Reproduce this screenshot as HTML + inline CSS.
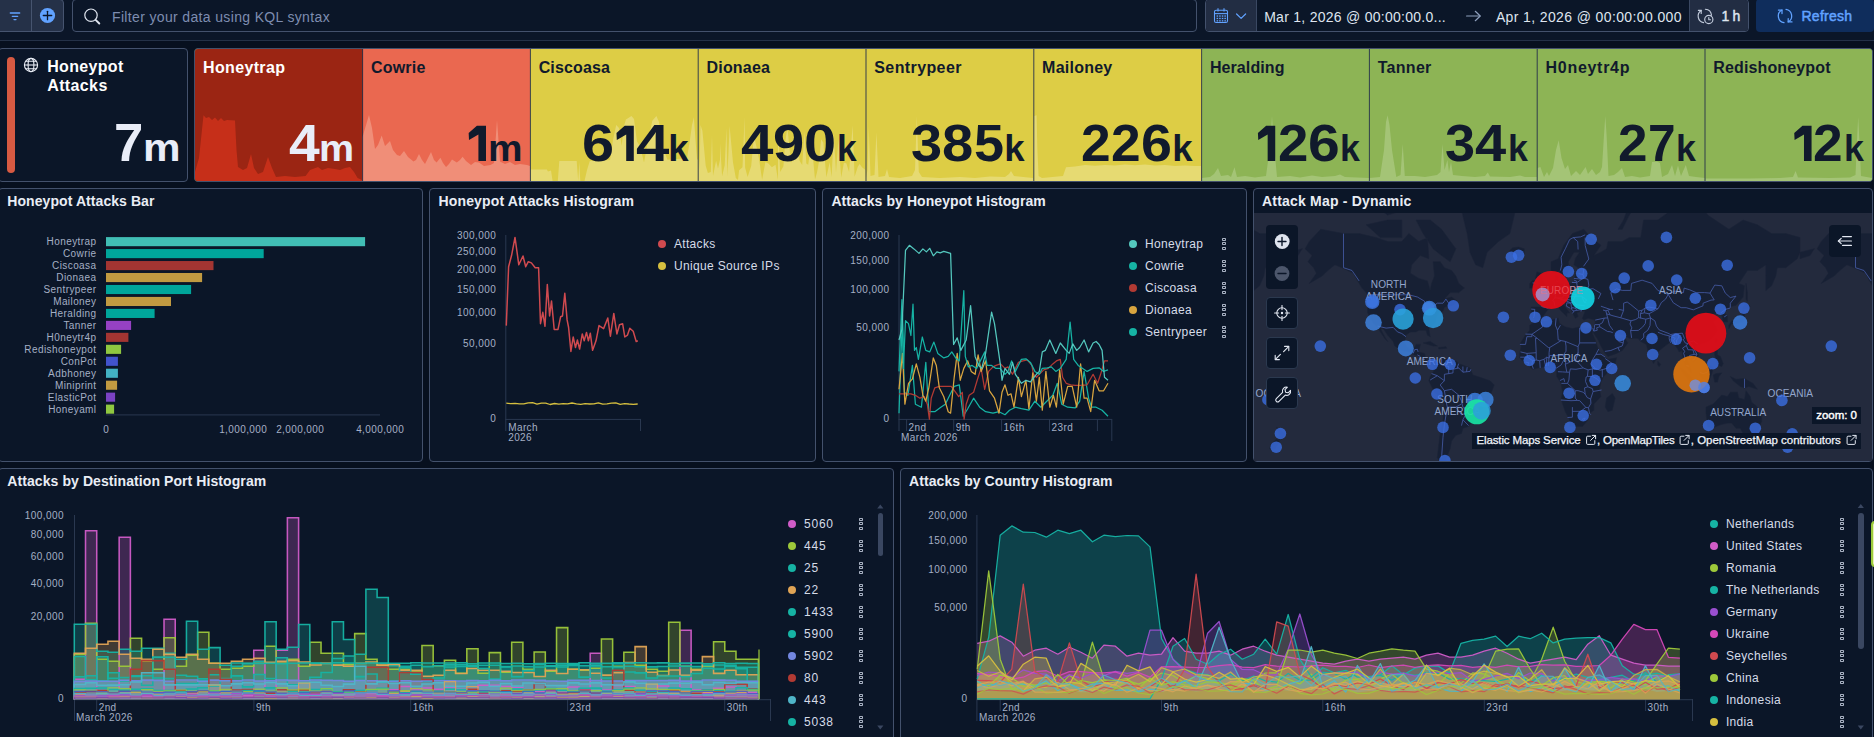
<!DOCTYPE html>
<html lang="en"><head><meta charset="utf-8"><title>Honeypot Attacks Dashboard</title>
<style>
*{box-sizing:border-box;margin:0;padding:0}
html,body{width:1874px;height:737px;overflow:hidden;background:#07101f;font-family:"Liberation Sans",sans-serif;}
body{position:relative}
.t{position:absolute;white-space:nowrap;display:block}
.abs{position:absolute}
.panel{position:absolute;background:#0b1628;border:1px solid #43516c;border-radius:4px;overflow:hidden}
svg{position:absolute;left:0;top:0;overflow:visible}
svg text{font-family:"Liberation Sans",sans-serif}
.topbar{position:absolute;left:0;top:0;width:1874px;height:41px;background:#0b1628;border-bottom:1px solid #243147}
.ctl{position:absolute;background:#0b1628;border:1px solid #43516c;border-radius:4px}
.mapbtn{position:absolute;width:32px;height:32px;background:#0b1628;border:1px solid #2b394f;border-radius:4px}
.dot{position:absolute;width:8px;height:8px;border-radius:50%}
.act{position:absolute;width:4px;height:12px}
.act i{position:absolute;left:0;width:4px;height:3px;border:1px solid #a9b2c3;border-radius:0.8px;display:block}
</style></head><body>

<div class="topbar">
<div class="abs" style="left:-1px;top:-1px;width:65px;height:33px;background:#253148;border:1px solid #46546f;border-radius:0 4px 4px 0"></div>
<div class="abs" style="left:31px;top:0;width:1px;height:31px;background:#46546f"></div>
<svg width="64" height="32" viewBox="0 0 64 32"><g stroke="#61a2ff" stroke-width="1.3" stroke-linecap="round"><line x1="10.3" y1="13" x2="19.7" y2="13"/><line x1="12.3" y1="16.3" x2="17.7" y2="16.3"/><line x1="14" y1="19.6" x2="16" y2="19.6"/></g><circle cx="47.5" cy="15.5" r="7.6" fill="#61a2ff"/><g stroke="#0b1628" stroke-width="1.3" stroke-linecap="round"><line x1="43.3" y1="15.5" x2="51.7" y2="15.5"/><line x1="47.5" y1="11.3" x2="47.5" y2="19.7"/></g></svg>
<div class="ctl" style="left:72px;top:-1px;width:1125px;height:33px"></div>
<svg width="120" height="32" viewBox="0 0 120 32"><circle cx="91" cy="15.2" r="6.2" fill="none" stroke="#dfe5ef" stroke-width="1.2"/><line x1="95.6" y1="19.8" x2="99.3" y2="23.5" stroke="#dfe5ef" stroke-width="1.9" stroke-linecap="round"/></svg>
<span class="t" style="left:112.00px;top:9.00px;font-size:14px;line-height:17px;color:#7e8db0;letter-spacing:0.349px;">Filter your data using KQL syntax</span>
<div class="ctl" style="left:1205px;top:-1px;width:543.5px;height:33px;overflow:hidden"><div class="abs" style="left:0;top:0;width:51px;height:31px;background:#222d43;border-right:1px solid #3a4862"></div><div class="abs" style="left:483px;top:0;width:60px;height:31px;background:#222d43;border-left:1px solid #3a4862"></div></div>
<svg width="1874" height="32" viewBox="0 0 1874 32"><g fill="none" stroke="#61a2ff" stroke-width="1.1"><rect x="1214.5" y="10.2" width="13" height="12.3" rx="1.6"/><line x1="1214.5" y1="13.6" x2="1227.5" y2="13.6"/><line x1="1218" y1="8.3" x2="1218" y2="11.5"/><line x1="1224" y1="8.3" x2="1224" y2="11.5"/></g><g fill="#61a2ff"><rect x="1216.6" y="15.4" width="1.5" height="1.3"/><rect x="1216.6" y="17.8" width="1.5" height="1.3"/><rect x="1216.6" y="20.2" width="1.5" height="1.3"/><rect x="1219.2" y="15.4" width="1.5" height="1.3"/><rect x="1219.2" y="17.8" width="1.5" height="1.3"/><rect x="1219.2" y="20.2" width="1.5" height="1.3"/><rect x="1221.8" y="15.4" width="1.5" height="1.3"/><rect x="1221.8" y="17.8" width="1.5" height="1.3"/><rect x="1221.8" y="20.2" width="1.5" height="1.3"/><rect x="1224.4" y="15.4" width="1.5" height="1.3"/><rect x="1224.4" y="17.8" width="1.5" height="1.3"/><rect x="1224.4" y="20.2" width="1.5" height="1.3"/></g><polyline points="1236.6,14 1241.1,18.4 1245.6,14" fill="none" stroke="#61a2ff" stroke-width="1.2" stroke-linecap="round" stroke-linejoin="round"/><g fill="none" stroke="#8e9fbc" stroke-width="1.2" stroke-linecap="round" stroke-linejoin="round"><line x1="1466.6" y1="16" x2="1480" y2="16"/><polyline points="1475.3,11.3 1480.2,16 1475.3,20.7"/></g><g fill="none" stroke="#c3ccdc" stroke-width="1.15" stroke-linecap="round" stroke-linejoin="round"><path d="M1703.6,22.6 A6.7,6.7 0 0 1 1701.2,10.4"/><polyline points="1698.4,10.4 1701.2,10.4 1701.2,13.5"/><path d="M1705.4,9.3 A6.7,6.7 0 0 1 1711.5,15.2"/><circle cx="1708.8" cy="19.5" r="4.1" fill="#222d43"/><polyline points="1708.8,17.6 1708.8,19.7 1710.5,19.7"/></g></svg>
<span class="t" style="left:1264.20px;top:8.80px;font-size:14px;line-height:17px;color:#dfe5ef;letter-spacing:0.269px;">Mar 1, 2026 @ 00:00:00.0...</span>
<span class="t" style="left:1495.90px;top:8.80px;font-size:14px;line-height:17px;color:#dfe5ef;letter-spacing:0.38px;">Apr 1, 2026 @ 00:00:00.000</span>
<span class="t" style="left:1721.50px;top:7.80px;font-size:14px;line-height:17px;color:#dfe5ef;letter-spacing:-0.321px;-webkit-text-stroke:0.45px #dfe5ef;">1 h</span>
<div class="abs" style="left:1755.5px;top:-1px;width:118.5px;height:33px;background:#0f2d5c;border-radius:4px"></div>
<svg width="1874" height="32" viewBox="0 0 1874 32"><g fill="none" stroke="#61a2ff" stroke-width="1.25" stroke-linecap="round" stroke-linejoin="round"><path d="M1784,22.6 A6.7,6.7 0 0 1 1782,10.0"/><polyline points="1778.4,10.1 1782,10.1 1782,13.6"/><path d="M1786,9.4 A6.7,6.7 0 0 1 1788.2,21.9"/><polyline points="1788.2,18.5 1788.2,21.9 1792,21.9"/></g></svg>
<span class="t" style="left:1801.50px;top:7.80px;font-size:14px;line-height:17px;color:#61a2ff;letter-spacing:0.24px;-webkit-text-stroke:0.5px #61a2ff;">Refresh</span>
</div>
<div class="panel" style="left:-2px;top:48px;width:190px;height:134px">
<div class="abs" style="left:8px;top:8px;width:8px;height:116px;border-radius:4px;background:#d75a42"></div>
</div>
<svg width="60" height="90" viewBox="0 0 60 90"><g fill="none" stroke="#e9edf5" stroke-width="1.1"><circle cx="31" cy="65" r="6.6"/><ellipse cx="31" cy="65" rx="2.9" ry="6.6"/><line x1="24.4" y1="65" x2="37.6" y2="65"/><path d="M25.6,61.3 H36.4 M25.6,68.7 H36.4"/></g></svg>
<span class="t" style="left:47.20px;top:57.00px;font-size:16px;line-height:19px;color:#ffffff;font-weight:700;letter-spacing:0.328px;">Honeypot</span>
<span class="t" style="left:47.20px;top:76.00px;font-size:16px;line-height:19px;color:#ffffff;font-weight:700;letter-spacing:0.385px;">Attacks</span>
<span class="t" style="left:114.30px;top:109.50px;font-size:53.77906976744187px;line-height:65px;color:#e9edf8;font-weight:700;transform:scaleX(0.9799);transform-origin:0 0">7</span>
<span class="t" style="left:142.97px;top:123.00px;font-size:39.7px;line-height:48px;color:#e9edf8;font-weight:700;transform:scaleX(1.0632);transform-origin:0 0">m</span>
<div class="panel" style="left:194px;top:48px;width:1679px;height:134px;background:#8db455">
<div class="abs" style="left:-0.2px;top:0;width:168.30px;height:132px;background:#9b2513"></div>
<div class="abs" style="left:167.6px;top:0;width:168.30px;height:132px;background:#ea6850"></div>
<div class="abs" style="left:335.4px;top:0;width:168.30px;height:132px;background:#ddcd45"></div>
<div class="abs" style="left:503.2px;top:0;width:168.30px;height:132px;background:#ddcd45"></div>
<div class="abs" style="left:671.0px;top:0;width:168.30px;height:132px;background:#ddcd45"></div>
<div class="abs" style="left:838.8px;top:0;width:168.30px;height:132px;background:#ddcd45"></div>
<div class="abs" style="left:1006.6px;top:0;width:168.30px;height:132px;background:#8db455"></div>
<div class="abs" style="left:1174.4px;top:0;width:168.30px;height:132px;background:#8db455"></div>
<div class="abs" style="left:1342.2px;top:0;width:168.30px;height:132px;background:#8db455"></div>
<div class="abs" style="left:1510.0px;top:0;width:168.30px;height:132px;background:#8db455"></div>
</div>
<svg width="1874" height="190" viewBox="0 0 1874 190">
<defs><clipPath id="cpm"><rect x="195" y="49" width="1677" height="132" rx="3"/></clipPath></defs><g clip-path="url(#cpm)">
<polygon points="194.8,182.0 195.0,172.0 199.0,158.0 203.5,115.3 206.0,118.0 209.0,117.0 212.0,120.0 215.0,117.5 218.0,121.0 221.0,118.0 224.0,121.0 227.0,120.0 235.0,120.5 236.5,150.0 238.0,167.0 243.0,170.0 247.0,168.0 251.0,154.0 254.0,168.0 258.0,174.0 263.0,172.0 268.0,157.0 272.0,168.0 276.0,177.0 285.0,176.0 295.0,177.0 305.6,176.0 310.0,170.0 318.0,167.0 322.0,170.0 328.0,168.0 335.0,169.0 340.0,170.0 345.0,168.0 350.0,167.0 354.0,172.0 357.6,178.0 362.0,180.0 362.6,182.0" fill="#c62f19"/>
<polygon points="362.6,182.0 362.5,137.0 369.0,115.0 372.0,128.0 375.0,149.0 378.0,145.0 381.7,135.5 385.0,146.0 390.0,141.0 393.0,150.0 397.0,155.0 400.0,156.0 404.0,151.0 408.0,157.0 413.5,161.5 416.0,160.0 419.0,154.0 422.0,160.0 425.0,164.0 428.0,158.0 431.0,152.0 434.0,160.0 436.6,162.5 440.4,157.7 443.0,163.0 446.0,167.0 449.0,164.0 452.0,159.6 456.8,162.5 460.0,160.0 462.6,156.7 466.0,161.0 471.0,165.0 475.0,162.0 479.0,162.5 484.0,166.0 490.5,165.0 494.0,163.0 497.0,120.0 500.0,161.5 505.0,164.0 510.0,162.0 515.0,165.0 520.0,164.0 527.0,165.0 530.0,166.0 530.4,182.0" fill="#f08e78"/>
<polygon points="530.4,182.0 530.5,169.4 546.8,169.4 548.0,171.5 551.0,170.5 552.6,181.0 557.8,181.0 559.3,161.0 576.7,161.0 578.2,181.0 579.3,162.0 580.3,181.0 584.5,181.0 587.0,170.0 589.8,161.0 600.0,160.5 610.0,160.0 613.0,140.0 616.2,125.0 619.0,128.0 621.7,145.8 624.0,126.0 625.9,119.4 631.5,116.0 634.0,119.0 637.0,141.6 640.0,146.0 644.0,162.4 647.0,146.0 652.3,120.8 656.4,116.0 659.0,122.0 662.0,145.8 667.5,159.7 687.0,158.3 689.7,141.6 692.0,125.0 693.9,117.3 695.5,140.0 697.0,159.0 698.0,160.0 698.2,182.0" fill="#e6da72"/>
<polygon points="698.2,182.0 698.5,150.0 699.5,170.7 700.5,125.0 702.4,130.8 705.7,165.8 707.9,173.0 710.8,172.0 712.0,135.0 713.0,176.0 716.1,160.7 718.0,168.4 720.0,159.7 720.0,143.0 722.1,176.3 724.7,165.3 726.5,128.0 727.4,176.5 729.6,125.9 733.0,162.4 735.8,178.1 738.0,180.0 739.1,170.2 742.5,167.3 744.6,117.0 745.1,167.6 747.6,177.1 751.2,166.1 754.0,136.0 756.8,148.2 759.2,160.0 762.1,179.7 765.4,162.1 768.4,163.5 771.9,167.3 775.5,164.7 778.0,180.0 778.1,128.5 780.2,172.0 783.4,166.2 785.3,141.3 787.4,127.8 791.0,162.6 793.3,159.6 796.4,129.5 799.6,160.7 802.2,164.9 804.5,131.5 806.3,163.4 808.2,164.7 811.5,141.6 815.0,179.6 817.0,172.6 819.1,160.9 821.1,139.2 823.3,142.4 826.4,177.2 829.7,162.2 831.6,176.9 833.7,133.5 836.0,172.4 838.4,138.9 841.2,177.6 843.9,162.7 846.3,163.2 849.1,172.1 852.6,125.2 854.6,176.7 857.8,166.7 859.6,164.0 862.3,167.5 865.5,170.0 866.0,182.0" fill="#e6da72"/>
<polygon points="866.0,182.0 866.0,178.0 867.5,170.0 868.7,126.8 870.5,176.0 874.5,175.0 876.4,132.6 878.5,177.0 885.0,176.0 887.0,169.0 889.0,177.0 900.0,178.0 912.0,176.0 915.0,170.0 916.8,116.0 918.8,172.0 922.0,177.0 940.0,178.0 960.0,177.0 975.0,178.0 990.0,176.5 1005.0,177.0 1009.0,174.0 1011.0,171.0 1014.0,176.0 1033.0,178.0 1033.8,182.0" fill="#e6da72"/>
<polygon points="1033.8,182.0 1033.5,150.0 1034.2,116.0 1036.6,115.3 1037.4,150.0 1038.6,176.0 1042.0,178.0 1063.0,176.0 1066.0,167.3 1075.0,166.5 1085.0,165.0 1095.0,165.8 1105.0,165.0 1115.0,165.6 1125.0,164.6 1135.0,165.3 1145.0,164.5 1155.0,165.5 1165.0,165.0 1175.0,166.0 1185.0,165.4 1195.0,166.0 1201.0,166.0 1201.6,182.0" fill="#e6da72"/>
<polygon points="1201.6,182.0 1201.5,178.0 1210.0,177.0 1214.0,174.0 1218.0,168.0 1221.0,176.0 1228.0,175.0 1231.0,177.0 1234.5,167.3 1237.0,177.0 1245.0,176.0 1255.0,177.5 1266.0,176.0 1269.5,150.0 1272.0,116.0 1274.5,150.0 1277.0,177.0 1290.0,176.0 1300.0,177.5 1312.0,175.5 1322.0,177.0 1335.0,176.0 1340.0,174.5 1345.0,177.0 1369.0,178.0 1369.4,182.0" fill="#a4c476"/>
<polygon points="1369.4,182.0 1369.5,178.0 1380.0,177.0 1384.0,150.0 1386.0,122.0 1387.6,115.3 1389.5,125.0 1392.0,150.0 1396.3,177.0 1400.5,175.0 1402.7,144.0 1404.8,176.0 1415.0,176.0 1425.0,177.0 1437.0,175.0 1440.5,172.0 1442.5,144.0 1444.5,170.0 1447.4,160.0 1449.0,172.0 1451.0,162.0 1453.0,175.0 1462.0,176.0 1475.0,177.0 1485.0,176.0 1487.8,172.5 1490.0,176.5 1510.0,177.0 1520.0,175.5 1525.0,177.0 1537.0,177.0 1537.2,182.0" fill="#a4c476"/>
<polygon points="1537.2,182.0 1537.5,168.0 1540.4,167.0 1544.0,177.0 1547.0,172.0 1549.0,176.0 1553.0,168.0 1556.0,150.0 1558.7,140.3 1561.5,158.0 1565.0,169.0 1568.0,165.0 1571.0,176.0 1576.0,171.0 1580.0,175.0 1585.6,167.0 1588.0,174.0 1592.0,169.0 1596.0,175.0 1600.0,172.0 1602.0,167.0 1604.0,135.0 1605.3,116.0 1606.6,135.0 1608.5,176.0 1614.0,175.0 1618.0,172.0 1622.0,168.0 1625.0,177.0 1632.0,176.0 1640.0,177.5 1650.0,176.0 1652.0,162.0 1657.0,161.5 1660.0,163.0 1662.0,177.0 1668.0,174.0 1672.0,165.0 1675.0,176.0 1678.0,165.5 1681.0,176.0 1685.8,165.0 1689.0,176.0 1696.0,177.0 1705.0,178.0 1705.0,182.0" fill="#a4c476"/>
<polygon points="1705.0,182.0 1705.5,178.5 1750.0,178.5 1780.0,178.0 1793.0,177.0 1795.6,171.0 1798.0,177.5 1830.0,178.0 1850.0,177.5 1855.5,175.0 1857.0,140.0 1858.2,117.0 1859.4,140.0 1861.0,176.0 1872.0,178.0 1872.8,182.0" fill="#a4c476"/>
<rect x="362.10" y="49" width="1" height="132" fill="#27324a" fill-opacity="0.9"/>
<rect x="529.90" y="49" width="1" height="132" fill="#27324a" fill-opacity="0.9"/>
<rect x="697.70" y="49" width="1" height="132" fill="#27324a" fill-opacity="0.9"/>
<rect x="865.50" y="49" width="1" height="132" fill="#27324a" fill-opacity="0.9"/>
<rect x="1033.30" y="49" width="1" height="132" fill="#27324a" fill-opacity="0.9"/>
<rect x="1201.10" y="49" width="1" height="132" fill="#27324a" fill-opacity="0.9"/>
<rect x="1368.90" y="49" width="1" height="132" fill="#27324a" fill-opacity="0.9"/>
<rect x="1536.70" y="49" width="1" height="132" fill="#27324a" fill-opacity="0.9"/>
<rect x="1704.50" y="49" width="1" height="132" fill="#27324a" fill-opacity="0.9"/>
</g></svg>
<span class="t" style="left:203.10px;top:58.00px;font-size:16px;line-height:19px;color:#ffffff;font-weight:700;letter-spacing:0.342px;">Honeytrap</span>
<span class="t" style="left:288.90px;top:113.00px;font-size:51.162790697674424px;line-height:61px;color:#e9edf8;font-weight:700;transform:scaleX(1.0792);transform-origin:0 0">4</span>
<span class="t" style="left:319.23px;top:125.50px;font-size:37.5px;line-height:45px;color:#e9edf8;font-weight:700;transform:scaleX(1.0528);transform-origin:0 0">m</span>
<span class="t" style="left:370.90px;top:58.00px;font-size:16px;line-height:19px;color:#111a2c;font-weight:700;letter-spacing:0.226px;">Cowrie</span>
<svg width="1874" height="200" viewBox="0 0 1874 200"><polygon points="476.90,125.80 485.99,125.80 485.99,161.00 478.42,161.00 478.42,134.42 469.01,139.88 468.67,133.02" fill="#111a2c"/></svg>
<span class="t" style="left:488.17px;top:125.50px;font-size:37.5px;line-height:45px;color:#111a2c;font-weight:700;transform:scaleX(1.0355);transform-origin:0 0">m</span>
<span class="t" style="left:538.70px;top:58.00px;font-size:16px;line-height:19px;color:#111a2c;font-weight:700;letter-spacing:0.129px;">Ciscoasa</span>
<span class="t" style="left:581.70px;top:113.00px;font-size:51.162790697674424px;line-height:61px;color:#111a2c;font-weight:700;transform:scaleX(1.1262);transform-origin:0 0">6</span><svg width="1874" height="200" viewBox="0 0 1874 200"><polygon points="624.71,125.80 633.79,125.80 633.79,161.00 626.22,161.00 626.22,134.42 616.82,139.88 616.47,133.02" fill="#111a2c"/></svg><span class="t" style="left:636.27px;top:113.00px;font-size:51.162790697674424px;line-height:61px;color:#111a2c;font-weight:700;transform:scaleX(1.1717);transform-origin:0 0">4</span>
<span class="t" style="left:668.30px;top:126.50px;font-size:36.6px;line-height:44px;color:#111a2c;font-weight:700;transform:scaleX(1.0000);transform-origin:0 0">k</span>
<span class="t" style="left:706.50px;top:58.00px;font-size:16px;line-height:19px;color:#111a2c;font-weight:700;letter-spacing:0.194px;">Dionaea</span>
<span class="t" style="left:740.60px;top:113.00px;font-size:51.162790697674424px;line-height:61px;color:#111a2c;font-weight:700;transform:scaleX(1.1395);transform-origin:0 0">4</span><span class="t" style="left:773.02px;top:113.00px;font-size:51.162790697674424px;line-height:61px;color:#111a2c;font-weight:700;transform:scaleX(1.0953);transform-origin:0 0">9</span><span class="t" style="left:804.17px;top:113.00px;font-size:51.162790697674424px;line-height:61px;color:#111a2c;font-weight:700;transform:scaleX(1.1293);transform-origin:0 0">0</span>
<span class="t" style="left:836.88px;top:126.50px;font-size:36.6px;line-height:44px;color:#111a2c;font-weight:700;transform:scaleX(0.9672);transform-origin:0 0">k</span>
<span class="t" style="left:874.30px;top:58.00px;font-size:16px;line-height:19px;color:#111a2c;font-weight:700;letter-spacing:0.391px;">Sentrypeer</span>
<span class="t" style="left:911.30px;top:113.00px;font-size:51.162790697674424px;line-height:61px;color:#111a2c;font-weight:700;transform:scaleX(1.0952);transform-origin:0 0">3</span><span class="t" style="left:942.45px;top:113.00px;font-size:51.162790697674424px;line-height:61px;color:#111a2c;font-weight:700;transform:scaleX(1.0986);transform-origin:0 0">8</span><span class="t" style="left:973.70px;top:113.00px;font-size:51.162790697674424px;line-height:61px;color:#111a2c;font-weight:700;transform:scaleX(1.0545);transform-origin:0 0">5</span>
<span class="t" style="left:1004.20px;top:126.50px;font-size:36.6px;line-height:44px;color:#111a2c;font-weight:700;transform:scaleX(1.0000);transform-origin:0 0">k</span>
<span class="t" style="left:1042.10px;top:58.00px;font-size:16px;line-height:19px;color:#111a2c;font-weight:700;letter-spacing:0.242px;">Mailoney</span>
<span class="t" style="left:1081.40px;top:113.00px;font-size:51.162790697674424px;line-height:61px;color:#111a2c;font-weight:700;transform:scaleX(1.0418);transform-origin:0 0">2</span><span class="t" style="left:1111.03px;top:113.00px;font-size:51.162790697674424px;line-height:61px;color:#111a2c;font-weight:700;transform:scaleX(1.0418);transform-origin:0 0">2</span><span class="t" style="left:1140.67px;top:113.00px;font-size:51.162790697674424px;line-height:61px;color:#111a2c;font-weight:700;transform:scaleX(1.0873);transform-origin:0 0">6</span>
<span class="t" style="left:1172.20px;top:126.50px;font-size:36.6px;line-height:44px;color:#111a2c;font-weight:700;transform:scaleX(1.0000);transform-origin:0 0">k</span>
<span class="t" style="left:1209.90px;top:58.00px;font-size:16px;line-height:19px;color:#111a2c;font-weight:700;letter-spacing:0.101px;">Heralding</span>
<svg width="1874" height="200" viewBox="0 0 1874 200"><polygon points="1266.15,125.80 1275.23,125.80 1275.23,161.00 1267.66,161.00 1267.66,134.42 1258.25,139.88 1257.91,133.02" fill="#111a2c"/></svg><span class="t" style="left:1277.51px;top:113.00px;font-size:51.162790697674424px;line-height:61px;color:#111a2c;font-weight:700;transform:scaleX(1.0680);transform-origin:0 0">2</span><span class="t" style="left:1307.89px;top:113.00px;font-size:51.162790697674424px;line-height:61px;color:#111a2c;font-weight:700;transform:scaleX(1.1148);transform-origin:0 0">6</span>
<span class="t" style="left:1340.25px;top:126.50px;font-size:36.6px;line-height:44px;color:#111a2c;font-weight:700;transform:scaleX(0.9781);transform-origin:0 0">k</span>
<span class="t" style="left:1377.70px;top:58.00px;font-size:16px;line-height:19px;color:#111a2c;font-weight:700;letter-spacing:0.291px;">Tanner</span>
<span class="t" style="left:1445.30px;top:113.00px;font-size:51.162790697674424px;line-height:61px;color:#111a2c;font-weight:700;transform:scaleX(1.0578);transform-origin:0 0">3</span><span class="t" style="left:1475.39px;top:113.00px;font-size:51.162790697674424px;line-height:61px;color:#111a2c;font-weight:700;transform:scaleX(1.0971);transform-origin:0 0">4</span>
<span class="t" style="left:1507.85px;top:126.50px;font-size:36.6px;line-height:44px;color:#111a2c;font-weight:700;transform:scaleX(0.9781);transform-origin:0 0">k</span>
<span class="t" style="left:1545.50px;top:58.00px;font-size:16px;line-height:19px;color:#111a2c;font-weight:700;letter-spacing:0.717px;">H0neytr4p</span>
<span class="t" style="left:1618.30px;top:113.00px;font-size:51.162790697674424px;line-height:61px;color:#111a2c;font-weight:700;transform:scaleX(1.0373);transform-origin:0 0">2</span><span class="t" style="left:1647.81px;top:113.00px;font-size:51.162790697674424px;line-height:61px;color:#111a2c;font-weight:700;transform:scaleX(0.9700);transform-origin:0 0">7</span>
<span class="t" style="left:1675.95px;top:126.50px;font-size:36.6px;line-height:44px;color:#111a2c;font-weight:700;transform:scaleX(0.9781);transform-origin:0 0">k</span>
<span class="t" style="left:1713.30px;top:58.00px;font-size:16px;line-height:19px;color:#111a2c;font-weight:700;letter-spacing:0.134px;">Redishoneypot</span>
<svg width="1874" height="200" viewBox="0 0 1874 200"><polygon points="1802.48,125.80 1811.56,125.80 1811.56,161.00 1803.99,161.00 1803.99,134.42 1794.59,139.88 1794.24,133.02" fill="#111a2c"/></svg><span class="t" style="left:1813.36px;top:113.00px;font-size:51.162790697674424px;line-height:61px;color:#111a2c;font-weight:700;transform:scaleX(1.0419);transform-origin:0 0">2</span>
<span class="t" style="left:1843.95px;top:126.50px;font-size:36.6px;line-height:44px;color:#111a2c;font-weight:700;transform:scaleX(0.9781);transform-origin:0 0">k</span>
<div class="panel" style="left:-2px;top:188px;width:425px;height:274px"></div>
<span class="t" style="left:7.30px;top:192.70px;font-size:14px;line-height:17px;color:#e9edf5;font-weight:700;letter-spacing:0.073px;">Honeypot Attacks Bar</span>
<svg width="430" height="470" viewBox="0 0 430 470">
<rect x="106" y="237.10" width="259.1" height="9.1" fill="#41beb5"/>
<text x="96.52" y="245.30" font-size="10" fill="#a5b0c5" text-anchor="end" letter-spacing="0.42">Honeytrap</text>
<rect x="106" y="249.06" width="157.7" height="9.1" fill="#00a69b"/>
<text x="96.52" y="257.26" font-size="10" fill="#a5b0c5" text-anchor="end" letter-spacing="0.42">Cowrie</text>
<rect x="106" y="261.03" width="107.5" height="9.1" fill="#a33532"/>
<text x="96.52" y="269.23" font-size="10" fill="#a5b0c5" text-anchor="end" letter-spacing="0.42">Ciscoasa</text>
<rect x="106" y="272.99" width="96.1" height="9.1" fill="#c19a41"/>
<text x="96.52" y="281.19" font-size="10" fill="#a5b0c5" text-anchor="end" letter-spacing="0.42">Dionaea</text>
<rect x="106" y="284.96" width="85.1" height="9.1" fill="#00a69b"/>
<text x="96.52" y="293.16" font-size="10" fill="#a5b0c5" text-anchor="end" letter-spacing="0.42">Sentrypeer</text>
<rect x="106" y="296.92" width="65.0" height="9.1" fill="#c19a41"/>
<text x="96.52" y="305.12" font-size="10" fill="#a5b0c5" text-anchor="end" letter-spacing="0.42">Mailoney</text>
<rect x="106" y="308.88" width="48.6" height="9.1" fill="#00a69b"/>
<text x="96.52" y="317.08" font-size="10" fill="#a5b0c5" text-anchor="end" letter-spacing="0.42">Heralding</text>
<rect x="106" y="320.85" width="25.1" height="9.1" fill="#9641c4"/>
<text x="96.52" y="329.05" font-size="10" fill="#a5b0c5" text-anchor="end" letter-spacing="0.42">Tanner</text>
<rect x="106" y="332.81" width="22.4" height="9.1" fill="#a33532"/>
<text x="96.52" y="341.01" font-size="10" fill="#a5b0c5" text-anchor="end" letter-spacing="0.42">H0neytr4p</text>
<rect x="106" y="344.78" width="15.1" height="9.1" fill="#8fc740"/>
<text x="96.52" y="352.98" font-size="10" fill="#a5b0c5" text-anchor="end" letter-spacing="0.42">Redishoneypot</text>
<rect x="106" y="356.74" width="11.9" height="9.1" fill="#4253cd"/>
<text x="96.52" y="364.94" font-size="10" fill="#a5b0c5" text-anchor="end" letter-spacing="0.42">ConPot</text>
<rect x="106" y="368.70" width="11.9" height="9.1" fill="#43b1c3"/>
<text x="96.52" y="376.90" font-size="10" fill="#a5b0c5" text-anchor="end" letter-spacing="0.42">Adbhoney</text>
<rect x="106" y="380.67" width="11.1" height="9.1" fill="#c19a41"/>
<text x="96.52" y="388.87" font-size="10" fill="#a5b0c5" text-anchor="end" letter-spacing="0.42">Miniprint</text>
<rect x="106" y="392.63" width="9.1" height="9.1" fill="#7a42c4"/>
<text x="96.52" y="400.83" font-size="10" fill="#a5b0c5" text-anchor="end" letter-spacing="0.42">ElasticPot</text>
<rect x="106" y="404.60" width="8.1" height="9.1" fill="#8fc740"/>
<text x="96.52" y="412.80" font-size="10" fill="#a5b0c5" text-anchor="end" letter-spacing="0.42">Honeyaml</text>
<rect x="106" y="414.4" width="274" height="1" fill="#2a3850"/>
<text x="106.20" y="433.00" font-size="10" fill="#a5b0c5" text-anchor="middle" letter-spacing="0.4">0</text>
<text x="243.20" y="433.00" font-size="10" fill="#a5b0c5" text-anchor="middle" letter-spacing="0.4">1,000,000</text>
<text x="300.20" y="433.00" font-size="10" fill="#a5b0c5" text-anchor="middle" letter-spacing="0.4">2,000,000</text>
<text x="380.20" y="433.00" font-size="10" fill="#a5b0c5" text-anchor="middle" letter-spacing="0.4">4,000,000</text>
</svg>
<div class="panel" style="left:429px;top:188px;width:387px;height:274px"></div>
<span class="t" style="left:438.50px;top:192.70px;font-size:14px;line-height:17px;color:#e9edf5;font-weight:700;letter-spacing:0.149px;">Honeypot Attacks Histogram</span>
<svg width="830" height="470" viewBox="0 0 830 470">
<rect x="505.3" y="235" width="1" height="196" fill="#2a3850"/><rect x="505.3" y="418.9" width="135.6" height="1" fill="#2a3850"/><rect x="640" y="419" width="1" height="12" fill="#2a3850"/>
<text x="496.35" y="239.10" font-size="10" fill="#a5b0c5" text-anchor="end" letter-spacing="0.45">300,000</text>
<text x="496.35" y="255.20" font-size="10" fill="#a5b0c5" text-anchor="end" letter-spacing="0.45">250,000</text>
<text x="496.35" y="272.80" font-size="10" fill="#a5b0c5" text-anchor="end" letter-spacing="0.45">200,000</text>
<text x="496.35" y="292.80" font-size="10" fill="#a5b0c5" text-anchor="end" letter-spacing="0.45">150,000</text>
<text x="496.35" y="316.20" font-size="10" fill="#a5b0c5" text-anchor="end" letter-spacing="0.45">100,000</text>
<text x="496.35" y="347.00" font-size="10" fill="#a5b0c5" text-anchor="end" letter-spacing="0.45">50,000</text>
<text x="496.35" y="422.10" font-size="10" fill="#a5b0c5" text-anchor="end" letter-spacing="0.45">0</text>
<text x="508.20" y="431.00" font-size="10" fill="#a5b0c5" letter-spacing="0.4">March</text>
<text x="508.20" y="441.20" font-size="10" fill="#a5b0c5" letter-spacing="0.4">2026</text>
<polyline points="506.3,325.6 508.6,266.7 511.6,255.3 515.0,237.4 518.8,264.8 523.0,256.0 525.7,266.7 528.3,261.7 531.4,262.9 535.2,267.8 538.6,267.8 540.5,323.7 542.8,312.3 545.0,326.3 547.3,284.5 549.6,316.0 551.5,300.9 554.2,329.4 558.0,329.4 560.6,316.8 562.5,316.0 564.8,293.3 567.1,319.9 568.6,327.5 570.9,351.4 573.2,337.0 575.5,347.6 577.4,340.0 579.6,349.1 582.3,333.9 584.2,340.8 586.5,332.4 588.4,340.8 590.3,333.2 592.6,350.3 596.0,340.8 599.0,325.6 603.6,328.6 607.8,318.0 610.4,336.2 613.8,313.4 616.9,334.0 619.5,324.8 622.6,323.7 624.8,337.0 627.5,335.1 629.8,328.2 633.2,331.3 636.2,341.5 637.8,340.8" fill="none" stroke="#d04a4f" stroke-width="1.5" stroke-linejoin="round"/>
<polyline points="506.3,403.1 510.7,403.7 515.1,403.4 519.4,403.8 523.8,403.8 528.2,402.8 532.6,402.7 537.0,404.2 541.3,403.2 545.7,403.1 550.1,404.5 554.5,403.5 558.9,404.2 563.2,403.6 567.6,403.9 572.0,403.0 576.4,403.8 580.8,404.3 585.1,403.6 589.5,404.0 593.9,403.9 598.3,402.8 602.7,404.1 607.0,403.8 611.4,403.2 615.8,402.8 620.2,404.3 624.6,403.6 628.9,404.0 633.3,404.3 637.7,404.0" fill="none" stroke="#d6bf3f" stroke-width="1.3" stroke-linejoin="round"/>
</svg>
<div class="dot" style="left:658.0px;top:239.9px;background:#d04a4f"></div>
<span class="t" style="left:673.90px;top:237.20px;font-size:12px;line-height:14px;color:#d6dce8;letter-spacing:0.34px;">Attacks</span>
<div class="dot" style="left:658.0px;top:261.9px;background:#d6bf3f"></div>
<span class="t" style="left:673.90px;top:259.20px;font-size:12px;line-height:14px;color:#d6dce8;letter-spacing:0.34px;">Unique Source IPs</span>
<div class="panel" style="left:822px;top:188px;width:425px;height:274px"></div>
<span class="t" style="left:831.40px;top:192.70px;font-size:14px;line-height:17px;color:#e9edf5;font-weight:700;letter-spacing:0.073px;">Attacks by Honeypot Histogram</span>
<svg width="1260" height="470" viewBox="0 0 1260 470">
<rect x="898.5" y="235" width="1" height="196" fill="#2a3850"/><rect x="898.5" y="418.9" width="213.5" height="1" fill="#2a3850"/><rect x="1111.3" y="419" width="1" height="22" fill="#2a3850"/>
<rect x="906.1" y="419" width="1" height="12" fill="#2a3850"/>
<rect x="953.2" y="419" width="1" height="12" fill="#2a3850"/>
<rect x="1001.1" y="419" width="1" height="12" fill="#2a3850"/>
<rect x="1049.0" y="419" width="1" height="12" fill="#2a3850"/>
<rect x="1096.9" y="419" width="1" height="12" fill="#2a3850"/>
<text x="908.60" y="431.00" font-size="10" fill="#a5b0c5" letter-spacing="0.4">2nd</text>
<text x="955.70" y="431.00" font-size="10" fill="#a5b0c5" letter-spacing="0.4">9th</text>
<text x="1003.60" y="431.00" font-size="10" fill="#a5b0c5" letter-spacing="0.4">16th</text>
<text x="1051.50" y="431.00" font-size="10" fill="#a5b0c5" letter-spacing="0.4">23rd</text>
<text x="901.00" y="441.20" font-size="10" fill="#a5b0c5" letter-spacing="0.4">March 2026</text>
<text x="889.55" y="239.10" font-size="10" fill="#a5b0c5" text-anchor="end" letter-spacing="0.45">200,000</text>
<text x="889.55" y="263.70" font-size="10" fill="#a5b0c5" text-anchor="end" letter-spacing="0.45">150,000</text>
<text x="889.55" y="292.50" font-size="10" fill="#a5b0c5" text-anchor="end" letter-spacing="0.45">100,000</text>
<text x="889.55" y="330.80" font-size="10" fill="#a5b0c5" text-anchor="end" letter-spacing="0.45">50,000</text>
<text x="889.55" y="422.10" font-size="10" fill="#a5b0c5" text-anchor="end" letter-spacing="0.45">0</text>
<polyline points="899.0,413.2 900.5,368.4 902.5,314.6 904.3,392.3 907.9,395.3 912.4,365.4 915.4,404.2 921.4,407.2 925.8,362.4 928.8,411.7 934.8,411.7 940.8,407.2 945.3,404.2 949.7,395.3 954.2,386.3 959.3,384.8 963.2,416.2 967.7,408.7 973.6,398.2 979.6,407.2 985.6,411.7 993.0,413.2 999.0,411.7 1005.0,414.7 1009.5,410.2 1015.4,407.2 1021.4,408.7 1028.9,410.2 1034.9,401.2 1040.8,407.2 1046.8,401.2 1052.8,395.3 1057.3,383.3 1061.7,404.2 1067.7,407.2 1075.2,407.8 1079.7,401.2 1084.1,371.4 1088.6,398.2 1091.6,407.2 1096.1,407.2 1102.1,410.2 1108.0,416.2" fill="none" stroke="#16b3a4" stroke-width="1.25" stroke-linejoin="round"/>
<polyline points="899.0,393.8 904.9,393.8 910.9,393.8 915.4,395.3 919.9,398.2 924.3,396.7 927.3,404.2 929.4,419.1 931.2,398.2 934.8,387.8 939.3,386.3 945.3,386.3 951.2,386.3 955.7,392.3 958.7,396.7 962.3,392.3 964.1,419.1 966.2,404.2 969.2,395.3 973.6,392.3 978.1,377.3 981.1,368.4 984.7,389.3 988.6,371.4 993.0,366.9 996.0,365.4 1000.5,363.9 1005.0,368.4 1008.0,366.9 1012.5,374.3 1015.4,368.4 1018.4,362.4 1022.9,360.9 1027.4,360.0 1031.9,365.4 1033.4,374.3 1036.4,377.3 1039.3,374.3 1043.8,369.9 1048.3,368.4 1052.8,363.9 1056.4,360.9 1060.3,359.4 1062.6,377.3 1066.2,383.3 1070.7,384.8 1075.2,385.4 1081.2,385.4 1087.1,384.8 1093.1,374.3 1097.6,383.3 1100.6,374.3 1104.5,360.9 1108.0,360.9" fill="none" stroke="#b23a33" stroke-width="1.25" stroke-linejoin="round"/>
<polyline points="899.0,389.3 902.5,353.4 904.9,404.2 908.5,383.3 912.4,378.8 916.3,363.9 919.9,377.3 922.9,395.3 925.8,401.2 928.8,387.8 933.3,357.9 936.3,365.4 939.3,387.8 943.8,396.7 948.2,411.7 950.6,413.2 954.2,377.3 957.2,353.4 960.2,380.3 963.8,368.4 967.7,360.9 971.2,371.4 975.1,374.3 978.1,354.9 981.1,371.4 985.6,360.9 989.5,390.8 994.5,398.2 999.0,413.2 1002.0,392.3 1005.0,384.8 1008.0,395.3 1011.0,393.8 1014.0,407.2 1018.4,377.3 1021.4,396.7 1025.9,380.3 1028.9,408.7 1032.8,372.8 1036.4,401.2 1039.3,377.3 1042.3,410.2 1045.9,371.4 1049.8,407.2 1053.4,395.3 1056.4,407.2 1059.7,369.9 1063.2,404.2 1067.7,386.3 1072.2,386.3 1076.7,407.2 1080.6,363.9 1084.1,398.2 1087.1,398.2 1090.7,411.7 1094.6,380.3 1099.1,390.8 1103.6,390.8 1108.0,383.3" fill="none" stroke="#d9a53f" stroke-width="1.25" stroke-linejoin="round"/>
<polyline points="899.0,371.4 901.9,299.7 903.4,368.4 905.5,320.6 908.5,323.6 910.9,335.5 913.0,304.2 914.5,350.4 916.3,347.5 918.4,359.4 922.3,337.0 925.8,350.4 929.7,351.9 933.9,342.1 937.8,353.4 943.8,357.9 948.2,356.4 951.8,351.9 955.7,357.9 959.3,360.9 963.8,290.7 965.3,356.4 968.3,366.9 972.1,365.4 976.6,368.4 981.1,359.4 984.7,351.9 987.1,365.4 991.6,365.4 996.0,368.4 999.9,368.4 1005.0,374.3 1008.0,371.4 1011.6,360.9 1015.4,371.4 1021.4,359.4 1025.9,358.8 1030.4,362.4 1034.9,371.4 1039.3,374.3 1042.3,368.4 1047.4,367.8 1051.3,366.9 1055.8,371.4 1060.3,368.4 1066.2,359.4 1070.1,322.1 1073.7,359.4 1078.2,365.4 1082.7,368.4 1087.1,371.4 1093.1,368.4 1099.1,367.8 1103.6,371.4 1108.0,369.9" fill="none" stroke="#16b3a4" stroke-width="1.25" stroke-linejoin="round"/>
<polyline points="899.0,340.0 901.9,329.5 905.5,250.4 909.4,245.3 913.9,248.9 919.0,253.4 922.9,248.9 926.4,251.9 929.7,248.3 933.3,255.8 936.9,251.9 940.2,252.8 943.8,251.3 950.6,253.4 953.6,344.5 957.2,337.9 960.8,350.4 966.2,340.0 970.6,305.6 975.1,356.4 978.7,365.4 981.7,368.4 985.6,353.4 991.6,312.2 994.5,323.6 1000.5,365.4 1002.0,380.3 1005.0,368.4 1009.5,374.3 1012.5,362.4 1015.4,374.3 1021.4,383.3 1025.9,380.3 1030.4,381.8 1036.4,374.3 1039.3,371.4 1042.3,351.9 1045.3,350.4 1049.8,340.0 1055.8,353.4 1060.3,343.0 1066.2,350.4 1069.2,353.4 1072.8,343.9 1076.7,350.4 1079.7,347.5 1084.1,340.0 1088.6,351.9 1093.1,343.0 1096.1,341.5 1099.1,344.5 1102.1,350.4 1104.5,377.3 1108.0,380.3" fill="none" stroke="#54c8be" stroke-width="1.25" stroke-linejoin="round"/>
</svg>
<div class="dot" style="left:1129.0px;top:239.9px;background:#54c8be"></div>
<span class="t" style="left:1144.90px;top:237.20px;font-size:12px;line-height:14px;color:#d6dce8;letter-spacing:0.34px;">Honeytrap</span>
<div class="act" style="left:1221.9px;top:237.9px"><i style="top:0"></i><i style="top:4.5px"></i><i style="top:9px"></i></div>
<div class="dot" style="left:1129.0px;top:261.9px;background:#16b3a4"></div>
<span class="t" style="left:1144.90px;top:259.20px;font-size:12px;line-height:14px;color:#d6dce8;letter-spacing:0.34px;">Cowrie</span>
<div class="act" style="left:1221.9px;top:259.9px"><i style="top:0"></i><i style="top:4.5px"></i><i style="top:9px"></i></div>
<div class="dot" style="left:1129.0px;top:283.9px;background:#b23a33"></div>
<span class="t" style="left:1144.90px;top:281.20px;font-size:12px;line-height:14px;color:#d6dce8;letter-spacing:0.34px;">Ciscoasa</span>
<div class="act" style="left:1221.9px;top:281.9px"><i style="top:0"></i><i style="top:4.5px"></i><i style="top:9px"></i></div>
<div class="dot" style="left:1129.0px;top:305.9px;background:#d9a53f"></div>
<span class="t" style="left:1144.90px;top:303.20px;font-size:12px;line-height:14px;color:#d6dce8;letter-spacing:0.34px;">Dionaea</span>
<div class="act" style="left:1221.9px;top:303.9px"><i style="top:0"></i><i style="top:4.5px"></i><i style="top:9px"></i></div>
<div class="dot" style="left:1129.0px;top:327.9px;background:#16b3a4"></div>
<span class="t" style="left:1144.90px;top:325.20px;font-size:12px;line-height:14px;color:#d6dce8;letter-spacing:0.34px;">Sentrypeer</span>
<div class="act" style="left:1221.9px;top:325.9px"><i style="top:0"></i><i style="top:4.5px"></i><i style="top:9px"></i></div>
<div class="panel" style="left:1253px;top:188px;width:620px;height:274px"></div>
<span class="t" style="left:1262.00px;top:192.70px;font-size:14px;line-height:17px;color:#e9edf5;font-weight:700;letter-spacing:0.201px;">Attack Map - Dynamic</span>
<svg width="1874" height="470" viewBox="0 0 1874 470">
<defs><clipPath id="cpmap"><rect x="1254" y="213" width="618" height="248"/></clipPath></defs>
<g clip-path="url(#cpmap)"><rect x="1254" y="213" width="620" height="249" fill="#232a3d"/>
<path d="M1019.2,307.1 L1019.2,316.5 L1023.5,320.1 L1029.2,318.3 L1032.0,314.7 L1036.3,309.1 L1037.7,307.1 L1043.4,305.2 L1046.2,307.1 L1049.1,311.0 L1054.8,316.5 L1054.8,312.8 L1057.6,312.8 L1050.5,303.2 L1051.9,303.2 L1059.0,309.1 L1060.4,312.8 L1063.3,318.3 L1066.1,316.5 L1064.7,312.8 L1069.0,311.0 L1073.2,311.0 L1070.4,318.3 L1071.8,320.1 L1076.1,318.3 L1083.2,320.1 L1083.2,323.5 L1081.8,328.6 L1080.4,328.6 L1081.8,333.5 L1086.0,339.8 L1088.9,346.0 L1093.2,353.4 L1096.0,356.4 L1104.5,353.4 L1110.2,350.5 L1115.9,342.9 L1111.6,336.7 L1106.0,339.8 L1103.1,335.1 L1100.3,330.2 L1104.5,333.5 L1111.6,335.1 L1117.3,338.3 L1125.9,338.3 L1128.7,341.4 L1134.4,344.4 L1135.8,350.5 L1138.7,357.8 L1141.5,363.6 L1145.8,356.4 L1145.8,351.9 L1152.9,346.0 L1157.2,342.9 L1161.4,342.9 L1165.7,349.0 L1167.1,351.9 L1170.0,350.5 L1171.4,360.7 L1174.2,366.5 L1178.5,372.2 L1179.9,372.9 L1178.5,367.9 L1174.2,356.4 L1177.1,357.8 L1181.3,362.1 L1184.2,359.3 L1187.0,354.9 L1184.2,350.5 L1182.8,346.0 L1187.0,344.4 L1192.7,342.9 L1198.4,339.8 L1202.7,335.1 L1205.5,330.2 L1204.1,326.9 L1201.2,321.8 L1205.5,318.3 L1199.8,316.5 L1199.8,314.7 L1205.5,312.8 L1209.8,314.7 L1211.2,321.8 L1215.5,321.8 L1215.5,316.5 L1212.6,312.8 L1216.9,307.1 L1224.0,305.2 L1231.1,297.0 L1232.5,285.8 L1226.8,283.4 L1235.4,270.5 L1245.3,270.5 L1253.9,264.8 L1253.9,275.9 L1253.9,290.4 L1259.6,285.8 L1263.8,275.9 L1265.2,267.7 L1273.8,267.7 L1285.2,258.7 L1288.0,252.2 L1288.0,237.6 L1273.8,233.6 L1259.6,233.6 L1245.3,224.8 L1231.1,220.1 L1216.9,229.3 L1195.6,215.1 L1181.3,191.4 L1174.2,204.1 L1160.0,209.8 L1145.8,220.1 L1131.6,220.1 L1128.7,237.6 L1117.3,237.6 L1110.2,241.5 L1096.0,241.5 L1094.6,248.8 L1088.9,252.2 L1081.8,255.5 L1088.9,245.2 L1078.9,237.6 L1071.8,229.3 L1060.4,233.6 L1051.9,245.2 L1046.2,258.7 L1039.1,261.8 L1039.1,270.5 L1043.4,273.2 L1047.6,270.5 L1049.1,278.4 L1050.5,280.9 L1053.3,278.4 L1057.6,267.7 L1056.2,261.8 L1061.9,252.2 L1067.6,252.2 L1063.3,258.7 L1061.9,264.8 L1066.1,267.7 L1074.7,267.7 L1071.8,270.5 L1064.7,270.5 L1063.3,275.9 L1061.9,280.9 L1059.0,283.4 L1051.9,283.4 L1046.2,283.4 L1043.4,280.9 L1043.4,275.9 L1046.2,275.9 L1044.8,283.4 L1042.0,285.8 L1037.7,288.1 L1034.8,290.4 L1029.2,294.8 L1024.9,297.0 L1030.6,301.2 L1029.2,307.1 L1019.2,307.1Z M1276.6,427.3 L1282.3,431.7 L1285.2,433.5 L1280.9,440.0 L1278.0,439.0 L1279.5,435.3 L1276.6,427.3Z M1276.6,439.0 L1279.5,440.9 L1275.2,448.8 L1269.5,448.8 L1270.9,444.8 L1276.6,439.0Z " fill="#172034" stroke="#1b2438" stroke-width="0.6" stroke-linejoin="round"/>
<path d="M1305.1,248.8 L1309.3,241.5 L1320.7,229.3 L1343.5,233.6 L1359.1,233.6 L1376.2,237.6 L1387.6,241.5 L1401.8,241.5 L1408.9,233.6 L1418.8,241.5 L1427.4,237.6 L1428.8,258.7 L1420.3,255.5 L1411.7,264.8 L1410.3,273.2 L1418.8,278.4 L1427.4,280.9 L1430.2,290.4 L1431.6,283.4 L1434.5,275.9 L1433.1,261.8 L1440.2,261.8 L1444.4,267.7 L1451.6,270.5 L1455.8,275.9 L1458.7,283.4 L1464.4,288.1 L1458.7,292.6 L1450.1,292.6 L1444.4,299.1 L1451.6,297.0 L1457.2,301.2 L1453.0,305.2 L1444.4,307.1 L1443.0,311.0 L1438.8,312.8 L1435.9,318.3 L1435.9,321.8 L1428.8,328.6 L1430.2,336.7 L1427.4,335.1 L1426.0,330.2 L1418.8,330.2 L1416.0,331.9 L1410.3,331.9 L1406.0,335.1 L1404.6,342.9 L1407.5,347.5 L1410.3,349.0 L1414.6,347.5 L1416.0,344.4 L1420.3,344.4 L1418.8,351.9 L1424.5,353.4 L1426.0,359.3 L1427.4,362.1 L1431.6,362.1 L1434.5,363.6 L1430.2,365.0 L1426.0,363.6 L1423.1,360.7 L1420.3,356.4 L1414.6,354.9 L1408.9,351.9 L1401.8,350.5 L1394.7,346.0 L1393.2,341.4 L1387.6,335.1 L1383.3,328.6 L1380.4,328.6 L1384.7,336.7 L1387.6,341.4 L1384.7,338.3 L1380.4,331.9 L1377.6,326.9 L1373.3,323.5 L1370.5,318.3 L1367.6,312.8 L1367.6,301.2 L1369.1,297.0 L1366.2,292.6 L1362.0,288.1 L1357.7,280.9 L1353.4,273.2 L1347.7,270.5 L1342.0,267.7 L1334.9,264.8 L1327.8,270.5 L1322.1,275.9 L1313.6,280.9 L1309.3,283.4 L1316.4,273.2 L1313.6,267.7 L1307.9,261.8 L1312.2,255.5 L1305.1,248.8Z M1440.2,191.4 L1458.7,158.2 L1494.2,147.3 L1515.6,167.9 L1515.6,209.8 L1509.9,233.6 L1498.5,241.5 L1487.1,252.2 L1482.8,267.7 L1475.7,264.8 L1470.0,252.2 L1467.2,233.6 L1461.5,209.8 L1447.3,204.1 L1440.2,191.4Z M1430.2,220.1 L1441.6,229.3 L1455.8,248.8 L1450.1,261.8 L1441.6,255.5 L1433.1,248.8 L1423.1,233.6 L1416.0,220.1 L1430.2,220.1Z M1366.2,224.8 L1387.6,220.1 L1401.8,220.1 L1401.8,237.6 L1380.4,237.6 L1366.2,224.8Z M1416.0,204.1 L1444.4,191.4 L1455.8,158.2 L1430.2,147.3 L1413.2,176.5 L1416.0,204.1Z M1373.3,204.1 L1394.7,204.1 L1404.6,209.8 L1387.6,215.1 L1373.3,204.1Z M1434.5,363.6 L1441.6,357.8 L1447.3,359.3 L1455.8,360.7 L1458.7,363.6 L1470.0,367.9 L1472.9,375.0 L1481.4,377.8 L1490.0,380.7 L1494.2,385.0 L1491.4,392.2 L1488.5,399.5 L1485.7,407.1 L1480.0,410.2 L1475.7,413.3 L1474.3,418.1 L1468.6,426.5 L1462.9,428.2 L1461.5,433.5 L1455.8,435.3 L1451.6,440.9 L1450.1,448.8 L1445.9,459.6 L1447.3,466.6 L1441.6,464.2 L1437.3,457.4 L1438.8,444.8 L1440.2,433.5 L1443.0,419.8 L1444.4,404.0 L1440.2,398.1 L1434.5,392.2 L1430.2,383.5 L1428.8,380.7 L1430.2,376.4 L1433.1,372.2 L1434.5,369.3 L1433.1,365.0 L1434.5,363.6Z M1531.2,307.1 L1531.2,316.5 L1535.5,320.1 L1541.2,318.3 L1544.0,314.7 L1548.3,309.1 L1549.7,307.1 L1555.4,305.2 L1558.2,307.1 L1561.1,311.0 L1566.8,316.5 L1566.8,312.8 L1569.6,312.8 L1562.5,303.2 L1563.9,303.2 L1571.0,309.1 L1572.4,312.8 L1575.3,318.3 L1578.1,316.5 L1576.7,312.8 L1581.0,311.0 L1585.2,311.0 L1582.4,318.3 L1583.8,320.1 L1588.1,318.3 L1595.2,320.1 L1595.2,323.5 L1593.8,328.6 L1592.4,328.6 L1593.8,333.5 L1598.0,339.8 L1600.9,346.0 L1605.2,353.4 L1608.0,356.4 L1616.5,353.4 L1622.2,350.5 L1627.9,342.9 L1623.6,336.7 L1618.0,339.8 L1615.1,335.1 L1612.3,330.2 L1616.5,333.5 L1623.6,335.1 L1629.3,338.3 L1637.9,338.3 L1640.7,341.4 L1646.4,344.4 L1647.8,350.5 L1650.7,357.8 L1653.5,363.6 L1657.8,356.4 L1657.8,351.9 L1664.9,346.0 L1669.2,342.9 L1673.4,342.9 L1677.7,349.0 L1679.1,351.9 L1682.0,350.5 L1683.4,360.7 L1686.2,366.5 L1690.5,372.2 L1691.9,372.9 L1690.5,367.9 L1686.2,356.4 L1689.1,357.8 L1693.3,362.1 L1696.2,359.3 L1699.0,354.9 L1696.2,350.5 L1694.8,346.0 L1699.0,344.4 L1704.7,342.9 L1710.4,339.8 L1714.7,335.1 L1717.5,330.2 L1716.1,326.9 L1713.2,321.8 L1717.5,318.3 L1711.8,316.5 L1711.8,314.7 L1717.5,312.8 L1721.8,314.7 L1723.2,321.8 L1727.5,321.8 L1727.5,316.5 L1724.6,312.8 L1728.9,307.1 L1736.0,305.2 L1743.1,297.0 L1744.5,285.8 L1738.8,283.4 L1747.4,270.5 L1757.3,270.5 L1765.9,264.8 L1765.9,275.9 L1765.9,290.4 L1771.6,285.8 L1775.8,275.9 L1777.2,267.7 L1785.8,267.7 L1797.2,258.7 L1800.0,252.2 L1800.0,237.6 L1785.8,233.6 L1771.6,233.6 L1757.3,224.8 L1743.1,220.1 L1728.9,229.3 L1707.6,215.1 L1693.3,191.4 L1686.2,204.1 L1672.0,209.8 L1657.8,220.1 L1643.6,220.1 L1640.7,237.6 L1629.3,237.6 L1622.2,241.5 L1608.0,241.5 L1606.6,248.8 L1600.9,252.2 L1593.8,255.5 L1600.9,245.2 L1590.9,237.6 L1583.8,229.3 L1572.4,233.6 L1563.9,245.2 L1558.2,258.7 L1551.1,261.8 L1551.1,270.5 L1555.4,273.2 L1559.6,270.5 L1561.1,278.4 L1562.5,280.9 L1565.3,278.4 L1569.6,267.7 L1568.2,261.8 L1573.9,252.2 L1579.6,252.2 L1575.3,258.7 L1573.9,264.8 L1578.1,267.7 L1586.7,267.7 L1583.8,270.5 L1576.7,270.5 L1575.3,275.9 L1573.9,280.9 L1571.0,283.4 L1563.9,283.4 L1558.2,283.4 L1555.4,280.9 L1555.4,275.9 L1558.2,275.9 L1556.8,283.4 L1554.0,285.8 L1549.7,288.1 L1546.8,290.4 L1541.2,294.8 L1536.9,297.0 L1542.6,301.2 L1541.2,307.1 L1531.2,307.1Z M1288.0,252.2 L1302.2,248.8 L1298.0,255.5 L1288.0,258.7Z M1535.5,320.9 L1542.6,321.8 L1558.2,318.3 L1559.6,323.5 L1565.3,326.9 L1572.4,328.6 L1579.6,326.9 L1589.5,328.6 L1592.4,328.6 L1592.4,333.5 L1595.2,339.8 L1596.6,344.4 L1599.5,351.9 L1605.2,357.8 L1608.0,359.3 L1616.5,357.8 L1615.1,363.6 L1610.8,369.3 L1603.7,376.4 L1600.9,382.1 L1599.5,389.3 L1600.9,396.6 L1593.8,404.0 L1593.8,410.2 L1589.5,413.3 L1588.1,419.8 L1582.4,426.5 L1575.3,426.5 L1569.6,426.5 L1569.6,419.8 L1565.3,411.7 L1561.1,399.5 L1562.5,392.2 L1561.1,383.5 L1556.8,376.4 L1556.8,369.3 L1551.1,369.3 L1546.8,366.5 L1538.3,367.9 L1532.6,369.3 L1525.5,363.6 L1519.8,357.8 L1519.8,353.4 L1521.2,346.0 L1519.8,344.4 L1525.5,335.1 L1529.8,330.2 L1529.8,325.2 L1535.5,320.9Z M1606.6,398.1 L1612.3,393.6 L1615.1,398.1 L1612.3,410.2 L1608.0,411.7 L1605.2,407.1 L1606.6,398.1Z M1536.9,292.6 L1545.4,290.4 L1546.1,285.8 L1542.6,280.9 L1541.2,273.2 L1536.9,271.9 L1535.5,278.4 L1539.7,283.4 L1536.9,288.1 L1539.7,289.3 L1536.9,292.6Z M1529.8,288.1 L1535.5,288.1 L1535.5,280.9 L1532.6,280.2 L1529.8,283.4 L1529.8,288.1Z M1509.9,250.5 L1512.7,255.5 L1518.4,257.5 L1524.1,253.9 L1524.1,248.8 L1518.4,247.0 L1512.7,247.8 L1509.9,250.5Z M1728.9,328.6 L1731.7,323.5 L1737.4,323.5 L1743.1,321.8 L1744.5,316.5 L1744.5,311.0 L1743.1,309.1 L1747.4,309.1 L1750.2,306.2 L1746.0,303.2 L1743.1,307.1 L1741.7,316.5 L1737.4,320.1 L1731.7,320.9 L1728.9,325.2 L1728.9,328.6Z M1679.1,367.2 L1683.4,369.3 L1691.9,377.8 L1694.8,383.5 L1689.1,380.7 L1683.4,373.6 L1679.1,367.2Z M1693.3,383.5 L1700.4,384.3 L1706.1,385.0 L1706.1,387.1 L1697.6,386.4 L1693.3,383.5Z M1699.0,373.6 L1704.7,369.3 L1710.4,365.0 L1713.2,367.9 L1711.8,373.6 L1709.0,380.7 L1701.9,379.3 L1699.0,373.6Z M1713.2,375.0 L1716.1,373.6 L1721.8,372.9 L1718.9,376.4 L1717.5,382.1 L1714.7,382.1 L1713.2,375.0Z M1730.3,376.4 L1736.0,379.3 L1744.5,378.6 L1753.1,383.5 L1757.3,389.3 L1748.8,386.4 L1744.5,387.9 L1740.3,386.4 L1733.2,380.7 L1730.3,376.4Z M1714.7,349.0 L1717.5,349.0 L1717.5,354.9 L1720.4,356.4 L1723.2,363.6 L1721.8,366.5 L1717.5,365.0 L1714.7,354.9 L1714.7,349.0Z M1706.1,407.1 L1706.1,413.3 L1707.6,426.5 L1711.8,428.2 L1720.4,424.8 L1727.5,423.1 L1731.7,423.1 L1736.0,428.2 L1740.3,428.2 L1743.1,433.5 L1748.8,433.5 L1753.1,435.3 L1757.3,431.7 L1761.6,421.4 L1761.6,413.3 L1755.9,405.6 L1751.6,402.5 L1750.2,396.6 L1746.0,390.7 L1744.5,399.5 L1738.8,398.1 L1737.4,392.2 L1730.3,392.2 L1727.5,396.6 L1721.8,395.1 L1717.5,399.5 L1713.2,404.0 L1706.1,407.1Z M1750.2,439.0 L1754.5,439.0 L1754.5,443.8 L1751.6,443.8 L1750.2,439.0Z M1788.6,427.3 L1794.3,431.7 L1797.2,433.5 L1792.9,440.0 L1790.0,439.0 L1791.5,435.3 L1788.6,427.3Z M1788.6,439.0 L1791.5,440.9 L1787.2,448.8 L1781.5,448.8 L1782.9,444.8 L1788.6,439.0Z M1657.8,361.4 L1660.6,364.3 L1659.2,366.5 L1657.8,365.0 L1657.8,361.4Z M1716.1,338.3 L1717.5,339.8 L1716.1,342.9 L1714.7,341.4 L1716.1,338.3Z M1746.0,283.4 L1747.4,292.6 L1747.4,301.2 L1746.0,299.1 L1746.0,283.4Z M1618.0,229.3 L1623.6,220.1 L1629.3,204.1 L1640.7,198.0 L1629.3,215.1 L1622.2,229.3 L1618.0,229.3Z M1423.1,342.9 L1430.2,341.4 L1437.3,346.0 L1433.1,346.0 L1423.1,342.9Z M1438.8,347.5 L1445.9,346.7 L1446.6,348.2 L1438.8,349.0 L1438.8,347.5Z " fill="#172034" stroke="#1b2438" stroke-width="0.6" stroke-linejoin="round"/>
<path d="M1369.1,294.8 L1408.9,294.8 L1417.4,297.0 L1424.5,301.2 L1426.0,309.1 L1431.6,307.1 L1437.3,303.2 L1443.0,303.2 L1445.9,299.1 L1448.7,303.2 M1343.5,233.6 L1343.5,267.7 L1352.0,270.5 L1359.1,280.9 M1377.6,326.1 L1386.1,328.1 L1393.2,327.4 L1397.5,331.9 L1401.8,333.5 L1406.0,336.7 M1413.2,353.4 L1414.6,349.7 L1417.4,349.3 L1418.1,351.9 M1417.4,354.9 L1420.3,356.4 M1422.1,359.3 L1425.0,359.3 M1426.0,361.4 L1426.2,363.3 M1441.6,358.5 L1441.6,365.0 L1448.7,366.5 L1448.7,373.6 M1458.7,367.9 L1453.0,369.3 L1453.0,372.9 L1444.4,374.3 L1444.4,380.7 L1440.2,385.0 L1444.4,390.7 L1451.6,389.3 L1458.7,395.1 L1461.5,401.0 L1462.9,407.1 L1467.2,411.7 L1462.9,419.8 L1468.6,425.6 M1458.7,363.6 L1457.2,367.9 L1458.7,367.9 L1462.9,372.2 L1470.0,371.4 L1470.8,369.3 M1462.9,366.5 L1462.9,372.2 M1467.2,367.2 L1466.5,371.7 M1430.2,380.0 L1437.3,375.7 L1444.4,380.7 M1431.6,373.6 L1437.3,375.7 M1444.4,390.7 L1445.9,399.5 L1444.4,401.0 M1445.9,400.3 L1447.3,407.1 L1455.8,407.1 L1461.5,404.0 M1447.3,407.1 L1444.4,424.8 L1443.0,437.2 L1441.6,457.4 M1455.8,407.1 L1461.5,414.9 L1467.2,412.5 M1461.5,425.6 L1462.9,419.8 M1541.2,321.8 L1542.6,326.9 L1531.9,334.3 L1525.5,334.1 M1531.9,334.3 L1531.9,336.7 L1526.9,336.7 L1525.5,344.4 L1519.8,344.4 M1556.1,318.3 L1555.4,325.2 L1557.5,330.2 L1558.2,339.8 L1561.1,340.6 M1560.4,325.2 L1557.5,330.2 M1579.6,327.8 L1579.6,342.9 M1579.6,342.9 L1595.9,342.9 M1531.9,334.3 L1537.2,338.3 L1548.3,347.5 L1549.7,347.5 L1561.1,340.6 L1565.3,341.4 L1578.1,346.7 L1578.1,352.4 M1578.1,346.7 L1579.6,342.9 M1537.2,338.3 L1535.5,338.3 L1536.2,352.7 L1526.9,353.4 M1526.9,353.4 L1527.6,357.2 L1520.2,357.2 M1520.5,351.9 L1526.9,353.4 M1536.2,352.7 L1536.2,360.0 L1539.7,360.7 L1544.0,359.3 L1546.8,357.1 L1549.0,358.2 L1549.1,352.7 L1549.7,347.5 M1527.6,357.2 L1532.6,360.7 L1536.2,360.0 M1532.6,360.7 L1531.9,364.3 L1533.3,368.7 M1525.5,362.1 L1529.1,362.9 L1527.6,365.2 M1539.7,360.7 L1540.2,367.9 M1544.0,359.3 L1545.7,366.3 M1546.8,357.1 L1546.3,366.2 M1548.3,365.9 L1549.0,358.2 L1549.7,355.6 L1563.2,355.3 L1564.6,358.5 L1561.1,365.0 L1556.1,368.3 M1563.2,355.3 L1566.0,360.7 L1565.3,364.3 L1576.0,359.3 L1578.1,352.4 M1565.3,341.4 L1566.0,346.0 L1566.0,351.2 L1563.2,355.3 M1578.1,352.4 L1576.0,359.3 L1578.1,362.6 L1583.1,367.9 L1588.1,369.9 L1592.4,368.9 L1595.1,368.5 L1590.9,363.6 L1592.4,360.0 L1595.9,354.4 L1598.8,349.0 M1595.9,354.4 L1600.9,354.2 L1605.2,357.1 M1595.1,368.5 L1600.2,370.2 L1603.7,369.3 L1608.0,367.9 L1612.3,363.6 L1605.2,358.5 M1602.3,369.4 L1602.3,377.3 M1592.4,368.9 L1592.4,376.4 L1597.6,379.3 L1599.8,381.7 M1592.4,376.4 L1587.4,376.4 L1586.1,377.0 L1585.5,381.4 L1587.8,386.8 L1592.4,388.6 L1593.1,391.5 L1601.5,390.0 M1588.1,369.9 L1587.4,376.4 M1561.4,383.4 L1567.5,383.4 L1575.3,390.7 L1578.1,390.7 L1583.1,392.2 L1585.2,394.2 L1584.5,387.9 L1587.8,386.8 M1567.5,383.4 L1568.9,380.0 L1569.6,372.2 L1570.3,368.9 L1576.0,369.3 L1583.1,367.9 M1557.9,371.7 L1562.5,371.9 L1566.8,372.2 L1569.6,372.2 M1565.3,364.3 L1566.8,372.2 M1559.9,380.6 L1563.9,378.6 L1564.6,381.8 M1560.8,400.0 L1571.0,400.7 L1577.3,400.4 L1579.8,400.7 M1575.3,390.7 L1575.3,398.1 L1577.3,400.4 M1572.4,407.1 L1572.4,417.2 L1567.5,417.5 M1572.4,411.4 L1580.8,411.3 L1585.8,407.4 L1579.8,400.7 M1585.8,407.4 L1588.5,407.7 L1589.5,413.3 L1590.8,414.7 M1588.5,407.7 L1590.9,403.3 L1590.6,399.1 L1587.2,397.5 L1585.2,394.2 M1590.6,399.1 L1593.1,391.5 M1582.4,419.1 L1585.2,418.0 L1583.8,420.7 L1582.4,419.1 M1531.2,309.1 L1534.8,309.4 L1534.0,316.5 L1533.5,317.9 M1541.4,306.5 L1548.4,308.3 M1547.6,290.4 L1552.5,293.7 L1555.7,294.8 L1554.8,297.8 L1552.5,300.7 L1554.0,301.4 L1554.8,305.6 M1554.0,284.6 L1552.5,288.6 L1552.5,293.7 M1548.8,289.5 L1552.5,288.6 M1556.2,280.9 L1557.5,281.4 M1564.2,283.6 L1564.9,290.4 L1561.4,292.0 L1563.6,295.5 L1562.5,298.0 L1557.7,298.0 L1554.8,297.8 M1571.9,282.4 L1576.7,282.7 L1577.6,289.0 L1578.1,291.5 L1576.1,294.6 L1570.9,293.7 L1564.9,290.4 M1563.6,295.5 L1568.2,295.7 L1568.5,297.0 L1566.9,299.3 L1563.5,300.1 L1557.7,298.0 M1568.2,295.7 L1570.9,293.7 M1576.1,294.6 L1575.4,296.1 L1572.9,300.7 L1566.9,299.3 M1568.5,297.0 L1575.4,296.1 M1575.4,296.1 L1581.8,296.3 L1584.1,302.2 L1586.2,302.8 M1572.9,300.7 L1576.0,304.2 L1576.3,304.8 L1584.7,305.8 M1581.8,296.3 L1586.7,300.1 L1584.1,302.2 M1563.5,300.1 L1566.2,300.7 L1571.0,303.2 L1571.6,309.1 L1573.2,311.0 L1573.9,311.3 L1572.4,313.4 M1566.2,300.7 L1567.5,300.1 M1571.0,303.2 L1566.8,302.8 L1566.5,306.2 L1570.3,308.3 M1571.0,303.2 L1572.9,300.7 M1571.6,309.1 L1572.4,307.5 L1575.9,308.5 M1576.0,304.2 L1575.9,308.5 L1576.6,310.4 L1581.4,309.6 L1581.0,311.5 M1573.2,311.0 L1576.6,310.4 M1581.4,309.6 L1583.8,309.1 M1577.6,289.0 L1587.4,289.7 L1592.9,288.6 L1600.9,293.5 L1598.3,298.9 M1576.7,282.7 L1581.8,279.2 L1584.1,278.2 L1587.9,279.4 L1588.8,285.3 L1587.4,289.7 M1573.9,278.4 L1581.8,279.2 M1578.6,273.7 L1583.0,274.5 L1584.1,278.2 M1583.8,269.1 L1583.0,274.5 M1571.9,282.4 L1576.4,282.4 L1576.4,280.9 L1573.9,280.2 M1583.5,266.3 L1588.8,259.0 L1585.2,245.6 L1585.2,237.6 M1578.1,249.5 L1577.7,241.5 L1573.2,237.6 M1560.4,270.5 L1561.8,264.8 L1561.1,257.2 L1565.3,248.8 L1569.6,239.6 L1573.2,237.6 L1580.6,236.9 L1585.2,234.8 M1532.6,282.9 L1535.5,283.4 M1595.2,320.1 L1604.3,318.1 L1607.7,317.9 L1606.6,313.9 L1605.9,310.8 L1603.0,310.0 M1600.9,306.2 L1610.1,309.4 L1613.0,309.4 M1605.9,310.8 L1610.1,309.4 M1606.6,313.9 L1610.1,314.9 L1613.0,315.8 M1608.0,310.6 L1610.1,314.9 M1607.7,317.9 L1609.4,325.2 L1613.0,330.2 M1604.3,318.1 L1602.3,322.8 L1599.2,324.6 L1599.8,326.8 L1596.6,327.8 L1597.3,330.2 L1593.8,331.1 M1594.6,324.7 L1599.2,324.6 M1594.5,325.2 L1594.5,327.8 L1593.8,331.1 M1592.8,328.1 L1593.8,331.1 M1599.8,326.8 L1607.6,331.5 L1610.1,331.7 L1612.8,332.7 M1604.9,351.4 L1610.8,350.5 L1618.0,347.5 L1622.2,346.0 L1623.2,342.9 L1618.8,341.5 L1617.4,339.4 M1618.0,347.5 L1619.5,351.1 M1623.2,342.9 L1623.9,338.6 M1613.0,315.8 L1620.7,317.8 L1631.0,320.8 L1630.0,324.0 L1631.9,327.9 L1630.6,330.6 L1631.6,337.9 M1630.6,330.6 L1638.3,330.4 L1642.6,327.1 L1645.3,323.5 L1645.8,319.2 L1650.5,317.9 M1631.0,320.8 L1635.7,319.5 L1638.6,317.6 L1645.8,319.2 M1613.0,300.1 L1610.8,292.6 L1616.5,288.8 L1622.2,290.4 L1630.8,290.4 L1631.5,283.4 L1642.1,280.2 L1652.1,283.4 L1657.8,290.4 L1668.2,294.4 M1668.2,294.4 L1665.6,299.1 L1661.3,302.6 L1658.1,308.7 L1649.2,307.1 L1645.0,308.1 L1642.1,310.2 L1638.6,311.0 L1638.6,317.6 M1623.6,310.4 L1623.6,303.2 L1627.2,302.0 L1630.8,304.6 L1638.6,311.0 M1620.7,317.8 L1623.6,310.4 L1618.7,309.4 M1658.1,308.7 L1649.0,313.8 L1650.5,317.9 M1645.0,308.1 L1644.3,312.8 L1649.0,313.8 M1642.1,310.2 L1640.4,313.8 L1640.7,318.3 M1640.4,313.8 L1644.3,312.8 M1668.2,294.4 L1674.8,291.1 L1683.4,292.6 L1684.1,288.1 L1689.4,289.7 L1696.2,292.6 L1704.7,292.6 L1710.0,293.1 L1714.2,299.9 L1711.0,300.1 L1703.1,303.2 L1703.0,305.8 L1693.3,309.8 L1686.2,307.7 L1681.1,307.7 L1673.3,302.8 L1668.2,294.4 M1710.0,293.1 L1714.7,285.1 L1721.8,285.8 L1725.3,293.1 L1730.3,297.6 L1736.0,296.1 L1730.3,303.2 L1730.3,307.3 L1729.7,308.3 M1729.7,308.3 L1726.0,309.1 L1720.9,312.8 M1724.2,316.9 L1726.6,315.4 M1650.5,317.9 L1654.9,320.9 L1656.4,326.1 L1659.2,329.9 L1669.2,333.7 L1670.3,334.6 L1674.8,333.8 L1682.4,333.2 L1684.4,338.3 L1683.4,339.8 L1685.1,342.8 L1687.8,343.7 L1689.2,342.3 L1693.8,340.9 L1695.8,342.9 L1697.6,343.7 M1650.5,317.9 L1650.0,325.6 L1647.8,330.2 L1643.6,333.5 L1643.8,337.2 L1641.0,340.3 M1669.3,335.9 L1669.2,338.9 L1670.6,342.9 M1674.8,333.8 L1679.1,335.1 L1678.7,337.9 L1676.7,339.8 L1676.6,342.6 L1675.3,344.9 M1669.3,335.9 L1671.7,336.7 L1675.1,338.3 L1673.7,340.6 L1675.3,344.9 M1657.9,332.2 L1663.5,334.5 L1669.3,335.9 M1670.3,334.6 L1671.7,335.4 L1674.8,335.3 L1674.8,333.8 M1687.8,343.7 L1686.4,345.5 L1682.5,348.2 L1684.7,351.4 L1683.7,353.3 L1685.1,358.2 L1684.2,360.7 M1686.4,345.5 L1687.9,349.7 L1693.0,349.9 L1694.2,354.4 L1689.5,355.5 L1690.3,358.2 M1689.2,342.3 L1692.1,345.4 L1693.6,348.7 L1696.9,354.2 L1694.6,359.3 L1692.5,360.1 M1694.2,354.4 L1696.9,354.2 M1686.4,365.7 L1689.2,366.2 M1699.9,372.4 L1703.1,373.6 L1707.3,372.3 L1708.8,368.9 L1711.3,369.0 M1744.5,378.7 L1744.5,388.0 " fill="none" stroke="#465ca8" stroke-opacity="0.95" stroke-width="0.85" stroke-linejoin="round"/>
<path d="M1817.1,248.8 L1821.3,241.5 L1832.7,229.3 L1855.5,233.6 L1871.1,233.6 L1888.2,237.6 L1899.6,241.5 L1913.8,241.5 L1920.9,233.6 L1930.8,241.5 L1939.4,237.6 L1940.8,258.7 L1932.3,255.5 L1923.7,264.8 L1922.3,273.2 L1930.8,278.4 L1939.4,280.9 L1942.2,290.4 L1943.6,283.4 L1946.5,275.9 L1945.1,261.8 L1952.2,261.8 L1956.4,267.7 L1963.6,270.5 L1967.8,275.9 L1970.7,283.4 L1976.4,288.1 L1970.7,292.6 L1962.1,292.6 L1956.4,299.1 L1963.6,297.0 L1969.2,301.2 L1965.0,305.2 L1956.4,307.1 L1955.0,311.0 L1950.8,312.8 L1947.9,318.3 L1947.9,321.8 L1940.8,328.6 L1942.2,336.7 L1939.4,335.1 L1938.0,330.2 L1930.8,330.2 L1928.0,331.9 L1922.3,331.9 L1918.0,335.1 L1916.6,342.9 L1919.5,347.5 L1922.3,349.0 L1926.6,347.5 L1928.0,344.4 L1932.3,344.4 L1930.8,351.9 L1936.5,353.4 L1938.0,359.3 L1939.4,362.1 L1943.6,362.1 L1946.5,363.6 L1942.2,365.0 L1938.0,363.6 L1935.1,360.7 L1932.3,356.4 L1926.6,354.9 L1920.9,351.9 L1913.8,350.5 L1906.7,346.0 L1905.2,341.4 L1899.6,335.1 L1895.3,328.6 L1892.4,328.6 L1896.7,336.7 L1899.6,341.4 L1896.7,338.3 L1892.4,331.9 L1889.6,326.9 L1885.3,323.5 L1882.5,318.3 L1879.6,312.8 L1879.6,301.2 L1881.1,297.0 L1878.2,292.6 L1874.0,288.1 L1869.7,280.9 L1865.4,273.2 L1859.7,270.5 L1854.0,267.7 L1846.9,264.8 L1839.8,270.5 L1834.1,275.9 L1825.6,280.9 L1821.3,283.4 L1828.4,273.2 L1825.6,267.7 L1819.9,261.8 L1824.2,255.5 L1817.1,248.8Z M1800.0,252.2 L1814.2,248.8 L1810.0,255.5 L1800.0,258.7Z " fill="#172034" stroke="#1b2438" stroke-width="0.6" stroke-linejoin="round"/>
<path d="M1855.5,233.6 L1855.5,267.7 L1864.0,270.5 L1871.1,280.9 " fill="none" stroke="#465ca8" stroke-opacity="0.95" stroke-width="0.85" stroke-linejoin="round"/>
<text x="1388.70" y="288.00" font-size="10.1" fill="#93a6cc" text-anchor="middle">NORTH</text>
<text x="1388.70" y="300.00" font-size="10.1" fill="#93a6cc" text-anchor="middle">AMERICA</text>
<text x="1561.50" y="293.80" font-size="10.1" fill="#93a6cc" text-anchor="middle">EUROPE</text>
<text x="1670.60" y="293.50" font-size="10.1" fill="#93a6cc" text-anchor="middle">ASIA</text>
<text x="1429.70" y="365.30" font-size="10.1" fill="#93a6cc" text-anchor="middle">AMERICA</text>
<text x="1569.10" y="362.20" font-size="10.1" fill="#93a6cc" text-anchor="middle">AFRICA</text>
<text x="1455.00" y="403.30" font-size="10.1" fill="#93a6cc" text-anchor="middle">SOUTH</text>
<text x="1457.50" y="415.00" font-size="10.1" fill="#93a6cc" text-anchor="middle">AMERICA</text>
<text x="1790.30" y="396.80" font-size="10.1" fill="#93a6cc" text-anchor="middle">OCEANIA</text>
<text x="1278.30" y="396.80" font-size="10.1" fill="#93a6cc" text-anchor="middle">OCEANIA</text>
<text x="1738.20" y="415.80" font-size="10.1" fill="#93a6cc" text-anchor="middle">AUSTRALIA</text>
<circle cx="1591.2" cy="239.3" r="5.8" fill="#3b6fe6" fill-opacity="0.78"/>
<circle cx="1666.4" cy="237.4" r="5.8" fill="#3b6fe6" fill-opacity="0.78"/>
<circle cx="1511.4" cy="257.2" r="5.8" fill="#3b6fe6" fill-opacity="0.78"/>
<circle cx="1518.6" cy="255.3" r="5.8" fill="#3b6fe6" fill-opacity="0.78"/>
<circle cx="1568.4" cy="271.6" r="5.8" fill="#3b6fe6" fill-opacity="0.78"/>
<circle cx="1581.7" cy="273.5" r="5.8" fill="#3b6fe6" fill-opacity="0.78"/>
<circle cx="1648.2" cy="265.9" r="5.8" fill="#3b6fe6" fill-opacity="0.78"/>
<circle cx="1727.2" cy="265.2" r="5.8" fill="#3b6fe6" fill-opacity="0.78"/>
<circle cx="1624.2" cy="278.1" r="5.8" fill="#3b6fe6" fill-opacity="0.78"/>
<circle cx="1676.7" cy="280.0" r="5.8" fill="#3b6fe6" fill-opacity="0.78"/>
<circle cx="1615.1" cy="287.6" r="5.8" fill="#3b6fe6" fill-opacity="0.78"/>
<circle cx="1695.3" cy="298.2" r="5.8" fill="#3b6fe6" fill-opacity="0.78"/>
<circle cx="1650.8" cy="305.4" r="5.8" fill="#3b6fe6" fill-opacity="0.78"/>
<circle cx="1720.4" cy="309.2" r="5.8" fill="#3b6fe6" fill-opacity="0.78"/>
<circle cx="1743.9" cy="308.1" r="5.8" fill="#3b6fe6" fill-opacity="0.78"/>
<circle cx="1372.3" cy="302.0" r="5.8" fill="#3b6fe6" fill-opacity="0.78"/>
<circle cx="1400.0" cy="309.6" r="5.8" fill="#3b6fe6" fill-opacity="0.78"/>
<circle cx="1428.6" cy="307.7" r="5.8" fill="#3b6fe6" fill-opacity="0.78"/>
<circle cx="1453.3" cy="305.8" r="5.8" fill="#3b6fe6" fill-opacity="0.78"/>
<circle cx="1503.4" cy="317.2" r="5.8" fill="#3b6fe6" fill-opacity="0.78"/>
<circle cx="1535.0" cy="317.2" r="5.8" fill="#3b6fe6" fill-opacity="0.78"/>
<circle cx="1546.4" cy="321.8" r="5.8" fill="#3b6fe6" fill-opacity="0.78"/>
<circle cx="1585.9" cy="327.9" r="5.8" fill="#3b6fe6" fill-opacity="0.78"/>
<circle cx="1620.4" cy="335.5" r="5.8" fill="#3b6fe6" fill-opacity="0.78"/>
<circle cx="1652.0" cy="338.5" r="5.8" fill="#3b6fe6" fill-opacity="0.78"/>
<circle cx="1676.3" cy="339.3" r="5.8" fill="#3b6fe6" fill-opacity="0.78"/>
<circle cx="1320.3" cy="346.1" r="5.8" fill="#3b6fe6" fill-opacity="0.78"/>
<circle cx="1831.3" cy="346.1" r="5.8" fill="#3b6fe6" fill-opacity="0.78"/>
<circle cx="1510.3" cy="355.2" r="5.8" fill="#3b6fe6" fill-opacity="0.78"/>
<circle cx="1529.3" cy="360.5" r="5.8" fill="#3b6fe6" fill-opacity="0.78"/>
<circle cx="1652.7" cy="354.5" r="5.8" fill="#3b6fe6" fill-opacity="0.78"/>
<circle cx="1749.6" cy="357.9" r="5.8" fill="#3b6fe6" fill-opacity="0.78"/>
<circle cx="1432.4" cy="364.3" r="5.8" fill="#3b6fe6" fill-opacity="0.78"/>
<circle cx="1450.2" cy="364.3" r="5.8" fill="#3b6fe6" fill-opacity="0.78"/>
<circle cx="1550.2" cy="367.4" r="5.8" fill="#3b6fe6" fill-opacity="0.78"/>
<circle cx="1596.5" cy="364.3" r="5.8" fill="#3b6fe6" fill-opacity="0.78"/>
<circle cx="1611.7" cy="368.5" r="5.8" fill="#3b6fe6" fill-opacity="0.78"/>
<circle cx="1712.8" cy="363.6" r="5.8" fill="#3b6fe6" fill-opacity="0.78"/>
<circle cx="1415.3" cy="378.0" r="5.8" fill="#3b6fe6" fill-opacity="0.78"/>
<circle cx="1595.0" cy="380.3" r="5.8" fill="#3b6fe6" fill-opacity="0.78"/>
<circle cx="1695.3" cy="385.2" r="5.8" fill="#3b6fe6" fill-opacity="0.78"/>
<circle cx="1704.0" cy="387.5" r="5.8" fill="#3b6fe6" fill-opacity="0.78"/>
<circle cx="1436.9" cy="394.0" r="5.8" fill="#3b6fe6" fill-opacity="0.78"/>
<circle cx="1569.1" cy="393.2" r="5.8" fill="#3b6fe6" fill-opacity="0.78"/>
<circle cx="1781.9" cy="400.4" r="5.8" fill="#3b6fe6" fill-opacity="0.78"/>
<circle cx="1583.2" cy="415.6" r="5.8" fill="#3b6fe6" fill-opacity="0.78"/>
<circle cx="1443.0" cy="427.4" r="5.8" fill="#3b6fe6" fill-opacity="0.78"/>
<circle cx="1569.9" cy="427.4" r="5.8" fill="#3b6fe6" fill-opacity="0.78"/>
<circle cx="1708.6" cy="425.5" r="5.8" fill="#3b6fe6" fill-opacity="0.78"/>
<circle cx="1755.3" cy="428.2" r="5.8" fill="#3b6fe6" fill-opacity="0.78"/>
<circle cx="1792.2" cy="433.9" r="5.8" fill="#3b6fe6" fill-opacity="0.78"/>
<circle cx="1280.4" cy="433.5" r="5.8" fill="#3b6fe6" fill-opacity="0.78"/>
<circle cx="1276.2" cy="447.2" r="5.8" fill="#3b6fe6" fill-opacity="0.78"/>
<circle cx="1787.6" cy="447.2" r="5.8" fill="#3b6fe6" fill-opacity="0.78"/>
<circle cx="1444.9" cy="460.5" r="5.8" fill="#3b6fe6" fill-opacity="0.78"/>
<circle cx="1267.9" cy="399.7" r="5.8" fill="#3b6fe6" fill-opacity="0.78"/>
<circle cx="1373.5" cy="322.5" r="8.3" fill="#3f83dd" fill-opacity="0.85"/>
<circle cx="1740.1" cy="322.5" r="7.2" fill="#3d7fe0" fill-opacity="0.85"/>
<circle cx="1405.8" cy="348.4" r="8" fill="#3d80dc" fill-opacity="0.85"/>
<circle cx="1622.7" cy="383.3" r="8.3" fill="#3787d6" fill-opacity="0.9"/>
<circle cx="1485.6" cy="399.7" r="8" fill="#3c84dd" fill-opacity="0.85"/>
<circle cx="1474.9" cy="400.7" r="8" fill="#3c7fe0" fill-opacity="0.85"/>
<circle cx="1372.3" cy="301.8" r="7.2" fill="#3d76e2" fill-opacity="0.85"/>
<circle cx="1429.3" cy="308.2" r="7.4" fill="#3f83e0" fill-opacity="0.85"/>
<circle cx="1403.1" cy="319.1" r="10.6" fill="#2aa5dd" fill-opacity="0.88"/>
<circle cx="1433.1" cy="318" r="10.2" fill="#2e9add" fill-opacity="0.88"/>
<circle cx="1551.3" cy="289.9" r="19" fill="#e30d18" fill-opacity="0.93"/>
<circle cx="1582.8" cy="298.2" r="11.8" fill="#14d2e2" fill-opacity="0.92"/>
<circle cx="1542.6" cy="294.4" r="7" fill="#9aa6e8" fill-opacity="0.75"/>
<circle cx="1705.9" cy="333.2" r="20.4" fill="#e30d18" fill-opacity="0.93"/>
<circle cx="1691.5" cy="374.2" r="18.2" fill="#dc740e" fill-opacity="0.93"/>
<circle cx="1695.3" cy="385.2" r="5.8" fill="#6f8fe0" fill-opacity="0.8"/><circle cx="1704" cy="387.5" r="5.8" fill="#4f7fe6" fill-opacity="0.8"/>
<circle cx="1476.8" cy="411.8" r="12.5" fill="#19e3a2" fill-opacity="0.92"/>
<circle cx="1481.8" cy="410.7" r="9" fill="#2e9ae0" fill-opacity="0.8"/>
<text x="1561.5" y="293.8" font-size="10" fill="#f07078" fill-opacity="0.55" text-anchor="middle" letter-spacing="0.15">EUROPE</text>
</g>
</svg>
<div class="abs" style="left:1266px;top:225px;width:32px;height:64px;background:#0b1628;border-radius:4px"></div>
<div class="mapbtn" style="left:1266px;top:297px"></div><div class="mapbtn" style="left:1266px;top:337px"></div><div class="mapbtn" style="left:1266px;top:377px"></div>
<div class="abs" style="left:1829px;top:225px;width:32px;height:32px;background:#0b1628;border-radius:4px"></div>
<div class="abs" style="left:1812px;top:407px;width:49px;height:17px;background:#0b1628"></div>
<div class="abs" style="left:1472px;top:432.5px;width:389px;height:16px;background:#0b1628"></div>
<svg width="1874" height="470" viewBox="0 0 1874 470">
<circle cx="1282.2" cy="241.5" r="7.4" fill="#dfe4ee"/><g stroke="#0b1628" stroke-width="1.4" stroke-linecap="round"><line x1="1278" y1="241.5" x2="1286" y2="241.5"/><line x1="1282" y1="237.5" x2="1282" y2="245.5"/></g>
<circle cx="1282" cy="273.5" r="7.4" fill="#4c566b"/><line x1="1278" y1="273.5" x2="1286" y2="273.5" stroke="#0b1628" stroke-width="1.4" stroke-linecap="round"/>
<g fill="none" stroke="#e3e8f2" stroke-width="1.1" stroke-linecap="round"><circle cx="1282" cy="313" r="5.2"/><line x1="1282" y1="305.6" x2="1282" y2="309.6"/><line x1="1282" y1="316.4" x2="1282" y2="320.4"/><line x1="1274.6" y1="313" x2="1278.6" y2="313"/><line x1="1285.4" y1="313" x2="1289.4" y2="313"/></g><circle cx="1282" cy="313" r="1.2" fill="#e3e8f2"/>
<g fill="none" stroke="#e3e8f2" stroke-width="1.1" stroke-linecap="round" stroke-linejoin="round"><line x1="1283.6" y1="351.6" x2="1288.6" y2="346.6"/><polyline points="1284.6,346.4 1288.8,346.4 1288.8,350.6"/><line x1="1280.4" y1="354.4" x2="1275.4" y2="359.4"/><polyline points="1275.2,355.4 1275.2,359.6 1279.4,359.6"/></g>
<path d="M1276.3,398.6 L1282.6,392.3 A4,4 0 0 1 1287.4,387.2 L1285,389.7 L1285.6,392.2 L1288.1,392.8 L1290.5,390.4 A4,4 0 0 1 1285.3,395.1 L1279,401.3 A1.9,1.9 0 0 1 1276.3,398.6 Z" fill="none" stroke="#e3e8f2" stroke-width="1.1" stroke-linejoin="round"/>
<g fill="none" stroke="#e3e8f2" stroke-width="1.2" stroke-linecap="round" stroke-linejoin="round"><line x1="1842.6" y1="236.6" x2="1851.4" y2="236.6"/><line x1="1838.4" y1="241" x2="1851.4" y2="241"/><line x1="1842.6" y1="245.4" x2="1851.4" y2="245.4"/><polyline points="1841.2,238.4 1838.4,241 1841.2,243.6"/></g>
<g fill="none" stroke="#e3e8f2" stroke-width="1" stroke-linecap="round" stroke-linejoin="round"><path d="M1590.5,436.2 H1587.6 Q1586.6,436.2 1586.6,437.2 V443.4 Q1586.6,444.4 1587.6,444.4 H1593.8 Q1594.8,444.4 1594.8,443.4 V440.6"/><line x1="1590.6" y1="440.4" x2="1595.4" y2="435.6"/><polyline points="1592.2,435.4 1595.6,435.4 1595.6,438.8"/></g><g fill="none" stroke="#e3e8f2" stroke-width="1" stroke-linecap="round" stroke-linejoin="round"><path d="M1684.0,436.2 H1681.1 Q1680.1,436.2 1680.1,437.2 V443.4 Q1680.1,444.4 1681.1,444.4 H1687.3 Q1688.3,444.4 1688.3,443.4 V440.6"/><line x1="1684.1" y1="440.4" x2="1688.9" y2="435.6"/><polyline points="1685.7,435.4 1689.1,435.4 1689.1,438.8"/></g><g fill="none" stroke="#e3e8f2" stroke-width="1" stroke-linecap="round" stroke-linejoin="round"><path d="M1851.0,436.2 H1848.1 Q1847.1,436.2 1847.1,437.2 V443.4 Q1847.1,444.4 1848.1,444.4 H1854.3 Q1855.3,444.4 1855.3,443.4 V440.6"/><line x1="1851.1" y1="440.4" x2="1855.9" y2="435.6"/><polyline points="1852.7,435.4 1856.1,435.4 1856.1,438.8"/></g>
</svg>
<span class="t" style="left:1816.30px;top:407.80px;font-size:11.5px;line-height:14px;color:#ffffff;letter-spacing:-0.058px;-webkit-text-stroke:0.4px #fff;">zoom: 0</span>
<span class="t" style="left:1476.50px;top:433.40px;font-size:11.5px;line-height:14px;color:#f1f4fa;letter-spacing:-0.136px;-webkit-text-stroke:0.25px #f1f4fa;">Elastic Maps Service</span>
<span class="t" style="left:1597.00px;top:433.40px;font-size:11.5px;line-height:14px;color:#f1f4fa;letter-spacing:-0.232px;-webkit-text-stroke:0.25px #f1f4fa;">, OpenMapTiles</span>
<span class="t" style="left:1690.80px;top:433.40px;font-size:11.5px;line-height:14px;color:#f1f4fa;letter-spacing:-0.03px;-webkit-text-stroke:0.25px #f1f4fa;">, OpenStreetMap contributors</span>
<div class="panel" style="left:-2px;top:468px;width:896px;height:290px"></div>
<span class="t" style="left:7.30px;top:472.50px;font-size:14px;line-height:17px;color:#e9edf5;font-weight:700;letter-spacing:0.083px;">Attacks by Destination Port Histogram</span>
<svg width="900" height="737" viewBox="0 0 900 737">
<rect x="74" y="515" width="1" height="206" fill="#2a3850"/><rect x="74" y="699.2" width="697" height="1" fill="#2a3850"/><rect x="770" y="699" width="1" height="22" fill="#2a3850"/>
<rect x="96.2" y="699" width="1" height="12" fill="#2a3850"/>
<rect x="253.4" y="699" width="1" height="12" fill="#2a3850"/>
<rect x="410.2" y="699" width="1" height="12" fill="#2a3850"/>
<rect x="567.1" y="699" width="1" height="12" fill="#2a3850"/>
<rect x="724.2" y="699" width="1" height="12" fill="#2a3850"/>
<text x="98.70" y="711.20" font-size="10" fill="#a5b0c5" letter-spacing="0.4">2nd</text>
<text x="255.90" y="711.20" font-size="10" fill="#a5b0c5" letter-spacing="0.4">9th</text>
<text x="412.70" y="711.20" font-size="10" fill="#a5b0c5" letter-spacing="0.4">16th</text>
<text x="569.60" y="711.20" font-size="10" fill="#a5b0c5" letter-spacing="0.4">23rd</text>
<text x="726.70" y="711.20" font-size="10" fill="#a5b0c5" letter-spacing="0.4">30th</text>
<text x="76.00" y="721.40" font-size="10" fill="#a5b0c5" letter-spacing="0.4">March 2026</text>
<text x="63.92" y="519.20" font-size="10" fill="#a5b0c5" text-anchor="end" letter-spacing="0.42">100,000</text>
<text x="63.92" y="538.40" font-size="10" fill="#a5b0c5" text-anchor="end" letter-spacing="0.42">80,000</text>
<text x="63.92" y="560.40" font-size="10" fill="#a5b0c5" text-anchor="end" letter-spacing="0.42">60,000</text>
<text x="63.92" y="586.50" font-size="10" fill="#a5b0c5" text-anchor="end" letter-spacing="0.42">40,000</text>
<text x="63.92" y="620.40" font-size="10" fill="#a5b0c5" text-anchor="end" letter-spacing="0.42">20,000</text>
<text x="63.92" y="702.20" font-size="10" fill="#a5b0c5" text-anchor="end" letter-spacing="0.42">0</text>
<path d="M74.30,699.20 V679.20 H85.52 V530.70 H96.73 V692.41 H107.95 V695.61 H119.16 V537.20 H130.38 V695.69 H141.59 V695.90 H152.81 V692.21 H164.02 V619.20 H175.24 V693.40 H186.45 V693.96 H197.67 V695.25 H208.88 V692.54 H220.10 V695.55 H231.31 V692.98 H242.53 V695.62 H253.74 V650.20 H264.96 V695.14 H276.17 V650.20 H287.38 V517.80 H298.60 V692.18 H309.81 V694.68 H321.03 V691.78 H332.24 V695.15 H343.46 V694.23 H354.67 V691.93 H365.89 V692.99 H377.10 V695.70 H388.32 V689.68 H399.53 V686.46 H410.75 V689.05 H421.96 V688.08 H433.18 V689.20 H444.39 V687.90 H455.61 V689.54 H466.82 V690.97 H478.04 V685.22 H489.25 V685.23 H500.47 V686.48 H511.68 V687.54 H522.90 V690.68 H534.11 V691.36 H545.33 V690.89 H556.54 V692.64 H567.76 V687.07 H578.97 V690.00 H590.19 V653.20 H601.40 V690.11 H612.62 V685.54 H623.83 V686.42 H635.05 V693.20 H646.26 V691.52 H657.48 V685.92 H668.69 V689.44 H679.91 V630.20 H691.12 V690.02 H702.34 V692.62 H713.56 V688.16 H724.77 V686.97 H735.99 V691.04 H747.20 V692.50 H758.42 V699.20Z" fill="#d05cc8" fill-opacity="0.26"/>
<path d="M74.30,699.20 V654.20 H85.52 V623.20 H96.73 V659.20 H107.95 V661.20 H119.16 V666.20 H130.38 V638.20 H141.59 V661.20 H152.81 V669.20 H164.02 V637.70 H175.24 V666.20 H186.45 V655.20 H197.67 V632.20 H208.88 V663.20 H220.10 V669.20 H231.31 V668.20 H242.53 V666.20 H253.74 V663.20 H264.96 V646.20 H276.17 V663.20 H287.38 V659.20 H298.60 V666.20 H309.81 V642.20 H321.03 V653.20 H332.24 V653.20 H343.46 V664.20 H354.67 V633.60 H365.89 V659.20 H377.10 V665.20 H388.32 V669.20 H399.53 V669.20 H410.75 V671.20 H421.96 V645.40 H433.18 V665.80 H444.39 V660.20 H455.61 V673.20 H466.82 V648.70 H478.04 V673.20 H489.25 V652.60 H500.47 V672.20 H511.68 V642.20 H522.90 V669.20 H534.11 V652.00 H545.33 V671.20 H556.54 V627.60 H567.76 V669.20 H578.97 V670.20 H590.19 V668.20 H601.40 V638.90 H612.62 V666.20 H623.83 V652.20 H635.05 V665.20 H646.26 V669.20 H657.48 V671.20 H668.69 V622.20 H679.91 V666.20 H691.12 V669.20 H702.34 V666.20 H713.56 V641.80 H724.77 V651.20 H735.99 V659.20 H747.20 V659.20 H758.42 V699.20Z" fill="#9dc83a" fill-opacity="0.26"/>
<path d="M74.30,699.20 V624.20 H85.52 V624.20 H96.73 V651.20 H107.95 V652.20 H119.16 V649.20 H130.38 V651.20 H141.59 V648.20 H152.81 V648.20 H164.02 V653.20 H175.24 V659.20 H186.45 V621.20 H197.67 V649.20 H208.88 V647.60 H220.10 V665.20 H231.31 V666.20 H242.53 V663.20 H253.74 V661.20 H264.96 V621.80 H276.17 V649.20 H287.38 V647.20 H298.60 V624.40 H309.81 V663.20 H321.03 V663.20 H332.24 V621.80 H343.46 V639.50 H354.67 V654.20 H365.89 V589.20 H377.10 V597.50 H388.32 V665.82 H399.53 V666.34 H410.75 V665.26 H421.96 V666.62 H433.18 V665.80 H444.39 V666.92 H455.61 V666.37 H466.82 V665.47 H478.04 V665.21 H489.25 V665.29 H500.47 V666.48 H511.68 V666.00 H522.90 V666.64 H534.11 V667.07 H545.33 V666.21 H556.54 V665.39 H567.76 V665.36 H578.97 V665.69 H590.19 V665.12 H601.40 V666.74 H612.62 V666.99 H623.83 V666.32 H635.05 V666.74 H646.26 V666.89 H657.48 V666.41 H668.69 V665.90 H679.91 V666.21 H691.12 V666.64 H702.34 V665.39 H713.56 V665.04 H724.77 V666.31 H735.99 V667.22 H747.20 V667.32 H758.42 V699.20Z" fill="#16b3a4" fill-opacity="0.26"/>
<path d="M74.30,699.20 V653.20 H85.52 V648.20 H96.73 V644.20 H107.95 V641.20 H119.16 V654.20 H130.38 V658.20 H141.59 V659.20 H152.81 V649.20 H164.02 V654.20 H175.24 V657.20 H186.45 V654.20 H197.67 V659.20 H208.88 V663.20 H220.10 V663.20 H231.31 V661.20 H242.53 V659.20 H253.74 V658.20 H264.96 V662.27 H276.17 V661.36 H287.38 V660.45 H298.60 V662.09 H309.81 V665.00 H321.03 V663.35 H332.24 V665.13 H343.46 V666.14 H354.67 V663.37 H365.89 V661.91 H377.10 V665.13 H388.32 V664.57 H399.53 V670.20 H410.75 V670.20 H421.96 V676.20 H433.18 V675.20 H444.39 V670.20 H455.61 V673.40 H466.82 V668.50 H478.04 V670.20 H489.25 V670.20 H500.47 V671.20 H511.68 V672.50 H522.90 V672.50 H534.11 V676.40 H545.33 V670.16 H556.54 V673.46 H567.76 V669.33 H578.97 V669.71 H590.19 V673.26 H601.40 V675.12 H612.62 V672.61 H623.83 V662.40 H635.05 V646.60 H646.26 V672.29 H657.48 V675.50 H668.69 V670.04 H679.91 V675.25 H691.12 V670.10 H702.34 V656.60 H713.56 V673.35 H724.77 V670.18 H735.99 V674.72 H747.20 V674.66 H758.42 V699.20Z" fill="#e0a455" fill-opacity="0.26"/>
<path d="M74.30,699.20 V656.47 H85.52 V679.74 H96.73 V656.66 H107.95 V678.19 H119.16 V680.99 H130.38 V675.78 H141.59 V685.15 H152.81 V657.14 H164.02 V657.27 H175.24 V683.46 H186.45 V683.51 H197.67 V680.24 H208.88 V685.88 H220.10 V680.39 H231.31 V675.89 H242.53 V686.89 H253.74 V674.49 H264.96 V678.48 H276.17 V657.71 H287.38 V684.82 H298.60 V682.57 H309.81 V677.24 H321.03 V672.51 H332.24 V658.54 H343.46 V656.03 H354.67 V676.63 H365.89 V673.92 H377.10 V682.18 H388.32 V681.13 H399.53 V667.61 H410.75 V674.31 H421.96 V681.59 H433.18 V678.02 H444.39 V664.85 H455.61 V664.63 H466.82 V666.20 H478.04 V668.51 H489.25 V679.14 H500.47 V666.95 H511.68 V676.60 H522.90 V670.63 H534.11 V664.46 H545.33 V665.85 H556.54 V667.09 H567.76 V664.10 H578.97 V677.11 H590.19 V665.86 H601.40 V678.00 H612.62 V663.82 H623.83 V671.99 H635.05 V672.89 H646.26 V678.05 H657.48 V676.04 H668.69 V676.03 H679.91 V676.52 H691.12 V673.54 H702.34 V668.20 H713.56 V669.07 H724.77 V665.32 H735.99 V668.82 H747.20 V681.41 H758.42 V699.20Z" fill="#16b3a4" fill-opacity="0.26"/>
<path d="M74.30,699.20 V676.74 H85.52 V675.70 H96.73 V680.67 H107.95 V672.69 H119.16 V677.41 H130.38 V676.46 H141.59 V675.82 H152.81 V677.91 H164.02 V678.63 H175.24 V675.30 H186.45 V676.15 H197.67 V678.65 H208.88 V674.75 H220.10 V678.54 H231.31 V662.98 H242.53 V663.63 H253.74 V663.36 H264.96 V663.23 H276.17 V663.69 H287.38 V663.34 H298.60 V663.06 H309.81 V663.08 H321.03 V663.47 H332.24 V662.76 H343.46 V663.03 H354.67 V663.36 H365.89 V663.04 H377.10 V663.13 H388.32 V663.17 H399.53 V663.31 H410.75 V662.70 H421.96 V663.06 H433.18 V663.00 H444.39 V662.94 H455.61 V662.72 H466.82 V663.68 H478.04 V663.08 H489.25 V662.96 H500.47 V663.44 H511.68 V663.30 H522.90 V663.65 H534.11 V663.50 H545.33 V663.32 H556.54 V663.60 H567.76 V663.45 H578.97 V662.79 H590.19 V663.15 H601.40 V663.19 H612.62 V662.73 H623.83 V663.13 H635.05 V662.70 H646.26 V663.06 H657.48 V662.89 H668.69 V663.62 H679.91 V663.10 H691.12 V662.94 H702.34 V663.65 H713.56 V662.77 H724.77 V663.54 H735.99 V663.23 H747.20 V663.53 H758.42 V699.20Z" fill="#16b3a4" fill-opacity="0.26"/>
<path d="M74.30,699.20 V681.38 H85.52 V681.06 H96.73 V681.34 H107.95 V681.18 H119.16 V680.34 H130.38 V680.85 H141.59 V680.14 H152.81 V680.35 H164.02 V681.33 H175.24 V680.02 H186.45 V680.08 H197.67 V681.30 H208.88 V680.13 H220.10 V680.80 H231.31 V680.73 H242.53 V680.04 H253.74 V681.06 H264.96 V680.67 H276.17 V680.09 H287.38 V680.39 H298.60 V680.74 H309.81 V680.03 H321.03 V680.26 H332.24 V680.55 H343.46 V681.24 H354.67 V680.53 H365.89 V680.76 H377.10 V681.11 H388.32 V681.33 H399.53 V680.66 H410.75 V681.23 H421.96 V680.78 H433.18 V680.46 H444.39 V680.76 H455.61 V681.03 H466.82 V680.58 H478.04 V680.81 H489.25 V680.31 H500.47 V680.66 H511.68 V680.00 H522.90 V680.07 H534.11 V680.37 H545.33 V681.07 H556.54 V681.24 H567.76 V680.15 H578.97 V680.30 H590.19 V680.53 H601.40 V680.90 H612.62 V681.02 H623.83 V680.44 H635.05 V680.61 H646.26 V680.57 H657.48 V680.51 H668.69 V680.35 H679.91 V681.13 H691.12 V681.05 H702.34 V680.03 H713.56 V680.12 H724.77 V680.17 H735.99 V681.34 H747.20 V681.31 H758.42 V699.20Z" fill="#7387e0" fill-opacity="0.26"/>
<path d="M74.30,699.20 V692.35 H85.52 V691.57 H96.73 V690.58 H107.95 V693.19 H119.16 V690.99 H130.38 V669.20 H141.59 V660.60 H152.81 V660.60 H164.02 V669.20 H175.24 V690.54 H186.45 V691.83 H197.67 V691.31 H208.88 V669.20 H220.10 V679.20 H231.31 V689.98 H242.53 V689.51 H253.74 V693.33 H264.96 V693.10 H276.17 V689.65 H287.38 V690.58 H298.60 V689.86 H309.81 V692.63 H321.03 V691.58 H332.24 V692.41 H343.46 V689.65 H354.67 V691.86 H365.89 V667.20 H377.10 V667.20 H388.32 V692.07 H399.53 V672.50 H410.75 V672.50 H421.96 V679.50 H433.18 V691.56 H444.39 V691.85 H455.61 V693.21 H466.82 V689.32 H478.04 V693.31 H489.25 V693.28 H500.47 V690.88 H511.68 V691.28 H522.90 V690.27 H534.11 V683.50 H545.33 V689.82 H556.54 V693.32 H567.76 V692.63 H578.97 V690.39 H590.19 V693.29 H601.40 V692.18 H612.62 V670.20 H623.83 V690.23 H635.05 V692.29 H646.26 V692.99 H657.48 V691.91 H668.69 V690.07 H679.91 V691.87 H691.12 V693.11 H702.34 V690.15 H713.56 V690.85 H724.77 V684.20 H735.99 V684.20 H747.20 V689.13 H758.42 V699.20Z" fill="#b23a33" fill-opacity="0.26"/>
<path d="M74.30,699.20 V684.51 H85.52 V682.68 H96.73 V685.18 H107.95 V685.11 H119.16 V684.70 H130.38 V682.03 H141.59 V672.70 H152.81 V672.70 H164.02 V684.89 H175.24 V684.87 H186.45 V684.88 H197.67 V684.72 H208.88 V684.76 H220.10 V685.73 H231.31 V683.88 H242.53 V682.71 H253.74 V684.00 H264.96 V682.52 H276.17 V683.89 H287.38 V685.82 H298.60 V682.91 H309.81 V682.30 H321.03 V685.29 H332.24 V686.59 H343.46 V684.12 H354.67 V666.20 H365.89 V683.86 H377.10 V681.87 H388.32 V683.44 H399.53 V682.68 H410.75 V686.38 H421.96 V683.97 H433.18 V682.76 H444.39 V686.28 H455.61 V686.29 H466.82 V683.01 H478.04 V682.20 H489.25 V686.28 H500.47 V683.53 H511.68 V685.98 H522.90 V682.97 H534.11 V683.45 H545.33 V685.47 H556.54 V685.60 H567.76 V682.87 H578.97 V684.09 H590.19 V682.88 H601.40 V684.73 H612.62 V685.01 H623.83 V681.86 H635.05 V683.34 H646.26 V684.23 H657.48 V684.01 H668.69 V683.10 H679.91 V683.16 H691.12 V682.13 H702.34 V684.65 H713.56 V682.57 H724.77 V683.37 H735.99 V682.43 H747.20 V682.67 H758.42 V699.20Z" fill="#4fb5c8" fill-opacity="0.26"/>
<path d="M74.30,699.20 V688.53 H85.52 V688.26 H96.73 V687.91 H107.95 V689.50 H119.16 V690.08 H130.38 V689.15 H141.59 V688.69 H152.81 V690.59 H164.02 V690.60 H175.24 V691.97 H186.45 V688.99 H197.67 V687.74 H208.88 V690.82 H220.10 V691.86 H231.31 V691.68 H242.53 V690.58 H253.74 V691.24 H264.96 V687.85 H276.17 V692.40 H287.38 V691.16 H298.60 V692.13 H309.81 V689.46 H321.03 V688.82 H332.24 V691.80 H343.46 V692.39 H354.67 V690.41 H365.89 V689.78 H377.10 V688.15 H388.32 V692.52 H399.53 V692.16 H410.75 V691.78 H421.96 V691.61 H433.18 V691.52 H444.39 V689.11 H455.61 V689.73 H466.82 V691.58 H478.04 V691.78 H489.25 V691.29 H500.47 V691.84 H511.68 V688.91 H522.90 V691.14 H534.11 V689.96 H545.33 V688.61 H556.54 V690.30 H567.76 V691.40 H578.97 V688.26 H590.19 V688.13 H601.40 V690.99 H612.62 V689.96 H623.83 V687.91 H635.05 V690.29 H646.26 V691.59 H657.48 V692.45 H668.69 V687.96 H679.91 V688.69 H691.12 V690.78 H702.34 V690.06 H713.56 V690.12 H724.77 V691.33 H735.99 V687.75 H747.20 V689.41 H758.42 V699.20Z" fill="#16b3a4" fill-opacity="0.26"/>
<path d="M74.30,699.20 V694.25 H85.52 V695.16 H96.73 V693.31 H107.95 V693.71 H119.16 V692.01 H130.38 V692.35 H141.59 V692.78 H152.81 V694.57 H164.02 V694.57 H175.24 V693.91 H186.45 V694.16 H197.67 V691.72 H208.88 V685.20 H220.10 V692.65 H231.31 V691.23 H242.53 V694.13 H253.74 V693.06 H264.96 V694.60 H276.17 V692.12 H287.38 V695.19 H298.60 V683.20 H309.81 V691.82 H321.03 V691.91 H332.24 V694.87 H343.46 V694.12 H354.67 V692.33 H365.89 V694.81 H377.10 V693.28 H388.32 V693.33 H399.53 V691.38 H410.75 V692.85 H421.96 V691.77 H433.18 V693.99 H444.39 V681.70 H455.61 V693.53 H466.82 V686.50 H478.04 V694.84 H489.25 V691.89 H500.47 V694.37 H511.68 V693.03 H522.90 V693.10 H534.11 V694.57 H545.33 V691.87 H556.54 V693.95 H567.76 V693.96 H578.97 V694.90 H590.19 V693.98 H601.40 V693.33 H612.62 V692.34 H623.83 V693.76 H635.05 V692.45 H646.26 V684.20 H657.48 V693.62 H668.69 V693.35 H679.91 V691.33 H691.12 V691.88 H702.34 V692.58 H713.56 V695.15 H724.77 V693.69 H735.99 V692.36 H747.20 V694.25 H758.42 V699.20Z" fill="#e0a455" fill-opacity="0.26"/>
<path d="M74.30,699.20 V689.88 H85.52 V690.41 H96.73 V692.65 H107.95 V687.74 H119.16 V688.70 H130.38 V691.67 H141.59 V689.62 H152.81 V691.25 H164.02 V690.82 H175.24 V690.00 H186.45 V691.21 H197.67 V691.01 H208.88 V690.74 H220.10 V689.37 H231.31 V691.42 H242.53 V691.70 H253.74 V689.04 H264.96 V691.05 H276.17 V687.97 H287.38 V689.89 H298.60 V689.08 H309.81 V691.04 H321.03 V688.57 H332.24 V692.24 H343.46 V692.00 H354.67 V692.23 H365.89 V689.31 H377.10 V689.16 H388.32 V691.80 H399.53 V690.69 H410.75 V688.52 H421.96 V689.74 H433.18 V692.25 H444.39 V691.57 H455.61 V691.91 H466.82 V692.08 H478.04 V690.67 H489.25 V692.34 H500.47 V688.10 H511.68 V690.56 H522.90 V690.14 H534.11 V689.46 H545.33 V688.87 H556.54 V688.59 H567.76 V690.77 H578.97 V691.04 H590.19 V690.64 H601.40 V692.62 H612.62 V690.70 H623.83 V689.20 H635.05 V687.79 H646.26 V688.75 H657.48 V689.40 H668.69 V689.66 H679.91 V692.61 H691.12 V691.04 H702.34 V690.99 H713.56 V689.45 H724.77 V692.17 H735.99 V690.81 H747.20 V690.15 H758.42 V699.20Z" fill="#9dc83a" fill-opacity="0.26"/>
<path d="M74.30,699.20 V691.33 H85.52 V691.22 H96.73 V691.87 H107.95 V693.22 H119.16 V691.40 H130.38 V690.99 H141.59 V692.06 H152.81 V692.64 H164.02 V692.20 H175.24 V693.27 H186.45 V691.56 H197.67 V690.74 H208.88 V692.15 H220.10 V691.55 H231.31 V691.19 H242.53 V693.11 H253.74 V690.87 H264.96 V691.82 H276.17 V693.11 H287.38 V693.45 H298.60 V692.97 H309.81 V691.97 H321.03 V691.61 H332.24 V692.71 H343.46 V690.91 H354.67 V692.62 H365.89 V692.31 H377.10 V693.33 H388.32 V690.78 H399.53 V693.29 H410.75 V690.99 H421.96 V692.07 H433.18 V692.02 H444.39 V692.02 H455.61 V692.91 H466.82 V690.97 H478.04 V690.72 H489.25 V691.25 H500.47 V691.90 H511.68 V693.33 H522.90 V691.23 H534.11 V692.83 H545.33 V691.01 H556.54 V692.98 H567.76 V691.98 H578.97 V691.21 H590.19 V693.14 H601.40 V692.06 H612.62 V693.47 H623.83 V693.60 H635.05 V693.16 H646.26 V690.74 H657.48 V690.88 H668.69 V691.72 H679.91 V692.78 H691.12 V691.69 H702.34 V691.49 H713.56 V692.56 H724.77 V691.92 H735.99 V691.29 H747.20 V693.65 H758.42 V699.20Z" fill="#4253cd" fill-opacity="0.26"/>
<path d="M74.30,699.20 V695.42 H85.52 V694.78 H96.73 V695.56 H107.95 V694.97 H119.16 V694.53 H130.38 V695.48 H141.59 V694.65 H152.81 V695.27 H164.02 V694.54 H175.24 V695.10 H186.45 V694.36 H197.67 V695.81 H208.88 V694.29 H220.10 V695.55 H231.31 V693.60 H242.53 V694.46 H253.74 V694.77 H264.96 V694.91 H276.17 V694.40 H287.38 V694.25 H298.60 V694.08 H309.81 V694.10 H321.03 V694.73 H332.24 V693.51 H343.46 V693.89 H354.67 V693.85 H365.89 V694.92 H377.10 V694.86 H388.32 V694.54 H399.53 V693.73 H410.75 V694.64 H421.96 V694.64 H433.18 V694.86 H444.39 V693.73 H455.61 V695.13 H466.82 V695.77 H478.04 V694.16 H489.25 V693.74 H500.47 V694.14 H511.68 V694.47 H522.90 V694.10 H534.11 V695.17 H545.33 V694.48 H556.54 V695.73 H567.76 V695.60 H578.97 V694.83 H590.19 V694.69 H601.40 V694.95 H612.62 V695.78 H623.83 V694.23 H635.05 V694.64 H646.26 V695.33 H657.48 V695.16 H668.69 V694.95 H679.91 V695.33 H691.12 V695.74 H702.34 V693.71 H713.56 V693.58 H724.77 V694.30 H735.99 V693.82 H747.20 V694.89 H758.42 V699.20Z" fill="#9a4fd0" fill-opacity="0.26"/>
<path d="M74.30,699.20 V693.28 H85.52 V695.03 H96.73 V693.46 H107.95 V694.00 H119.16 V692.99 H130.38 V695.40 H141.59 V693.32 H152.81 V695.33 H164.02 V694.09 H175.24 V692.85 H186.45 V695.70 H197.67 V694.97 H208.88 V694.80 H220.10 V694.73 H231.31 V695.51 H242.53 V693.01 H253.74 V693.25 H264.96 V694.51 H276.17 V694.63 H287.38 V693.94 H298.60 V695.56 H309.81 V695.61 H321.03 V693.00 H332.24 V694.78 H343.46 V694.20 H354.67 V692.90 H365.89 V692.77 H377.10 V694.28 H388.32 V695.08 H399.53 V694.81 H410.75 V692.93 H421.96 V693.01 H433.18 V695.11 H444.39 V693.19 H455.61 V694.64 H466.82 V694.28 H478.04 V695.18 H489.25 V693.06 H500.47 V692.71 H511.68 V695.09 H522.90 V693.80 H534.11 V695.13 H545.33 V693.06 H556.54 V695.55 H567.76 V695.38 H578.97 V693.52 H590.19 V694.76 H601.40 V693.00 H612.62 V693.09 H623.83 V693.56 H635.05 V695.30 H646.26 V693.61 H657.48 V692.89 H668.69 V694.36 H679.91 V695.46 H691.12 V695.03 H702.34 V694.78 H713.56 V693.57 H724.77 V695.11 H735.99 V695.16 H747.20 V694.99 H758.42 V699.20Z" fill="#4fb5c8" fill-opacity="0.26"/>
<path d="M74.30,699.20 V697.17 H85.52 V696.99 H96.73 V697.58 H107.95 V697.17 H119.16 V696.86 H130.38 V697.27 H141.59 V697.78 H152.81 V697.68 H164.02 V696.80 H175.24 V697.17 H186.45 V697.71 H197.67 V697.20 H208.88 V697.97 H220.10 V696.72 H231.31 V697.48 H242.53 V697.36 H253.74 V697.36 H264.96 V698.04 H276.17 V697.26 H287.38 V697.70 H298.60 V697.75 H309.81 V696.98 H321.03 V697.98 H332.24 V697.70 H343.46 V697.04 H354.67 V697.76 H365.89 V697.71 H377.10 V697.33 H388.32 V697.84 H399.53 V696.84 H410.75 V696.72 H421.96 V698.05 H433.18 V697.45 H444.39 V697.05 H455.61 V697.56 H466.82 V696.80 H478.04 V697.40 H489.25 V697.85 H500.47 V697.32 H511.68 V697.20 H522.90 V697.60 H534.11 V697.18 H545.33 V697.00 H556.54 V697.38 H567.76 V697.39 H578.97 V696.92 H590.19 V697.14 H601.40 V697.37 H612.62 V696.77 H623.83 V697.86 H635.05 V697.01 H646.26 V697.87 H657.48 V697.25 H668.69 V697.77 H679.91 V697.48 H691.12 V697.02 H702.34 V697.00 H713.56 V696.99 H724.77 V697.77 H735.99 V697.42 H747.20 V697.79 H758.42 V699.20Z" fill="#d6bf3f" fill-opacity="0.26"/>
<path d="M74.30,699.20 V696.06 H85.52 V696.20 H96.73 V697.04 H107.95 V696.03 H119.16 V695.81 H130.38 V696.07 H141.59 V695.53 H152.81 V696.78 H164.02 V696.83 H175.24 V697.07 H186.45 V696.21 H197.67 V696.32 H208.88 V696.30 H220.10 V696.63 H231.31 V695.66 H242.53 V696.97 H253.74 V695.47 H264.96 V696.08 H276.17 V696.12 H287.38 V695.68 H298.60 V696.67 H309.81 V696.84 H321.03 V696.54 H332.24 V697.02 H343.46 V696.53 H354.67 V695.98 H365.89 V696.15 H377.10 V696.62 H388.32 V696.04 H399.53 V696.94 H410.75 V695.62 H421.96 V696.79 H433.18 V696.64 H444.39 V696.81 H455.61 V695.86 H466.82 V695.60 H478.04 V695.68 H489.25 V696.99 H500.47 V696.36 H511.68 V696.44 H522.90 V696.71 H534.11 V695.35 H545.33 V697.02 H556.54 V696.22 H567.76 V695.73 H578.97 V695.32 H590.19 V696.84 H601.40 V696.28 H612.62 V695.76 H623.83 V697.03 H635.05 V696.67 H646.26 V695.50 H657.48 V696.85 H668.69 V696.39 H679.91 V696.56 H691.12 V696.34 H702.34 V696.96 H713.56 V697.04 H724.77 V695.31 H735.99 V695.73 H747.20 V695.78 H758.42 V699.20Z" fill="#b24fb0" fill-opacity="0.26"/>
<path d="M74.30,699.20 V697.97 H85.52 V697.95 H96.73 V697.65 H107.95 V697.96 H119.16 V697.74 H130.38 V697.27 H141.59 V697.84 H152.81 V697.86 H164.02 V697.22 H175.24 V697.59 H186.45 V698.16 H197.67 V697.80 H208.88 V697.55 H220.10 V698.14 H231.31 V697.86 H242.53 V697.51 H253.74 V697.34 H264.96 V697.61 H276.17 V697.31 H287.38 V697.74 H298.60 V697.81 H309.81 V697.36 H321.03 V697.82 H332.24 V697.42 H343.46 V697.98 H354.67 V697.85 H365.89 V698.02 H377.10 V697.65 H388.32 V698.04 H399.53 V698.00 H410.75 V697.99 H421.96 V697.73 H433.18 V697.89 H444.39 V697.75 H455.61 V697.21 H466.82 V697.52 H478.04 V697.34 H489.25 V698.00 H500.47 V697.82 H511.68 V698.13 H522.90 V697.51 H534.11 V697.84 H545.33 V697.93 H556.54 V698.18 H567.76 V698.02 H578.97 V697.94 H590.19 V697.81 H601.40 V697.28 H612.62 V697.48 H623.83 V697.93 H635.05 V697.84 H646.26 V698.05 H657.48 V697.26 H668.69 V697.84 H679.91 V697.43 H691.12 V697.48 H702.34 V697.29 H713.56 V698.18 H724.77 V697.88 H735.99 V697.82 H747.20 V698.12 H758.42 V699.20Z" fill="#7a3fb0" fill-opacity="0.26"/>
<rect x="74.3" y="680.7" width="684.1" height="18.5" fill="#9aa5dc" fill-opacity="0.3"/>
<path d="M74.30,699.20 V679.20 H85.52 V530.70 H96.73 V692.41 H107.95 V695.61 H119.16 V537.20 H130.38 V695.69 H141.59 V695.90 H152.81 V692.21 H164.02 V619.20 H175.24 V693.40 H186.45 V693.96 H197.67 V695.25 H208.88 V692.54 H220.10 V695.55 H231.31 V692.98 H242.53 V695.62 H253.74 V650.20 H264.96 V695.14 H276.17 V650.20 H287.38 V517.80 H298.60 V692.18 H309.81 V694.68 H321.03 V691.78 H332.24 V695.15 H343.46 V694.23 H354.67 V691.93 H365.89 V692.99 H377.10 V695.70 H388.32 V689.68 H399.53 V686.46 H410.75 V689.05 H421.96 V688.08 H433.18 V689.20 H444.39 V687.90 H455.61 V689.54 H466.82 V690.97 H478.04 V685.22 H489.25 V685.23 H500.47 V686.48 H511.68 V687.54 H522.90 V690.68 H534.11 V691.36 H545.33 V690.89 H556.54 V692.64 H567.76 V687.07 H578.97 V690.00 H590.19 V653.20 H601.40 V690.11 H612.62 V685.54 H623.83 V686.42 H635.05 V693.20 H646.26 V691.52 H657.48 V685.92 H668.69 V689.44 H679.91 V630.20 H691.12 V690.02 H702.34 V692.62 H713.56 V688.16 H724.77 V686.97 H735.99 V691.04 H747.20 V692.50 H758.42 V699.20" fill="none" stroke="#d05cc8" stroke-width="1.55" stroke-opacity="0.95" stroke-linejoin="miter"/>
<path d="M74.30,699.20 V654.20 H85.52 V623.20 H96.73 V659.20 H107.95 V661.20 H119.16 V666.20 H130.38 V638.20 H141.59 V661.20 H152.81 V669.20 H164.02 V637.70 H175.24 V666.20 H186.45 V655.20 H197.67 V632.20 H208.88 V663.20 H220.10 V669.20 H231.31 V668.20 H242.53 V666.20 H253.74 V663.20 H264.96 V646.20 H276.17 V663.20 H287.38 V659.20 H298.60 V666.20 H309.81 V642.20 H321.03 V653.20 H332.24 V653.20 H343.46 V664.20 H354.67 V633.60 H365.89 V659.20 H377.10 V665.20 H388.32 V669.20 H399.53 V669.20 H410.75 V671.20 H421.96 V645.40 H433.18 V665.80 H444.39 V660.20 H455.61 V673.20 H466.82 V648.70 H478.04 V673.20 H489.25 V652.60 H500.47 V672.20 H511.68 V642.20 H522.90 V669.20 H534.11 V652.00 H545.33 V671.20 H556.54 V627.60 H567.76 V669.20 H578.97 V670.20 H590.19 V668.20 H601.40 V638.90 H612.62 V666.20 H623.83 V652.20 H635.05 V665.20 H646.26 V669.20 H657.48 V671.20 H668.69 V622.20 H679.91 V666.20 H691.12 V669.20 H702.34 V666.20 H713.56 V641.80 H724.77 V651.20 H735.99 V659.20 H747.20 V659.20 H758.42 V699.20" fill="none" stroke="#9dc83a" stroke-width="1.55" stroke-opacity="0.95" stroke-linejoin="miter"/>
<path d="M74.30,699.20 V624.20 H85.52 V624.20 H96.73 V651.20 H107.95 V652.20 H119.16 V649.20 H130.38 V651.20 H141.59 V648.20 H152.81 V648.20 H164.02 V653.20 H175.24 V659.20 H186.45 V621.20 H197.67 V649.20 H208.88 V647.60 H220.10 V665.20 H231.31 V666.20 H242.53 V663.20 H253.74 V661.20 H264.96 V621.80 H276.17 V649.20 H287.38 V647.20 H298.60 V624.40 H309.81 V663.20 H321.03 V663.20 H332.24 V621.80 H343.46 V639.50 H354.67 V654.20 H365.89 V589.20 H377.10 V597.50 H388.32 V665.82 H399.53 V666.34 H410.75 V665.26 H421.96 V666.62 H433.18 V665.80 H444.39 V666.92 H455.61 V666.37 H466.82 V665.47 H478.04 V665.21 H489.25 V665.29 H500.47 V666.48 H511.68 V666.00 H522.90 V666.64 H534.11 V667.07 H545.33 V666.21 H556.54 V665.39 H567.76 V665.36 H578.97 V665.69 H590.19 V665.12 H601.40 V666.74 H612.62 V666.99 H623.83 V666.32 H635.05 V666.74 H646.26 V666.89 H657.48 V666.41 H668.69 V665.90 H679.91 V666.21 H691.12 V666.64 H702.34 V665.39 H713.56 V665.04 H724.77 V666.31 H735.99 V667.22 H747.20 V667.32 H758.42 V699.20" fill="none" stroke="#16b3a4" stroke-width="1.55" stroke-opacity="0.95" stroke-linejoin="miter"/>
<path d="M74.30,699.20 V653.20 H85.52 V648.20 H96.73 V644.20 H107.95 V641.20 H119.16 V654.20 H130.38 V658.20 H141.59 V659.20 H152.81 V649.20 H164.02 V654.20 H175.24 V657.20 H186.45 V654.20 H197.67 V659.20 H208.88 V663.20 H220.10 V663.20 H231.31 V661.20 H242.53 V659.20 H253.74 V658.20 H264.96 V662.27 H276.17 V661.36 H287.38 V660.45 H298.60 V662.09 H309.81 V665.00 H321.03 V663.35 H332.24 V665.13 H343.46 V666.14 H354.67 V663.37 H365.89 V661.91 H377.10 V665.13 H388.32 V664.57 H399.53 V670.20 H410.75 V670.20 H421.96 V676.20 H433.18 V675.20 H444.39 V670.20 H455.61 V673.40 H466.82 V668.50 H478.04 V670.20 H489.25 V670.20 H500.47 V671.20 H511.68 V672.50 H522.90 V672.50 H534.11 V676.40 H545.33 V670.16 H556.54 V673.46 H567.76 V669.33 H578.97 V669.71 H590.19 V673.26 H601.40 V675.12 H612.62 V672.61 H623.83 V662.40 H635.05 V646.60 H646.26 V672.29 H657.48 V675.50 H668.69 V670.04 H679.91 V675.25 H691.12 V670.10 H702.34 V656.60 H713.56 V673.35 H724.77 V670.18 H735.99 V674.72 H747.20 V674.66 H758.42 V699.20" fill="none" stroke="#e0a455" stroke-width="1.55" stroke-opacity="0.95" stroke-linejoin="miter"/>
<path d="M74.30,699.20 V656.47 H85.52 V679.74 H96.73 V656.66 H107.95 V678.19 H119.16 V680.99 H130.38 V675.78 H141.59 V685.15 H152.81 V657.14 H164.02 V657.27 H175.24 V683.46 H186.45 V683.51 H197.67 V680.24 H208.88 V685.88 H220.10 V680.39 H231.31 V675.89 H242.53 V686.89 H253.74 V674.49 H264.96 V678.48 H276.17 V657.71 H287.38 V684.82 H298.60 V682.57 H309.81 V677.24 H321.03 V672.51 H332.24 V658.54 H343.46 V656.03 H354.67 V676.63 H365.89 V673.92 H377.10 V682.18 H388.32 V681.13 H399.53 V667.61 H410.75 V674.31 H421.96 V681.59 H433.18 V678.02 H444.39 V664.85 H455.61 V664.63 H466.82 V666.20 H478.04 V668.51 H489.25 V679.14 H500.47 V666.95 H511.68 V676.60 H522.90 V670.63 H534.11 V664.46 H545.33 V665.85 H556.54 V667.09 H567.76 V664.10 H578.97 V677.11 H590.19 V665.86 H601.40 V678.00 H612.62 V663.82 H623.83 V671.99 H635.05 V672.89 H646.26 V678.05 H657.48 V676.04 H668.69 V676.03 H679.91 V676.52 H691.12 V673.54 H702.34 V668.20 H713.56 V669.07 H724.77 V665.32 H735.99 V668.82 H747.20 V681.41 H758.42 V699.20" fill="none" stroke="#16b3a4" stroke-width="1.55" stroke-opacity="0.95" stroke-linejoin="miter"/>
<path d="M74.30,699.20 V676.74 H85.52 V675.70 H96.73 V680.67 H107.95 V672.69 H119.16 V677.41 H130.38 V676.46 H141.59 V675.82 H152.81 V677.91 H164.02 V678.63 H175.24 V675.30 H186.45 V676.15 H197.67 V678.65 H208.88 V674.75 H220.10 V678.54 H231.31 V662.98 H242.53 V663.63 H253.74 V663.36 H264.96 V663.23 H276.17 V663.69 H287.38 V663.34 H298.60 V663.06 H309.81 V663.08 H321.03 V663.47 H332.24 V662.76 H343.46 V663.03 H354.67 V663.36 H365.89 V663.04 H377.10 V663.13 H388.32 V663.17 H399.53 V663.31 H410.75 V662.70 H421.96 V663.06 H433.18 V663.00 H444.39 V662.94 H455.61 V662.72 H466.82 V663.68 H478.04 V663.08 H489.25 V662.96 H500.47 V663.44 H511.68 V663.30 H522.90 V663.65 H534.11 V663.50 H545.33 V663.32 H556.54 V663.60 H567.76 V663.45 H578.97 V662.79 H590.19 V663.15 H601.40 V663.19 H612.62 V662.73 H623.83 V663.13 H635.05 V662.70 H646.26 V663.06 H657.48 V662.89 H668.69 V663.62 H679.91 V663.10 H691.12 V662.94 H702.34 V663.65 H713.56 V662.77 H724.77 V663.54 H735.99 V663.23 H747.20 V663.53 H758.42 V699.20" fill="none" stroke="#16b3a4" stroke-width="1.55" stroke-opacity="0.95" stroke-linejoin="miter"/>
<path d="M74.30,699.20 V681.38 H85.52 V681.06 H96.73 V681.34 H107.95 V681.18 H119.16 V680.34 H130.38 V680.85 H141.59 V680.14 H152.81 V680.35 H164.02 V681.33 H175.24 V680.02 H186.45 V680.08 H197.67 V681.30 H208.88 V680.13 H220.10 V680.80 H231.31 V680.73 H242.53 V680.04 H253.74 V681.06 H264.96 V680.67 H276.17 V680.09 H287.38 V680.39 H298.60 V680.74 H309.81 V680.03 H321.03 V680.26 H332.24 V680.55 H343.46 V681.24 H354.67 V680.53 H365.89 V680.76 H377.10 V681.11 H388.32 V681.33 H399.53 V680.66 H410.75 V681.23 H421.96 V680.78 H433.18 V680.46 H444.39 V680.76 H455.61 V681.03 H466.82 V680.58 H478.04 V680.81 H489.25 V680.31 H500.47 V680.66 H511.68 V680.00 H522.90 V680.07 H534.11 V680.37 H545.33 V681.07 H556.54 V681.24 H567.76 V680.15 H578.97 V680.30 H590.19 V680.53 H601.40 V680.90 H612.62 V681.02 H623.83 V680.44 H635.05 V680.61 H646.26 V680.57 H657.48 V680.51 H668.69 V680.35 H679.91 V681.13 H691.12 V681.05 H702.34 V680.03 H713.56 V680.12 H724.77 V680.17 H735.99 V681.34 H747.20 V681.31 H758.42 V699.20" fill="none" stroke="#7387e0" stroke-width="1.55" stroke-opacity="0.95" stroke-linejoin="miter"/>
<path d="M74.30,699.20 V692.35 H85.52 V691.57 H96.73 V690.58 H107.95 V693.19 H119.16 V690.99 H130.38 V669.20 H141.59 V660.60 H152.81 V660.60 H164.02 V669.20 H175.24 V690.54 H186.45 V691.83 H197.67 V691.31 H208.88 V669.20 H220.10 V679.20 H231.31 V689.98 H242.53 V689.51 H253.74 V693.33 H264.96 V693.10 H276.17 V689.65 H287.38 V690.58 H298.60 V689.86 H309.81 V692.63 H321.03 V691.58 H332.24 V692.41 H343.46 V689.65 H354.67 V691.86 H365.89 V667.20 H377.10 V667.20 H388.32 V692.07 H399.53 V672.50 H410.75 V672.50 H421.96 V679.50 H433.18 V691.56 H444.39 V691.85 H455.61 V693.21 H466.82 V689.32 H478.04 V693.31 H489.25 V693.28 H500.47 V690.88 H511.68 V691.28 H522.90 V690.27 H534.11 V683.50 H545.33 V689.82 H556.54 V693.32 H567.76 V692.63 H578.97 V690.39 H590.19 V693.29 H601.40 V692.18 H612.62 V670.20 H623.83 V690.23 H635.05 V692.29 H646.26 V692.99 H657.48 V691.91 H668.69 V690.07 H679.91 V691.87 H691.12 V693.11 H702.34 V690.15 H713.56 V690.85 H724.77 V684.20 H735.99 V684.20 H747.20 V689.13 H758.42 V699.20" fill="none" stroke="#b23a33" stroke-width="1.55" stroke-opacity="0.95" stroke-linejoin="miter"/>
<path d="M74.30,699.20 V684.51 H85.52 V682.68 H96.73 V685.18 H107.95 V685.11 H119.16 V684.70 H130.38 V682.03 H141.59 V672.70 H152.81 V672.70 H164.02 V684.89 H175.24 V684.87 H186.45 V684.88 H197.67 V684.72 H208.88 V684.76 H220.10 V685.73 H231.31 V683.88 H242.53 V682.71 H253.74 V684.00 H264.96 V682.52 H276.17 V683.89 H287.38 V685.82 H298.60 V682.91 H309.81 V682.30 H321.03 V685.29 H332.24 V686.59 H343.46 V684.12 H354.67 V666.20 H365.89 V683.86 H377.10 V681.87 H388.32 V683.44 H399.53 V682.68 H410.75 V686.38 H421.96 V683.97 H433.18 V682.76 H444.39 V686.28 H455.61 V686.29 H466.82 V683.01 H478.04 V682.20 H489.25 V686.28 H500.47 V683.53 H511.68 V685.98 H522.90 V682.97 H534.11 V683.45 H545.33 V685.47 H556.54 V685.60 H567.76 V682.87 H578.97 V684.09 H590.19 V682.88 H601.40 V684.73 H612.62 V685.01 H623.83 V681.86 H635.05 V683.34 H646.26 V684.23 H657.48 V684.01 H668.69 V683.10 H679.91 V683.16 H691.12 V682.13 H702.34 V684.65 H713.56 V682.57 H724.77 V683.37 H735.99 V682.43 H747.20 V682.67 H758.42 V699.20" fill="none" stroke="#4fb5c8" stroke-width="1.55" stroke-opacity="0.95" stroke-linejoin="miter"/>
<path d="M74.30,699.20 V688.53 H85.52 V688.26 H96.73 V687.91 H107.95 V689.50 H119.16 V690.08 H130.38 V689.15 H141.59 V688.69 H152.81 V690.59 H164.02 V690.60 H175.24 V691.97 H186.45 V688.99 H197.67 V687.74 H208.88 V690.82 H220.10 V691.86 H231.31 V691.68 H242.53 V690.58 H253.74 V691.24 H264.96 V687.85 H276.17 V692.40 H287.38 V691.16 H298.60 V692.13 H309.81 V689.46 H321.03 V688.82 H332.24 V691.80 H343.46 V692.39 H354.67 V690.41 H365.89 V689.78 H377.10 V688.15 H388.32 V692.52 H399.53 V692.16 H410.75 V691.78 H421.96 V691.61 H433.18 V691.52 H444.39 V689.11 H455.61 V689.73 H466.82 V691.58 H478.04 V691.78 H489.25 V691.29 H500.47 V691.84 H511.68 V688.91 H522.90 V691.14 H534.11 V689.96 H545.33 V688.61 H556.54 V690.30 H567.76 V691.40 H578.97 V688.26 H590.19 V688.13 H601.40 V690.99 H612.62 V689.96 H623.83 V687.91 H635.05 V690.29 H646.26 V691.59 H657.48 V692.45 H668.69 V687.96 H679.91 V688.69 H691.12 V690.78 H702.34 V690.06 H713.56 V690.12 H724.77 V691.33 H735.99 V687.75 H747.20 V689.41 H758.42 V699.20" fill="none" stroke="#16b3a4" stroke-width="1.55" stroke-opacity="0.95" stroke-linejoin="miter"/>
<path d="M74.30,699.20 V694.25 H85.52 V695.16 H96.73 V693.31 H107.95 V693.71 H119.16 V692.01 H130.38 V692.35 H141.59 V692.78 H152.81 V694.57 H164.02 V694.57 H175.24 V693.91 H186.45 V694.16 H197.67 V691.72 H208.88 V685.20 H220.10 V692.65 H231.31 V691.23 H242.53 V694.13 H253.74 V693.06 H264.96 V694.60 H276.17 V692.12 H287.38 V695.19 H298.60 V683.20 H309.81 V691.82 H321.03 V691.91 H332.24 V694.87 H343.46 V694.12 H354.67 V692.33 H365.89 V694.81 H377.10 V693.28 H388.32 V693.33 H399.53 V691.38 H410.75 V692.85 H421.96 V691.77 H433.18 V693.99 H444.39 V681.70 H455.61 V693.53 H466.82 V686.50 H478.04 V694.84 H489.25 V691.89 H500.47 V694.37 H511.68 V693.03 H522.90 V693.10 H534.11 V694.57 H545.33 V691.87 H556.54 V693.95 H567.76 V693.96 H578.97 V694.90 H590.19 V693.98 H601.40 V693.33 H612.62 V692.34 H623.83 V693.76 H635.05 V692.45 H646.26 V684.20 H657.48 V693.62 H668.69 V693.35 H679.91 V691.33 H691.12 V691.88 H702.34 V692.58 H713.56 V695.15 H724.77 V693.69 H735.99 V692.36 H747.20 V694.25 H758.42 V699.20" fill="none" stroke="#e0a455" stroke-width="1.2" stroke-opacity="0.8" stroke-linejoin="miter"/>
<path d="M74.30,699.20 V689.88 H85.52 V690.41 H96.73 V692.65 H107.95 V687.74 H119.16 V688.70 H130.38 V691.67 H141.59 V689.62 H152.81 V691.25 H164.02 V690.82 H175.24 V690.00 H186.45 V691.21 H197.67 V691.01 H208.88 V690.74 H220.10 V689.37 H231.31 V691.42 H242.53 V691.70 H253.74 V689.04 H264.96 V691.05 H276.17 V687.97 H287.38 V689.89 H298.60 V689.08 H309.81 V691.04 H321.03 V688.57 H332.24 V692.24 H343.46 V692.00 H354.67 V692.23 H365.89 V689.31 H377.10 V689.16 H388.32 V691.80 H399.53 V690.69 H410.75 V688.52 H421.96 V689.74 H433.18 V692.25 H444.39 V691.57 H455.61 V691.91 H466.82 V692.08 H478.04 V690.67 H489.25 V692.34 H500.47 V688.10 H511.68 V690.56 H522.90 V690.14 H534.11 V689.46 H545.33 V688.87 H556.54 V688.59 H567.76 V690.77 H578.97 V691.04 H590.19 V690.64 H601.40 V692.62 H612.62 V690.70 H623.83 V689.20 H635.05 V687.79 H646.26 V688.75 H657.48 V689.40 H668.69 V689.66 H679.91 V692.61 H691.12 V691.04 H702.34 V690.99 H713.56 V689.45 H724.77 V692.17 H735.99 V690.81 H747.20 V690.15 H758.42 V699.20" fill="none" stroke="#9dc83a" stroke-width="1.2" stroke-opacity="0.8" stroke-linejoin="miter"/>
<path d="M74.30,699.20 V691.33 H85.52 V691.22 H96.73 V691.87 H107.95 V693.22 H119.16 V691.40 H130.38 V690.99 H141.59 V692.06 H152.81 V692.64 H164.02 V692.20 H175.24 V693.27 H186.45 V691.56 H197.67 V690.74 H208.88 V692.15 H220.10 V691.55 H231.31 V691.19 H242.53 V693.11 H253.74 V690.87 H264.96 V691.82 H276.17 V693.11 H287.38 V693.45 H298.60 V692.97 H309.81 V691.97 H321.03 V691.61 H332.24 V692.71 H343.46 V690.91 H354.67 V692.62 H365.89 V692.31 H377.10 V693.33 H388.32 V690.78 H399.53 V693.29 H410.75 V690.99 H421.96 V692.07 H433.18 V692.02 H444.39 V692.02 H455.61 V692.91 H466.82 V690.97 H478.04 V690.72 H489.25 V691.25 H500.47 V691.90 H511.68 V693.33 H522.90 V691.23 H534.11 V692.83 H545.33 V691.01 H556.54 V692.98 H567.76 V691.98 H578.97 V691.21 H590.19 V693.14 H601.40 V692.06 H612.62 V693.47 H623.83 V693.60 H635.05 V693.16 H646.26 V690.74 H657.48 V690.88 H668.69 V691.72 H679.91 V692.78 H691.12 V691.69 H702.34 V691.49 H713.56 V692.56 H724.77 V691.92 H735.99 V691.29 H747.20 V693.65 H758.42 V699.20" fill="none" stroke="#4253cd" stroke-width="1.2" stroke-opacity="0.8" stroke-linejoin="miter"/>
<path d="M74.30,699.20 V695.42 H85.52 V694.78 H96.73 V695.56 H107.95 V694.97 H119.16 V694.53 H130.38 V695.48 H141.59 V694.65 H152.81 V695.27 H164.02 V694.54 H175.24 V695.10 H186.45 V694.36 H197.67 V695.81 H208.88 V694.29 H220.10 V695.55 H231.31 V693.60 H242.53 V694.46 H253.74 V694.77 H264.96 V694.91 H276.17 V694.40 H287.38 V694.25 H298.60 V694.08 H309.81 V694.10 H321.03 V694.73 H332.24 V693.51 H343.46 V693.89 H354.67 V693.85 H365.89 V694.92 H377.10 V694.86 H388.32 V694.54 H399.53 V693.73 H410.75 V694.64 H421.96 V694.64 H433.18 V694.86 H444.39 V693.73 H455.61 V695.13 H466.82 V695.77 H478.04 V694.16 H489.25 V693.74 H500.47 V694.14 H511.68 V694.47 H522.90 V694.10 H534.11 V695.17 H545.33 V694.48 H556.54 V695.73 H567.76 V695.60 H578.97 V694.83 H590.19 V694.69 H601.40 V694.95 H612.62 V695.78 H623.83 V694.23 H635.05 V694.64 H646.26 V695.33 H657.48 V695.16 H668.69 V694.95 H679.91 V695.33 H691.12 V695.74 H702.34 V693.71 H713.56 V693.58 H724.77 V694.30 H735.99 V693.82 H747.20 V694.89 H758.42 V699.20" fill="none" stroke="#9a4fd0" stroke-width="1.2" stroke-opacity="0.8" stroke-linejoin="miter"/>
<path d="M74.30,699.20 V693.28 H85.52 V695.03 H96.73 V693.46 H107.95 V694.00 H119.16 V692.99 H130.38 V695.40 H141.59 V693.32 H152.81 V695.33 H164.02 V694.09 H175.24 V692.85 H186.45 V695.70 H197.67 V694.97 H208.88 V694.80 H220.10 V694.73 H231.31 V695.51 H242.53 V693.01 H253.74 V693.25 H264.96 V694.51 H276.17 V694.63 H287.38 V693.94 H298.60 V695.56 H309.81 V695.61 H321.03 V693.00 H332.24 V694.78 H343.46 V694.20 H354.67 V692.90 H365.89 V692.77 H377.10 V694.28 H388.32 V695.08 H399.53 V694.81 H410.75 V692.93 H421.96 V693.01 H433.18 V695.11 H444.39 V693.19 H455.61 V694.64 H466.82 V694.28 H478.04 V695.18 H489.25 V693.06 H500.47 V692.71 H511.68 V695.09 H522.90 V693.80 H534.11 V695.13 H545.33 V693.06 H556.54 V695.55 H567.76 V695.38 H578.97 V693.52 H590.19 V694.76 H601.40 V693.00 H612.62 V693.09 H623.83 V693.56 H635.05 V695.30 H646.26 V693.61 H657.48 V692.89 H668.69 V694.36 H679.91 V695.46 H691.12 V695.03 H702.34 V694.78 H713.56 V693.57 H724.77 V695.11 H735.99 V695.16 H747.20 V694.99 H758.42 V699.20" fill="none" stroke="#4fb5c8" stroke-width="1.2" stroke-opacity="0.8" stroke-linejoin="miter"/>
<path d="M74.30,699.20 V697.17 H85.52 V696.99 H96.73 V697.58 H107.95 V697.17 H119.16 V696.86 H130.38 V697.27 H141.59 V697.78 H152.81 V697.68 H164.02 V696.80 H175.24 V697.17 H186.45 V697.71 H197.67 V697.20 H208.88 V697.97 H220.10 V696.72 H231.31 V697.48 H242.53 V697.36 H253.74 V697.36 H264.96 V698.04 H276.17 V697.26 H287.38 V697.70 H298.60 V697.75 H309.81 V696.98 H321.03 V697.98 H332.24 V697.70 H343.46 V697.04 H354.67 V697.76 H365.89 V697.71 H377.10 V697.33 H388.32 V697.84 H399.53 V696.84 H410.75 V696.72 H421.96 V698.05 H433.18 V697.45 H444.39 V697.05 H455.61 V697.56 H466.82 V696.80 H478.04 V697.40 H489.25 V697.85 H500.47 V697.32 H511.68 V697.20 H522.90 V697.60 H534.11 V697.18 H545.33 V697.00 H556.54 V697.38 H567.76 V697.39 H578.97 V696.92 H590.19 V697.14 H601.40 V697.37 H612.62 V696.77 H623.83 V697.86 H635.05 V697.01 H646.26 V697.87 H657.48 V697.25 H668.69 V697.77 H679.91 V697.48 H691.12 V697.02 H702.34 V697.00 H713.56 V696.99 H724.77 V697.77 H735.99 V697.42 H747.20 V697.79 H758.42 V699.20" fill="none" stroke="#d6bf3f" stroke-width="1.2" stroke-opacity="0.8" stroke-linejoin="miter"/>
<path d="M74.30,699.20 V696.06 H85.52 V696.20 H96.73 V697.04 H107.95 V696.03 H119.16 V695.81 H130.38 V696.07 H141.59 V695.53 H152.81 V696.78 H164.02 V696.83 H175.24 V697.07 H186.45 V696.21 H197.67 V696.32 H208.88 V696.30 H220.10 V696.63 H231.31 V695.66 H242.53 V696.97 H253.74 V695.47 H264.96 V696.08 H276.17 V696.12 H287.38 V695.68 H298.60 V696.67 H309.81 V696.84 H321.03 V696.54 H332.24 V697.02 H343.46 V696.53 H354.67 V695.98 H365.89 V696.15 H377.10 V696.62 H388.32 V696.04 H399.53 V696.94 H410.75 V695.62 H421.96 V696.79 H433.18 V696.64 H444.39 V696.81 H455.61 V695.86 H466.82 V695.60 H478.04 V695.68 H489.25 V696.99 H500.47 V696.36 H511.68 V696.44 H522.90 V696.71 H534.11 V695.35 H545.33 V697.02 H556.54 V696.22 H567.76 V695.73 H578.97 V695.32 H590.19 V696.84 H601.40 V696.28 H612.62 V695.76 H623.83 V697.03 H635.05 V696.67 H646.26 V695.50 H657.48 V696.85 H668.69 V696.39 H679.91 V696.56 H691.12 V696.34 H702.34 V696.96 H713.56 V697.04 H724.77 V695.31 H735.99 V695.73 H747.20 V695.78 H758.42 V699.20" fill="none" stroke="#b24fb0" stroke-width="1.2" stroke-opacity="0.8" stroke-linejoin="miter"/>
<path d="M74.30,699.20 V697.97 H85.52 V697.95 H96.73 V697.65 H107.95 V697.96 H119.16 V697.74 H130.38 V697.27 H141.59 V697.84 H152.81 V697.86 H164.02 V697.22 H175.24 V697.59 H186.45 V698.16 H197.67 V697.80 H208.88 V697.55 H220.10 V698.14 H231.31 V697.86 H242.53 V697.51 H253.74 V697.34 H264.96 V697.61 H276.17 V697.31 H287.38 V697.74 H298.60 V697.81 H309.81 V697.36 H321.03 V697.82 H332.24 V697.42 H343.46 V697.98 H354.67 V697.85 H365.89 V698.02 H377.10 V697.65 H388.32 V698.04 H399.53 V698.00 H410.75 V697.99 H421.96 V697.73 H433.18 V697.89 H444.39 V697.75 H455.61 V697.21 H466.82 V697.52 H478.04 V697.34 H489.25 V698.00 H500.47 V697.82 H511.68 V698.13 H522.90 V697.51 H534.11 V697.84 H545.33 V697.93 H556.54 V698.18 H567.76 V698.02 H578.97 V697.94 H590.19 V697.81 H601.40 V697.28 H612.62 V697.48 H623.83 V697.93 H635.05 V697.84 H646.26 V698.05 H657.48 V697.26 H668.69 V697.84 H679.91 V697.43 H691.12 V697.48 H702.34 V697.29 H713.56 V698.18 H724.77 V697.88 H735.99 V697.82 H747.20 V698.12 H758.42 V699.20" fill="none" stroke="#7a3fb0" stroke-width="1.2" stroke-opacity="0.8" stroke-linejoin="miter"/>
<rect x="758.4" y="649.5" width="1.2" height="49.7" fill="#9dc83a"/>
</svg>
<div class="dot" style="left:787.8px;top:519.8px;background:#d05cc8"></div>
<span class="t" style="left:804.10px;top:517.10px;font-size:12px;line-height:14px;color:#d6dce8;letter-spacing:0.72px;">5060</span>
<div class="act" style="left:859.0px;top:517.8px"><i style="top:0"></i><i style="top:4.5px"></i><i style="top:9px"></i></div>
<div class="dot" style="left:787.8px;top:541.8px;background:#9dc83a"></div>
<span class="t" style="left:804.10px;top:539.10px;font-size:12px;line-height:14px;color:#d6dce8;letter-spacing:0.72px;">445</span>
<div class="act" style="left:859.0px;top:539.8px"><i style="top:0"></i><i style="top:4.5px"></i><i style="top:9px"></i></div>
<div class="dot" style="left:787.8px;top:563.8px;background:#16b3a4"></div>
<span class="t" style="left:804.10px;top:561.10px;font-size:12px;line-height:14px;color:#d6dce8;letter-spacing:0.72px;">25</span>
<div class="act" style="left:859.0px;top:561.8px"><i style="top:0"></i><i style="top:4.5px"></i><i style="top:9px"></i></div>
<div class="dot" style="left:787.8px;top:585.8px;background:#e0a455"></div>
<span class="t" style="left:804.10px;top:583.10px;font-size:12px;line-height:14px;color:#d6dce8;letter-spacing:0.72px;">22</span>
<div class="act" style="left:859.0px;top:583.8px"><i style="top:0"></i><i style="top:4.5px"></i><i style="top:9px"></i></div>
<div class="dot" style="left:787.8px;top:607.8px;background:#16b3a4"></div>
<span class="t" style="left:804.10px;top:605.10px;font-size:12px;line-height:14px;color:#d6dce8;letter-spacing:0.72px;">1433</span>
<div class="act" style="left:859.0px;top:605.8px"><i style="top:0"></i><i style="top:4.5px"></i><i style="top:9px"></i></div>
<div class="dot" style="left:787.8px;top:629.8px;background:#16b3a4"></div>
<span class="t" style="left:804.10px;top:627.10px;font-size:12px;line-height:14px;color:#d6dce8;letter-spacing:0.72px;">5900</span>
<div class="act" style="left:859.0px;top:627.8px"><i style="top:0"></i><i style="top:4.5px"></i><i style="top:9px"></i></div>
<div class="dot" style="left:787.8px;top:651.8px;background:#7387e0"></div>
<span class="t" style="left:804.10px;top:649.10px;font-size:12px;line-height:14px;color:#d6dce8;letter-spacing:0.72px;">5902</span>
<div class="act" style="left:859.0px;top:649.8px"><i style="top:0"></i><i style="top:4.5px"></i><i style="top:9px"></i></div>
<div class="dot" style="left:787.8px;top:673.8px;background:#b23a33"></div>
<span class="t" style="left:804.10px;top:671.10px;font-size:12px;line-height:14px;color:#d6dce8;letter-spacing:0.72px;">80</span>
<div class="act" style="left:859.0px;top:671.8px"><i style="top:0"></i><i style="top:4.5px"></i><i style="top:9px"></i></div>
<div class="dot" style="left:787.8px;top:695.8px;background:#4fb5c8"></div>
<span class="t" style="left:804.10px;top:693.10px;font-size:12px;line-height:14px;color:#d6dce8;letter-spacing:0.72px;">443</span>
<div class="act" style="left:859.0px;top:693.8px"><i style="top:0"></i><i style="top:4.5px"></i><i style="top:9px"></i></div>
<div class="dot" style="left:787.8px;top:717.8px;background:#16b3a4"></div>
<span class="t" style="left:804.10px;top:715.10px;font-size:12px;line-height:14px;color:#d6dce8;letter-spacing:0.72px;">5038</span>
<div class="act" style="left:859.0px;top:715.8px"><i style="top:0"></i><i style="top:4.5px"></i><i style="top:9px"></i></div>
<div class="abs" style="left:877.5px;top:513px;width:5.5px;height:42.5px;background:#3a4761;border-radius:3px"></div>
<svg width="900" height="737" viewBox="0 0 900 737"><path d="M877.2,508.6 L880.3,504.6 L883.4,508.6Z M877.2,725.4 L880.3,729.4 L883.4,725.4Z" fill="#3a4761"/></svg>
<div class="panel" style="left:900px;top:468px;width:973px;height:290px"></div>
<span class="t" style="left:909.10px;top:472.50px;font-size:14px;line-height:17px;color:#e9edf5;font-weight:700;letter-spacing:0.072px;">Attacks by Country Histogram</span>
<svg width="1874" height="737" viewBox="0 0 1874 737">
<rect x="976.4" y="515" width="1" height="206" fill="#2a3850"/><rect x="976.4" y="699.2" width="716.5" height="1" fill="#2a3850"/><rect x="1692" y="699" width="1" height="22" fill="#2a3850"/>
<rect x="999.7" y="699" width="1" height="12" fill="#2a3850"/>
<rect x="1161.0" y="699" width="1" height="12" fill="#2a3850"/>
<rect x="1322.3" y="699" width="1" height="12" fill="#2a3850"/>
<rect x="1483.8" y="699" width="1" height="12" fill="#2a3850"/>
<rect x="1645.1" y="699" width="1" height="12" fill="#2a3850"/>
<text x="1002.20" y="711.20" font-size="10" fill="#a5b0c5" letter-spacing="0.4">2nd</text>
<text x="1163.50" y="711.20" font-size="10" fill="#a5b0c5" letter-spacing="0.4">9th</text>
<text x="1324.80" y="711.20" font-size="10" fill="#a5b0c5" letter-spacing="0.4">16th</text>
<text x="1486.30" y="711.20" font-size="10" fill="#a5b0c5" letter-spacing="0.4">23rd</text>
<text x="1647.60" y="711.20" font-size="10" fill="#a5b0c5" letter-spacing="0.4">30th</text>
<text x="979.00" y="721.40" font-size="10" fill="#a5b0c5" letter-spacing="0.4">March 2026</text>
<text x="967.42" y="519.20" font-size="10" fill="#a5b0c5" text-anchor="end" letter-spacing="0.42">200,000</text>
<text x="967.42" y="544.00" font-size="10" fill="#a5b0c5" text-anchor="end" letter-spacing="0.42">150,000</text>
<text x="967.42" y="573.00" font-size="10" fill="#a5b0c5" text-anchor="end" letter-spacing="0.42">100,000</text>
<text x="967.42" y="610.80" font-size="10" fill="#a5b0c5" text-anchor="end" letter-spacing="0.42">50,000</text>
<text x="967.42" y="702.20" font-size="10" fill="#a5b0c5" text-anchor="end" letter-spacing="0.42">0</text>
<polygon points="977.2,699.2 977.2,679.2 988.7,637.2 1000.2,535.2 1011.8,525.9 1023.3,532.2 1034.8,532.5 1046.3,537.2 1057.8,530.2 1069.4,533.6 1080.9,530.2 1092.4,541.8 1103.9,535.2 1115.4,536.6 1127.0,535.5 1138.5,535.9 1150.0,546.9 1161.5,638.5 1173.0,659.2 1184.6,669.2 1196.1,673.2 1207.6,674.5 1219.1,680.6 1230.6,674.2 1242.2,680.8 1253.7,676.0 1265.2,680.9 1276.7,682.2 1288.2,673.5 1299.8,680.1 1311.3,680.0 1322.8,672.4 1334.3,673.5 1345.8,679.3 1357.4,672.6 1368.9,676.8 1380.4,675.4 1391.9,680.2 1403.4,672.8 1415.0,675.3 1426.5,672.5 1438.0,673.3 1449.5,679.2 1461.0,678.6 1472.6,680.5 1484.1,680.7 1495.6,681.5 1507.1,679.2 1518.6,676.2 1530.2,682.2 1541.7,675.4 1553.2,678.8 1564.7,679.1 1576.2,674.0 1587.8,677.4 1599.3,679.0 1610.8,677.4 1622.3,675.2 1633.8,681.6 1645.4,672.4 1656.9,682.0 1668.4,674.7 1679.9,673.8 1679.9,699.2" fill="#16b3a4" fill-opacity="0.28"/>
<polygon points="977.2,699.2 977.2,643.3 988.7,641.2 1000.2,635.9 1011.8,642.2 1023.3,656.2 1034.8,650.2 1046.3,648.2 1057.8,654.2 1069.4,647.2 1080.9,652.2 1092.4,658.2 1103.9,645.2 1115.4,646.2 1127.0,656.2 1138.5,653.2 1150.0,655.2 1161.5,654.2 1173.0,637.7 1184.6,651.2 1196.1,653.2 1207.6,653.2 1219.1,651.2 1230.6,655.2 1242.2,649.2 1253.7,646.2 1265.2,651.2 1276.7,655.2 1288.2,657.2 1299.8,659.2 1311.3,661.2 1322.8,663.2 1334.3,664.2 1345.8,661.2 1357.4,659.2 1368.9,661.2 1380.4,659.2 1391.9,658.2 1403.4,657.2 1415.0,659.2 1426.5,655.2 1438.0,653.2 1449.5,657.2 1461.0,657.2 1472.6,655.2 1484.1,651.2 1495.6,648.2 1507.1,653.2 1518.6,659.2 1530.2,663.2 1541.7,661.2 1553.2,659.2 1564.7,657.2 1576.2,659.7 1587.8,644.2 1599.3,635.7 1610.8,655.2 1622.3,659.2 1633.8,663.2 1645.4,665.2 1656.9,665.2 1668.4,666.2 1679.9,666.2 1679.9,699.2" fill="#d05cc8" fill-opacity="0.28"/>
<polygon points="977.2,699.2 977.2,669.2 988.7,570.9 1000.2,659.2 1011.8,690.2 1023.3,682.9 1034.8,685.2 1046.3,682.8 1057.8,688.1 1069.4,675.2 1080.9,683.5 1092.4,642.2 1103.9,679.2 1115.4,688.5 1127.0,680.4 1138.5,684.1 1150.0,679.7 1161.5,673.0 1173.0,675.5 1184.6,682.7 1196.1,675.6 1207.6,678.6 1219.1,683.6 1230.6,687.6 1242.2,679.5 1253.7,680.1 1265.2,673.0 1276.7,672.8 1288.2,679.2 1299.8,683.9 1311.3,674.1 1322.8,690.2 1334.3,688.3 1345.8,680.0 1357.4,679.1 1368.9,687.7 1380.4,678.9 1391.9,674.2 1403.4,683.4 1415.0,682.4 1426.5,686.1 1438.0,685.0 1449.5,672.7 1461.0,683.4 1472.6,672.9 1484.1,673.8 1495.6,679.5 1507.1,685.5 1518.6,672.5 1530.2,681.3 1541.7,659.2 1553.2,627.2 1564.7,661.2 1576.2,681.3 1587.8,685.0 1599.3,681.6 1610.8,688.0 1622.3,679.0 1633.8,682.2 1645.4,684.9 1656.9,676.1 1668.4,675.3 1679.9,690.0 1679.9,699.2" fill="#9dc83a" fill-opacity="0.28"/>
<polygon points="977.2,699.2 977.2,698.9 988.7,698.9 1000.2,698.9 1011.8,698.9 1023.3,698.9 1034.8,698.9 1046.3,698.9 1057.8,698.9 1069.4,698.9 1080.9,698.9 1092.4,698.9 1103.9,698.9 1115.4,698.9 1127.0,698.9 1138.5,698.9 1150.0,698.9 1161.5,679.2 1173.0,646.2 1184.6,638.5 1196.1,659.2 1207.6,664.2 1219.1,654.2 1230.6,649.2 1242.2,659.2 1253.7,654.2 1265.2,639.2 1276.7,654.2 1288.2,614.5 1299.8,659.2 1311.3,677.0 1322.8,667.7 1334.3,672.8 1345.8,670.3 1357.4,677.1 1368.9,676.6 1380.4,675.0 1391.9,665.7 1403.4,674.8 1415.0,668.1 1426.5,666.0 1438.0,665.9 1449.5,673.1 1461.0,643.3 1472.6,640.4 1484.1,639.2 1495.6,636.1 1507.1,646.5 1518.6,636.2 1530.2,638.7 1541.7,633.2 1553.2,642.9 1564.7,639.2 1576.2,638.2 1587.8,637.6 1599.3,637.6 1610.8,642.9 1622.3,665.7 1633.8,674.2 1645.4,675.2 1656.9,673.2 1668.4,676.2 1679.9,674.2 1679.9,699.2" fill="#16b3a4" fill-opacity="0.28"/>
<polygon points="977.2,699.2 977.2,675.4 988.7,672.0 1000.2,672.9 1011.8,677.7 1023.3,669.9 1034.8,673.4 1046.3,674.2 1057.8,681.1 1069.4,674.6 1080.9,678.2 1092.4,673.1 1103.9,675.6 1115.4,671.4 1127.0,673.4 1138.5,671.6 1150.0,630.2 1161.5,630.2 1173.0,659.2 1184.6,671.3 1196.1,677.0 1207.6,633.2 1219.1,621.5 1230.6,659.2 1242.2,669.5 1253.7,669.7 1265.2,675.0 1276.7,674.8 1288.2,649.2 1299.8,614.0 1311.3,654.2 1322.8,675.5 1334.3,672.9 1345.8,672.6 1357.4,672.4 1368.9,679.1 1380.4,671.8 1391.9,674.2 1403.4,673.2 1415.0,676.2 1426.5,673.7 1438.0,671.9 1449.5,673.6 1461.0,672.6 1472.6,680.9 1484.1,679.3 1495.6,675.9 1507.1,673.4 1518.6,678.6 1530.2,673.0 1541.7,673.6 1553.2,680.7 1564.7,675.5 1576.2,678.5 1587.8,680.6 1599.3,679.6 1610.8,677.4 1622.3,679.0 1633.8,678.9 1645.4,680.8 1656.9,675.6 1668.4,676.6 1679.9,673.9 1679.9,699.2" fill="#9a4fd0" fill-opacity="0.28"/>
<polygon points="977.2,699.2 977.2,673.3 988.7,674.7 1000.2,676.5 1011.8,679.2 1023.3,677.2 1034.8,671.6 1046.3,670.7 1057.8,676.2 1069.4,671.6 1080.9,671.7 1092.4,672.6 1103.9,672.9 1115.4,671.8 1127.0,676.2 1138.5,672.5 1150.0,677.1 1161.5,666.8 1173.0,666.7 1184.6,667.2 1196.1,667.5 1207.6,667.3 1219.1,665.6 1230.6,664.7 1242.2,667.2 1253.7,667.6 1265.2,664.7 1276.7,666.1 1288.2,666.5 1299.8,667.0 1311.3,665.9 1322.8,665.2 1334.3,666.3 1345.8,666.4 1357.4,667.5 1368.9,665.0 1380.4,667.6 1391.9,666.2 1403.4,665.2 1415.0,667.3 1426.5,665.5 1438.0,664.9 1449.5,665.8 1461.0,665.3 1472.6,667.4 1484.1,666.4 1495.6,667.3 1507.1,665.2 1518.6,666.8 1530.2,666.3 1541.7,664.7 1553.2,665.1 1564.7,664.8 1576.2,666.3 1587.8,666.2 1599.3,665.5 1610.8,655.2 1622.3,639.2 1633.8,624.4 1645.4,629.6 1656.9,629.6 1668.4,657.3 1679.9,658.2 1679.9,699.2" fill="#d548b8" fill-opacity="0.28"/>
<polygon points="977.2,699.2 977.2,680.4 988.7,680.7 1000.2,682.2 1011.8,669.2 1023.3,584.2 1034.8,671.2 1046.3,678.2 1057.8,681.8 1069.4,642.9 1080.9,680.1 1092.4,687.6 1103.9,682.5 1115.4,678.8 1127.0,681.7 1138.5,688.6 1150.0,686.7 1161.5,679.2 1173.0,688.4 1184.6,669.2 1196.1,574.2 1207.6,667.2 1219.1,682.7 1230.6,689.7 1242.2,688.9 1253.7,685.6 1265.2,689.3 1276.7,621.9 1288.2,626.2 1299.8,674.2 1311.3,679.7 1322.8,688.6 1334.3,685.0 1345.8,686.4 1357.4,683.0 1368.9,684.3 1380.4,678.9 1391.9,685.7 1403.4,689.5 1415.0,681.8 1426.5,688.4 1438.0,682.6 1449.5,684.1 1461.0,679.3 1472.6,683.5 1484.1,682.7 1495.6,687.0 1507.1,683.6 1518.6,687.1 1530.2,681.2 1541.7,684.0 1553.2,688.6 1564.7,687.4 1576.2,685.7 1587.8,654.2 1599.3,688.0 1610.8,681.6 1622.3,682.3 1633.8,689.2 1645.4,682.2 1656.9,689.1 1668.4,688.7 1679.9,683.1 1679.9,699.2" fill="#d04a4f" fill-opacity="0.28"/>
<polygon points="977.2,699.2 977.2,681.7 988.7,685.8 1000.2,675.2 1011.8,677.7 1023.3,686.3 1034.8,685.9 1046.3,687.7 1057.8,674.4 1069.4,685.5 1080.9,680.5 1092.4,682.6 1103.9,679.9 1115.4,680.5 1127.0,678.3 1138.5,688.3 1150.0,678.0 1161.5,685.4 1173.0,681.7 1184.6,684.8 1196.1,685.5 1207.6,681.7 1219.1,682.8 1230.6,684.4 1242.2,678.3 1253.7,680.7 1265.2,689.6 1276.7,686.2 1288.2,650.2 1299.8,650.0 1311.3,652.2 1322.8,650.2 1334.3,653.2 1345.8,655.2 1357.4,658.5 1368.9,653.2 1380.4,651.2 1391.9,648.9 1403.4,650.2 1415.0,651.2 1426.5,669.2 1438.0,671.2 1449.5,676.6 1461.0,687.1 1472.6,685.5 1484.1,676.9 1495.6,651.2 1507.1,649.2 1518.6,648.9 1530.2,669.2 1541.7,685.6 1553.2,677.7 1564.7,675.6 1576.2,687.9 1587.8,682.5 1599.3,681.4 1610.8,682.2 1622.3,684.9 1633.8,687.7 1645.4,680.8 1656.9,664.2 1668.4,648.2 1679.9,649.2 1679.9,699.2" fill="#9dc83a" fill-opacity="0.28"/>
<polygon points="977.2,699.2 977.2,681.1 988.7,687.8 1000.2,680.9 1011.8,683.9 1023.3,684.1 1034.8,686.5 1046.3,680.9 1057.8,690.8 1069.4,684.2 1080.9,688.7 1092.4,684.1 1103.9,683.4 1115.4,690.2 1127.0,689.8 1138.5,691.9 1150.0,689.4 1161.5,691.3 1173.0,687.4 1184.6,680.5 1196.1,687.8 1207.6,661.2 1219.1,627.2 1230.6,659.2 1242.2,683.4 1253.7,683.6 1265.2,690.2 1276.7,689.3 1288.2,684.1 1299.8,680.9 1311.3,646.5 1322.8,687.0 1334.3,680.5 1345.8,692.1 1357.4,665.5 1368.9,682.8 1380.4,663.6 1391.9,691.7 1403.4,685.6 1415.0,680.3 1426.5,665.2 1438.0,688.0 1449.5,691.1 1461.0,691.3 1472.6,681.4 1484.1,663.9 1495.6,681.0 1507.1,691.6 1518.6,667.1 1530.2,691.6 1541.7,687.4 1553.2,691.5 1564.7,668.1 1576.2,687.3 1587.8,688.5 1599.3,665.5 1610.8,691.7 1622.3,680.5 1633.8,690.0 1645.4,665.8 1656.9,687.4 1668.4,685.8 1679.9,691.2 1679.9,699.2" fill="#4fb5c8" fill-opacity="0.28"/>
<polygon points="977.2,699.2 977.2,666.2 988.7,655.8 1000.2,671.2 1011.8,679.8 1023.3,664.2 1034.8,657.2 1046.3,658.2 1057.8,686.8 1069.4,684.3 1080.9,663.4 1092.4,670.5 1103.9,682.4 1115.4,685.2 1127.0,665.2 1138.5,670.9 1150.0,666.9 1161.5,684.6 1173.0,672.0 1184.6,679.0 1196.1,682.1 1207.6,679.5 1219.1,672.2 1230.6,679.1 1242.2,678.2 1253.7,684.7 1265.2,666.6 1276.7,671.4 1288.2,667.3 1299.8,676.9 1311.3,666.1 1322.8,674.7 1334.3,672.8 1345.8,673.3 1357.4,669.0 1368.9,677.9 1380.4,685.7 1391.9,687.3 1403.4,682.9 1415.0,687.2 1426.5,665.1 1438.0,675.7 1449.5,668.4 1461.0,688.2 1472.6,676.0 1484.1,665.1 1495.6,672.1 1507.1,677.1 1518.6,676.1 1530.2,685.6 1541.7,684.2 1553.2,684.1 1564.7,678.5 1576.2,678.2 1587.8,665.3 1599.3,684.2 1610.8,681.6 1622.3,681.0 1633.8,684.0 1645.4,680.7 1656.9,682.1 1668.4,675.7 1679.9,687.4 1679.9,699.2" fill="#d6bf3f" fill-opacity="0.28"/>
<polygon points="977.2,699.2 977.2,685.3 988.7,687.7 1000.2,684.7 1011.8,683.5 1023.3,681.2 1034.8,688.5 1046.3,686.8 1057.8,682.3 1069.4,689.5 1080.9,690.8 1092.4,688.5 1103.9,691.1 1115.4,682.9 1127.0,682.4 1138.5,688.4 1150.0,690.6 1161.5,691.2 1173.0,689.3 1184.6,691.2 1196.1,687.1 1207.6,685.3 1219.1,689.3 1230.6,691.5 1242.2,683.8 1253.7,691.6 1265.2,689.8 1276.7,688.8 1288.2,687.7 1299.8,691.0 1311.3,687.2 1322.8,688.4 1334.3,683.2 1345.8,685.5 1357.4,681.4 1368.9,684.4 1380.4,683.1 1391.9,685.3 1403.4,686.9 1415.0,682.4 1426.5,684.3 1438.0,680.7 1449.5,683.5 1461.0,683.8 1472.6,689.0 1484.1,682.5 1495.6,687.6 1507.1,690.6 1518.6,691.4 1530.2,690.2 1541.7,689.0 1553.2,684.1 1564.7,688.8 1576.2,691.4 1587.8,683.0 1599.3,685.5 1610.8,691.9 1622.3,691.6 1633.8,690.6 1645.4,687.9 1656.9,681.9 1668.4,680.8 1679.9,684.9 1679.9,699.2" fill="#e0a455" fill-opacity="0.28"/>
<polygon points="977.2,699.2 977.2,691.9 988.7,689.9 1000.2,690.6 1011.8,690.9 1023.3,694.1 1034.8,688.4 1046.3,685.9 1057.8,686.9 1069.4,693.2 1080.9,688.9 1092.4,692.5 1103.9,687.1 1115.4,689.7 1127.0,684.8 1138.5,686.3 1150.0,693.0 1161.5,691.0 1173.0,685.1 1184.6,689.6 1196.1,689.9 1207.6,689.8 1219.1,686.5 1230.6,684.8 1242.2,688.9 1253.7,684.5 1265.2,688.2 1276.7,693.2 1288.2,686.1 1299.8,690.0 1311.3,693.7 1322.8,684.4 1334.3,693.9 1345.8,688.4 1357.4,689.4 1368.9,685.4 1380.4,690.3 1391.9,692.0 1403.4,691.4 1415.0,692.2 1426.5,688.6 1438.0,690.6 1449.5,686.7 1461.0,691.8 1472.6,690.7 1484.1,691.7 1495.6,684.4 1507.1,685.8 1518.6,685.7 1530.2,688.0 1541.7,690.2 1553.2,692.8 1564.7,685.9 1576.2,689.3 1587.8,693.8 1599.3,692.5 1610.8,693.2 1622.3,687.0 1633.8,685.2 1645.4,692.2 1656.9,686.2 1668.4,691.0 1679.9,687.4 1679.9,699.2" fill="#d04a4f" fill-opacity="0.28"/>
<polygon points="977.2,699.2 977.2,670.5 988.7,676.2 1000.2,672.0 1011.8,682.2 1023.3,691.0 1034.8,678.9 1046.3,677.1 1057.8,686.8 1069.4,681.9 1080.9,683.6 1092.4,690.6 1103.9,683.7 1115.4,682.0 1127.0,679.8 1138.5,674.3 1150.0,681.6 1161.5,667.6 1173.0,671.6 1184.6,669.0 1196.1,674.6 1207.6,675.1 1219.1,678.3 1230.6,672.0 1242.2,682.5 1253.7,677.0 1265.2,674.9 1276.7,678.7 1288.2,684.4 1299.8,689.3 1311.3,689.1 1322.8,682.7 1334.3,677.3 1345.8,673.0 1357.4,674.1 1368.9,683.8 1380.4,668.9 1391.9,684.6 1403.4,674.0 1415.0,689.5 1426.5,673.1 1438.0,675.1 1449.5,668.2 1461.0,669.7 1472.6,674.7 1484.1,671.1 1495.6,673.5 1507.1,676.5 1518.6,686.2 1530.2,678.8 1541.7,669.7 1553.2,685.5 1564.7,667.8 1576.2,678.1 1587.8,681.8 1599.3,691.1 1610.8,681.8 1622.3,686.9 1633.8,675.5 1645.4,669.6 1656.9,669.4 1668.4,676.5 1679.9,681.9 1679.9,699.2" fill="#d6bf3f" fill-opacity="0.28"/>
<polygon points="977.2,699.2 977.2,694.1 988.7,688.3 1000.2,689.7 1011.8,688.0 1023.3,691.5 1034.8,686.3 1046.3,693.1 1057.8,692.1 1069.4,692.5 1080.9,689.0 1092.4,686.2 1103.9,693.5 1115.4,688.9 1127.0,687.5 1138.5,693.0 1150.0,694.6 1161.5,689.5 1173.0,686.9 1184.6,686.4 1196.1,687.9 1207.6,691.0 1219.1,690.9 1230.6,689.9 1242.2,686.2 1253.7,692.2 1265.2,692.4 1276.7,689.1 1288.2,685.5 1299.8,693.3 1311.3,694.9 1322.8,694.0 1334.3,689.6 1345.8,689.2 1357.4,693.4 1368.9,693.3 1380.4,689.3 1391.9,688.7 1403.4,688.3 1415.0,687.9 1426.5,694.6 1438.0,690.4 1449.5,686.9 1461.0,685.6 1472.6,692.0 1484.1,686.7 1495.6,688.7 1507.1,685.9 1518.6,692.9 1530.2,688.2 1541.7,686.8 1553.2,690.4 1564.7,694.2 1576.2,693.3 1587.8,693.6 1599.3,694.3 1610.8,693.7 1622.3,689.0 1633.8,694.2 1645.4,687.6 1656.9,687.8 1668.4,687.0 1679.9,687.2 1679.9,699.2" fill="#9dc83a" fill-opacity="0.28"/>
<polygon points="977.2,699.2 977.2,684.6 988.7,682.1 1000.2,681.7 1011.8,685.7 1023.3,681.6 1034.8,692.0 1046.3,692.0 1057.8,692.4 1069.4,690.7 1080.9,688.7 1092.4,687.7 1103.9,685.0 1115.4,684.3 1127.0,692.2 1138.5,688.4 1150.0,686.7 1161.5,688.7 1173.0,691.8 1184.6,686.0 1196.1,688.7 1207.6,685.0 1219.1,687.3 1230.6,681.6 1242.2,681.9 1253.7,692.3 1265.2,684.1 1276.7,684.5 1288.2,689.6 1299.8,691.8 1311.3,687.5 1322.8,689.0 1334.3,684.4 1345.8,682.2 1357.4,688.6 1368.9,689.7 1380.4,687.2 1391.9,684.8 1403.4,683.7 1415.0,686.3 1426.5,689.6 1438.0,689.2 1449.5,683.0 1461.0,687.0 1472.6,692.6 1484.1,688.2 1495.6,690.3 1507.1,685.2 1518.6,692.3 1530.2,689.9 1541.7,692.0 1553.2,687.5 1564.7,681.4 1576.2,686.7 1587.8,688.6 1599.3,682.0 1610.8,692.1 1622.3,688.9 1633.8,683.5 1645.4,693.1 1656.9,684.0 1668.4,688.9 1679.9,693.0 1679.9,699.2" fill="#e0a455" fill-opacity="0.28"/>
<polygon points="977.2,699.2 977.2,687.7 988.7,684.0 1000.2,685.3 1011.8,682.9 1023.3,691.2 1034.8,688.3 1046.3,674.7 1057.8,684.2 1069.4,683.7 1080.9,690.7 1092.4,687.2 1103.9,675.0 1115.4,679.8 1127.0,683.1 1138.5,691.2 1150.0,685.1 1161.5,678.2 1173.0,684.4 1184.6,681.5 1196.1,676.0 1207.6,680.6 1219.1,680.8 1230.6,691.6 1242.2,691.8 1253.7,678.3 1265.2,684.8 1276.7,676.5 1288.2,677.3 1299.8,675.7 1311.3,685.4 1322.8,674.2 1334.3,678.6 1345.8,676.1 1357.4,689.5 1368.9,678.1 1380.4,684.6 1391.9,674.7 1403.4,674.3 1415.0,688.3 1426.5,684.6 1438.0,687.3 1449.5,683.7 1461.0,687.0 1472.6,680.2 1484.1,690.0 1495.6,689.2 1507.1,684.0 1518.6,690.9 1530.2,685.3 1541.7,676.0 1553.2,676.3 1564.7,688.7 1576.2,691.9 1587.8,677.3 1599.3,674.9 1610.8,681.4 1622.3,689.7 1633.8,687.9 1645.4,675.6 1656.9,675.3 1668.4,691.6 1679.9,688.9 1679.9,699.2" fill="#4fb5c8" fill-opacity="0.28"/>
<polygon points="977.2,699.2 977.2,690.8 988.7,691.5 1000.2,689.3 1011.8,691.0 1023.3,689.2 1034.8,692.0 1046.3,690.4 1057.8,688.3 1069.4,689.5 1080.9,692.3 1092.4,692.2 1103.9,689.8 1115.4,691.0 1127.0,691.0 1138.5,690.6 1150.0,690.1 1161.5,688.4 1173.0,691.6 1184.6,690.1 1196.1,691.5 1207.6,690.2 1219.1,689.4 1230.6,692.1 1242.2,690.5 1253.7,689.5 1265.2,692.7 1276.7,689.2 1288.2,690.8 1299.8,690.4 1311.3,690.0 1322.8,689.1 1334.3,692.4 1345.8,690.4 1357.4,692.5 1368.9,691.0 1380.4,691.1 1391.9,692.6 1403.4,691.4 1415.0,690.7 1426.5,689.8 1438.0,688.5 1449.5,691.0 1461.0,690.3 1472.6,689.5 1484.1,688.5 1495.6,688.4 1507.1,688.3 1518.6,691.3 1530.2,692.0 1541.7,688.5 1553.2,692.4 1564.7,690.7 1576.2,689.4 1587.8,690.3 1599.3,691.0 1610.8,688.5 1622.3,691.4 1633.8,690.2 1645.4,689.0 1656.9,692.1 1668.4,691.1 1679.9,690.5 1679.9,699.2" fill="#b39a4a" fill-opacity="0.8"/>
<polyline points="977.2,679.2 988.7,637.2 1000.2,535.2 1011.8,525.9 1023.3,532.2 1034.8,532.5 1046.3,537.2 1057.8,530.2 1069.4,533.6 1080.9,530.2 1092.4,541.8 1103.9,535.2 1115.4,536.6 1127.0,535.5 1138.5,535.9 1150.0,546.9 1161.5,638.5 1173.0,659.2 1184.6,669.2 1196.1,673.2 1207.6,674.5 1219.1,680.6 1230.6,674.2 1242.2,680.8 1253.7,676.0 1265.2,680.9 1276.7,682.2 1288.2,673.5 1299.8,680.1 1311.3,680.0 1322.8,672.4 1334.3,673.5 1345.8,679.3 1357.4,672.6 1368.9,676.8 1380.4,675.4 1391.9,680.2 1403.4,672.8 1415.0,675.3 1426.5,672.5 1438.0,673.3 1449.5,679.2 1461.0,678.6 1472.6,680.5 1484.1,680.7 1495.6,681.5 1507.1,679.2 1518.6,676.2 1530.2,682.2 1541.7,675.4 1553.2,678.8 1564.7,679.1 1576.2,674.0 1587.8,677.4 1599.3,679.0 1610.8,677.4 1622.3,675.2 1633.8,681.6 1645.4,672.4 1656.9,682.0 1668.4,674.7 1679.9,673.8" fill="none" stroke="#16b3a4" stroke-width="1.25" stroke-opacity="0.95" stroke-linejoin="round"/>
<polyline points="977.2,643.3 988.7,641.2 1000.2,635.9 1011.8,642.2 1023.3,656.2 1034.8,650.2 1046.3,648.2 1057.8,654.2 1069.4,647.2 1080.9,652.2 1092.4,658.2 1103.9,645.2 1115.4,646.2 1127.0,656.2 1138.5,653.2 1150.0,655.2 1161.5,654.2 1173.0,637.7 1184.6,651.2 1196.1,653.2 1207.6,653.2 1219.1,651.2 1230.6,655.2 1242.2,649.2 1253.7,646.2 1265.2,651.2 1276.7,655.2 1288.2,657.2 1299.8,659.2 1311.3,661.2 1322.8,663.2 1334.3,664.2 1345.8,661.2 1357.4,659.2 1368.9,661.2 1380.4,659.2 1391.9,658.2 1403.4,657.2 1415.0,659.2 1426.5,655.2 1438.0,653.2 1449.5,657.2 1461.0,657.2 1472.6,655.2 1484.1,651.2 1495.6,648.2 1507.1,653.2 1518.6,659.2 1530.2,663.2 1541.7,661.2 1553.2,659.2 1564.7,657.2 1576.2,659.7 1587.8,644.2 1599.3,635.7 1610.8,655.2 1622.3,659.2 1633.8,663.2 1645.4,665.2 1656.9,665.2 1668.4,666.2 1679.9,666.2" fill="none" stroke="#d05cc8" stroke-width="1.25" stroke-opacity="0.95" stroke-linejoin="round"/>
<polyline points="977.2,669.2 988.7,570.9 1000.2,659.2 1011.8,690.2 1023.3,682.9 1034.8,685.2 1046.3,682.8 1057.8,688.1 1069.4,675.2 1080.9,683.5 1092.4,642.2 1103.9,679.2 1115.4,688.5 1127.0,680.4 1138.5,684.1 1150.0,679.7 1161.5,673.0 1173.0,675.5 1184.6,682.7 1196.1,675.6 1207.6,678.6 1219.1,683.6 1230.6,687.6 1242.2,679.5 1253.7,680.1 1265.2,673.0 1276.7,672.8 1288.2,679.2 1299.8,683.9 1311.3,674.1 1322.8,690.2 1334.3,688.3 1345.8,680.0 1357.4,679.1 1368.9,687.7 1380.4,678.9 1391.9,674.2 1403.4,683.4 1415.0,682.4 1426.5,686.1 1438.0,685.0 1449.5,672.7 1461.0,683.4 1472.6,672.9 1484.1,673.8 1495.6,679.5 1507.1,685.5 1518.6,672.5 1530.2,681.3 1541.7,659.2 1553.2,627.2 1564.7,661.2 1576.2,681.3 1587.8,685.0 1599.3,681.6 1610.8,688.0 1622.3,679.0 1633.8,682.2 1645.4,684.9 1656.9,676.1 1668.4,675.3 1679.9,690.0" fill="none" stroke="#9dc83a" stroke-width="1.25" stroke-opacity="0.95" stroke-linejoin="round"/>
<polyline points="977.2,698.9 988.7,698.9 1000.2,698.9 1011.8,698.9 1023.3,698.9 1034.8,698.9 1046.3,698.9 1057.8,698.9 1069.4,698.9 1080.9,698.9 1092.4,698.9 1103.9,698.9 1115.4,698.9 1127.0,698.9 1138.5,698.9 1150.0,698.9 1161.5,679.2 1173.0,646.2 1184.6,638.5 1196.1,659.2 1207.6,664.2 1219.1,654.2 1230.6,649.2 1242.2,659.2 1253.7,654.2 1265.2,639.2 1276.7,654.2 1288.2,614.5 1299.8,659.2 1311.3,677.0 1322.8,667.7 1334.3,672.8 1345.8,670.3 1357.4,677.1 1368.9,676.6 1380.4,675.0 1391.9,665.7 1403.4,674.8 1415.0,668.1 1426.5,666.0 1438.0,665.9 1449.5,673.1 1461.0,643.3 1472.6,640.4 1484.1,639.2 1495.6,636.1 1507.1,646.5 1518.6,636.2 1530.2,638.7 1541.7,633.2 1553.2,642.9 1564.7,639.2 1576.2,638.2 1587.8,637.6 1599.3,637.6 1610.8,642.9 1622.3,665.7 1633.8,674.2 1645.4,675.2 1656.9,673.2 1668.4,676.2 1679.9,674.2" fill="none" stroke="#16b3a4" stroke-width="1.25" stroke-opacity="0.95" stroke-linejoin="round"/>
<polyline points="977.2,675.4 988.7,672.0 1000.2,672.9 1011.8,677.7 1023.3,669.9 1034.8,673.4 1046.3,674.2 1057.8,681.1 1069.4,674.6 1080.9,678.2 1092.4,673.1 1103.9,675.6 1115.4,671.4 1127.0,673.4 1138.5,671.6 1150.0,630.2 1161.5,630.2 1173.0,659.2 1184.6,671.3 1196.1,677.0 1207.6,633.2 1219.1,621.5 1230.6,659.2 1242.2,669.5 1253.7,669.7 1265.2,675.0 1276.7,674.8 1288.2,649.2 1299.8,614.0 1311.3,654.2 1322.8,675.5 1334.3,672.9 1345.8,672.6 1357.4,672.4 1368.9,679.1 1380.4,671.8 1391.9,674.2 1403.4,673.2 1415.0,676.2 1426.5,673.7 1438.0,671.9 1449.5,673.6 1461.0,672.6 1472.6,680.9 1484.1,679.3 1495.6,675.9 1507.1,673.4 1518.6,678.6 1530.2,673.0 1541.7,673.6 1553.2,680.7 1564.7,675.5 1576.2,678.5 1587.8,680.6 1599.3,679.6 1610.8,677.4 1622.3,679.0 1633.8,678.9 1645.4,680.8 1656.9,675.6 1668.4,676.6 1679.9,673.9" fill="none" stroke="#9a4fd0" stroke-width="1.25" stroke-opacity="0.95" stroke-linejoin="round"/>
<polyline points="977.2,673.3 988.7,674.7 1000.2,676.5 1011.8,679.2 1023.3,677.2 1034.8,671.6 1046.3,670.7 1057.8,676.2 1069.4,671.6 1080.9,671.7 1092.4,672.6 1103.9,672.9 1115.4,671.8 1127.0,676.2 1138.5,672.5 1150.0,677.1 1161.5,666.8 1173.0,666.7 1184.6,667.2 1196.1,667.5 1207.6,667.3 1219.1,665.6 1230.6,664.7 1242.2,667.2 1253.7,667.6 1265.2,664.7 1276.7,666.1 1288.2,666.5 1299.8,667.0 1311.3,665.9 1322.8,665.2 1334.3,666.3 1345.8,666.4 1357.4,667.5 1368.9,665.0 1380.4,667.6 1391.9,666.2 1403.4,665.2 1415.0,667.3 1426.5,665.5 1438.0,664.9 1449.5,665.8 1461.0,665.3 1472.6,667.4 1484.1,666.4 1495.6,667.3 1507.1,665.2 1518.6,666.8 1530.2,666.3 1541.7,664.7 1553.2,665.1 1564.7,664.8 1576.2,666.3 1587.8,666.2 1599.3,665.5 1610.8,655.2 1622.3,639.2 1633.8,624.4 1645.4,629.6 1656.9,629.6 1668.4,657.3 1679.9,658.2" fill="none" stroke="#d548b8" stroke-width="1.25" stroke-opacity="0.95" stroke-linejoin="round"/>
<polyline points="977.2,680.4 988.7,680.7 1000.2,682.2 1011.8,669.2 1023.3,584.2 1034.8,671.2 1046.3,678.2 1057.8,681.8 1069.4,642.9 1080.9,680.1 1092.4,687.6 1103.9,682.5 1115.4,678.8 1127.0,681.7 1138.5,688.6 1150.0,686.7 1161.5,679.2 1173.0,688.4 1184.6,669.2 1196.1,574.2 1207.6,667.2 1219.1,682.7 1230.6,689.7 1242.2,688.9 1253.7,685.6 1265.2,689.3 1276.7,621.9 1288.2,626.2 1299.8,674.2 1311.3,679.7 1322.8,688.6 1334.3,685.0 1345.8,686.4 1357.4,683.0 1368.9,684.3 1380.4,678.9 1391.9,685.7 1403.4,689.5 1415.0,681.8 1426.5,688.4 1438.0,682.6 1449.5,684.1 1461.0,679.3 1472.6,683.5 1484.1,682.7 1495.6,687.0 1507.1,683.6 1518.6,687.1 1530.2,681.2 1541.7,684.0 1553.2,688.6 1564.7,687.4 1576.2,685.7 1587.8,654.2 1599.3,688.0 1610.8,681.6 1622.3,682.3 1633.8,689.2 1645.4,682.2 1656.9,689.1 1668.4,688.7 1679.9,683.1" fill="none" stroke="#d04a4f" stroke-width="1.25" stroke-opacity="0.95" stroke-linejoin="round"/>
<polyline points="977.2,681.7 988.7,685.8 1000.2,675.2 1011.8,677.7 1023.3,686.3 1034.8,685.9 1046.3,687.7 1057.8,674.4 1069.4,685.5 1080.9,680.5 1092.4,682.6 1103.9,679.9 1115.4,680.5 1127.0,678.3 1138.5,688.3 1150.0,678.0 1161.5,685.4 1173.0,681.7 1184.6,684.8 1196.1,685.5 1207.6,681.7 1219.1,682.8 1230.6,684.4 1242.2,678.3 1253.7,680.7 1265.2,689.6 1276.7,686.2 1288.2,650.2 1299.8,650.0 1311.3,652.2 1322.8,650.2 1334.3,653.2 1345.8,655.2 1357.4,658.5 1368.9,653.2 1380.4,651.2 1391.9,648.9 1403.4,650.2 1415.0,651.2 1426.5,669.2 1438.0,671.2 1449.5,676.6 1461.0,687.1 1472.6,685.5 1484.1,676.9 1495.6,651.2 1507.1,649.2 1518.6,648.9 1530.2,669.2 1541.7,685.6 1553.2,677.7 1564.7,675.6 1576.2,687.9 1587.8,682.5 1599.3,681.4 1610.8,682.2 1622.3,684.9 1633.8,687.7 1645.4,680.8 1656.9,664.2 1668.4,648.2 1679.9,649.2" fill="none" stroke="#9dc83a" stroke-width="1.25" stroke-opacity="0.95" stroke-linejoin="round"/>
<polyline points="977.2,681.1 988.7,687.8 1000.2,680.9 1011.8,683.9 1023.3,684.1 1034.8,686.5 1046.3,680.9 1057.8,690.8 1069.4,684.2 1080.9,688.7 1092.4,684.1 1103.9,683.4 1115.4,690.2 1127.0,689.8 1138.5,691.9 1150.0,689.4 1161.5,691.3 1173.0,687.4 1184.6,680.5 1196.1,687.8 1207.6,661.2 1219.1,627.2 1230.6,659.2 1242.2,683.4 1253.7,683.6 1265.2,690.2 1276.7,689.3 1288.2,684.1 1299.8,680.9 1311.3,646.5 1322.8,687.0 1334.3,680.5 1345.8,692.1 1357.4,665.5 1368.9,682.8 1380.4,663.6 1391.9,691.7 1403.4,685.6 1415.0,680.3 1426.5,665.2 1438.0,688.0 1449.5,691.1 1461.0,691.3 1472.6,681.4 1484.1,663.9 1495.6,681.0 1507.1,691.6 1518.6,667.1 1530.2,691.6 1541.7,687.4 1553.2,691.5 1564.7,668.1 1576.2,687.3 1587.8,688.5 1599.3,665.5 1610.8,691.7 1622.3,680.5 1633.8,690.0 1645.4,665.8 1656.9,687.4 1668.4,685.8 1679.9,691.2" fill="none" stroke="#4fb5c8" stroke-width="1.25" stroke-opacity="0.95" stroke-linejoin="round"/>
<polyline points="977.2,666.2 988.7,655.8 1000.2,671.2 1011.8,679.8 1023.3,664.2 1034.8,657.2 1046.3,658.2 1057.8,686.8 1069.4,684.3 1080.9,663.4 1092.4,670.5 1103.9,682.4 1115.4,685.2 1127.0,665.2 1138.5,670.9 1150.0,666.9 1161.5,684.6 1173.0,672.0 1184.6,679.0 1196.1,682.1 1207.6,679.5 1219.1,672.2 1230.6,679.1 1242.2,678.2 1253.7,684.7 1265.2,666.6 1276.7,671.4 1288.2,667.3 1299.8,676.9 1311.3,666.1 1322.8,674.7 1334.3,672.8 1345.8,673.3 1357.4,669.0 1368.9,677.9 1380.4,685.7 1391.9,687.3 1403.4,682.9 1415.0,687.2 1426.5,665.1 1438.0,675.7 1449.5,668.4 1461.0,688.2 1472.6,676.0 1484.1,665.1 1495.6,672.1 1507.1,677.1 1518.6,676.1 1530.2,685.6 1541.7,684.2 1553.2,684.1 1564.7,678.5 1576.2,678.2 1587.8,665.3 1599.3,684.2 1610.8,681.6 1622.3,681.0 1633.8,684.0 1645.4,680.7 1656.9,682.1 1668.4,675.7 1679.9,687.4" fill="none" stroke="#d6bf3f" stroke-width="1.25" stroke-opacity="0.95" stroke-linejoin="round"/>
<polyline points="977.2,685.3 988.7,687.7 1000.2,684.7 1011.8,683.5 1023.3,681.2 1034.8,688.5 1046.3,686.8 1057.8,682.3 1069.4,689.5 1080.9,690.8 1092.4,688.5 1103.9,691.1 1115.4,682.9 1127.0,682.4 1138.5,688.4 1150.0,690.6 1161.5,691.2 1173.0,689.3 1184.6,691.2 1196.1,687.1 1207.6,685.3 1219.1,689.3 1230.6,691.5 1242.2,683.8 1253.7,691.6 1265.2,689.8 1276.7,688.8 1288.2,687.7 1299.8,691.0 1311.3,687.2 1322.8,688.4 1334.3,683.2 1345.8,685.5 1357.4,681.4 1368.9,684.4 1380.4,683.1 1391.9,685.3 1403.4,686.9 1415.0,682.4 1426.5,684.3 1438.0,680.7 1449.5,683.5 1461.0,683.8 1472.6,689.0 1484.1,682.5 1495.6,687.6 1507.1,690.6 1518.6,691.4 1530.2,690.2 1541.7,689.0 1553.2,684.1 1564.7,688.8 1576.2,691.4 1587.8,683.0 1599.3,685.5 1610.8,691.9 1622.3,691.6 1633.8,690.6 1645.4,687.9 1656.9,681.9 1668.4,680.8 1679.9,684.9" fill="none" stroke="#e0a455" stroke-width="1.25" stroke-opacity="0.75" stroke-linejoin="round"/>
<polyline points="977.2,691.9 988.7,689.9 1000.2,690.6 1011.8,690.9 1023.3,694.1 1034.8,688.4 1046.3,685.9 1057.8,686.9 1069.4,693.2 1080.9,688.9 1092.4,692.5 1103.9,687.1 1115.4,689.7 1127.0,684.8 1138.5,686.3 1150.0,693.0 1161.5,691.0 1173.0,685.1 1184.6,689.6 1196.1,689.9 1207.6,689.8 1219.1,686.5 1230.6,684.8 1242.2,688.9 1253.7,684.5 1265.2,688.2 1276.7,693.2 1288.2,686.1 1299.8,690.0 1311.3,693.7 1322.8,684.4 1334.3,693.9 1345.8,688.4 1357.4,689.4 1368.9,685.4 1380.4,690.3 1391.9,692.0 1403.4,691.4 1415.0,692.2 1426.5,688.6 1438.0,690.6 1449.5,686.7 1461.0,691.8 1472.6,690.7 1484.1,691.7 1495.6,684.4 1507.1,685.8 1518.6,685.7 1530.2,688.0 1541.7,690.2 1553.2,692.8 1564.7,685.9 1576.2,689.3 1587.8,693.8 1599.3,692.5 1610.8,693.2 1622.3,687.0 1633.8,685.2 1645.4,692.2 1656.9,686.2 1668.4,691.0 1679.9,687.4" fill="none" stroke="#d04a4f" stroke-width="1.25" stroke-opacity="0.75" stroke-linejoin="round"/>
<polyline points="977.2,670.5 988.7,676.2 1000.2,672.0 1011.8,682.2 1023.3,691.0 1034.8,678.9 1046.3,677.1 1057.8,686.8 1069.4,681.9 1080.9,683.6 1092.4,690.6 1103.9,683.7 1115.4,682.0 1127.0,679.8 1138.5,674.3 1150.0,681.6 1161.5,667.6 1173.0,671.6 1184.6,669.0 1196.1,674.6 1207.6,675.1 1219.1,678.3 1230.6,672.0 1242.2,682.5 1253.7,677.0 1265.2,674.9 1276.7,678.7 1288.2,684.4 1299.8,689.3 1311.3,689.1 1322.8,682.7 1334.3,677.3 1345.8,673.0 1357.4,674.1 1368.9,683.8 1380.4,668.9 1391.9,684.6 1403.4,674.0 1415.0,689.5 1426.5,673.1 1438.0,675.1 1449.5,668.2 1461.0,669.7 1472.6,674.7 1484.1,671.1 1495.6,673.5 1507.1,676.5 1518.6,686.2 1530.2,678.8 1541.7,669.7 1553.2,685.5 1564.7,667.8 1576.2,678.1 1587.8,681.8 1599.3,691.1 1610.8,681.8 1622.3,686.9 1633.8,675.5 1645.4,669.6 1656.9,669.4 1668.4,676.5 1679.9,681.9" fill="none" stroke="#d6bf3f" stroke-width="1.25" stroke-opacity="0.75" stroke-linejoin="round"/>
<polyline points="977.2,694.1 988.7,688.3 1000.2,689.7 1011.8,688.0 1023.3,691.5 1034.8,686.3 1046.3,693.1 1057.8,692.1 1069.4,692.5 1080.9,689.0 1092.4,686.2 1103.9,693.5 1115.4,688.9 1127.0,687.5 1138.5,693.0 1150.0,694.6 1161.5,689.5 1173.0,686.9 1184.6,686.4 1196.1,687.9 1207.6,691.0 1219.1,690.9 1230.6,689.9 1242.2,686.2 1253.7,692.2 1265.2,692.4 1276.7,689.1 1288.2,685.5 1299.8,693.3 1311.3,694.9 1322.8,694.0 1334.3,689.6 1345.8,689.2 1357.4,693.4 1368.9,693.3 1380.4,689.3 1391.9,688.7 1403.4,688.3 1415.0,687.9 1426.5,694.6 1438.0,690.4 1449.5,686.9 1461.0,685.6 1472.6,692.0 1484.1,686.7 1495.6,688.7 1507.1,685.9 1518.6,692.9 1530.2,688.2 1541.7,686.8 1553.2,690.4 1564.7,694.2 1576.2,693.3 1587.8,693.6 1599.3,694.3 1610.8,693.7 1622.3,689.0 1633.8,694.2 1645.4,687.6 1656.9,687.8 1668.4,687.0 1679.9,687.2" fill="none" stroke="#9dc83a" stroke-width="1.25" stroke-opacity="0.75" stroke-linejoin="round"/>
<polyline points="977.2,684.6 988.7,682.1 1000.2,681.7 1011.8,685.7 1023.3,681.6 1034.8,692.0 1046.3,692.0 1057.8,692.4 1069.4,690.7 1080.9,688.7 1092.4,687.7 1103.9,685.0 1115.4,684.3 1127.0,692.2 1138.5,688.4 1150.0,686.7 1161.5,688.7 1173.0,691.8 1184.6,686.0 1196.1,688.7 1207.6,685.0 1219.1,687.3 1230.6,681.6 1242.2,681.9 1253.7,692.3 1265.2,684.1 1276.7,684.5 1288.2,689.6 1299.8,691.8 1311.3,687.5 1322.8,689.0 1334.3,684.4 1345.8,682.2 1357.4,688.6 1368.9,689.7 1380.4,687.2 1391.9,684.8 1403.4,683.7 1415.0,686.3 1426.5,689.6 1438.0,689.2 1449.5,683.0 1461.0,687.0 1472.6,692.6 1484.1,688.2 1495.6,690.3 1507.1,685.2 1518.6,692.3 1530.2,689.9 1541.7,692.0 1553.2,687.5 1564.7,681.4 1576.2,686.7 1587.8,688.6 1599.3,682.0 1610.8,692.1 1622.3,688.9 1633.8,683.5 1645.4,693.1 1656.9,684.0 1668.4,688.9 1679.9,693.0" fill="none" stroke="#e0a455" stroke-width="1.25" stroke-opacity="0.75" stroke-linejoin="round"/>
<polyline points="977.2,687.7 988.7,684.0 1000.2,685.3 1011.8,682.9 1023.3,691.2 1034.8,688.3 1046.3,674.7 1057.8,684.2 1069.4,683.7 1080.9,690.7 1092.4,687.2 1103.9,675.0 1115.4,679.8 1127.0,683.1 1138.5,691.2 1150.0,685.1 1161.5,678.2 1173.0,684.4 1184.6,681.5 1196.1,676.0 1207.6,680.6 1219.1,680.8 1230.6,691.6 1242.2,691.8 1253.7,678.3 1265.2,684.8 1276.7,676.5 1288.2,677.3 1299.8,675.7 1311.3,685.4 1322.8,674.2 1334.3,678.6 1345.8,676.1 1357.4,689.5 1368.9,678.1 1380.4,684.6 1391.9,674.7 1403.4,674.3 1415.0,688.3 1426.5,684.6 1438.0,687.3 1449.5,683.7 1461.0,687.0 1472.6,680.2 1484.1,690.0 1495.6,689.2 1507.1,684.0 1518.6,690.9 1530.2,685.3 1541.7,676.0 1553.2,676.3 1564.7,688.7 1576.2,691.9 1587.8,677.3 1599.3,674.9 1610.8,681.4 1622.3,689.7 1633.8,687.9 1645.4,675.6 1656.9,675.3 1668.4,691.6 1679.9,688.9" fill="none" stroke="#4fb5c8" stroke-width="1.25" stroke-opacity="0.75" stroke-linejoin="round"/>
</svg>
<div class="dot" style="left:1709.8px;top:519.8px;background:#16b3a4"></div>
<span class="t" style="left:1725.90px;top:517.10px;font-size:12px;line-height:14px;color:#d6dce8;letter-spacing:0.34px;">Netherlands</span>
<div class="act" style="left:1840.2px;top:517.8px"><i style="top:0"></i><i style="top:4.5px"></i><i style="top:9px"></i></div>
<div class="dot" style="left:1709.8px;top:541.8px;background:#d05cc8"></div>
<span class="t" style="left:1725.90px;top:539.10px;font-size:12px;line-height:14px;color:#d6dce8;letter-spacing:0.34px;">United States</span>
<div class="act" style="left:1840.2px;top:539.8px"><i style="top:0"></i><i style="top:4.5px"></i><i style="top:9px"></i></div>
<div class="dot" style="left:1709.8px;top:563.8px;background:#9dc83a"></div>
<span class="t" style="left:1725.90px;top:561.10px;font-size:12px;line-height:14px;color:#d6dce8;letter-spacing:0.34px;">Romania</span>
<div class="act" style="left:1840.2px;top:561.8px"><i style="top:0"></i><i style="top:4.5px"></i><i style="top:9px"></i></div>
<div class="dot" style="left:1709.8px;top:585.8px;background:#16b3a4"></div>
<span class="t" style="left:1725.90px;top:583.10px;font-size:12px;line-height:14px;color:#d6dce8;letter-spacing:0.34px;">The Netherlands</span>
<div class="act" style="left:1840.2px;top:583.8px"><i style="top:0"></i><i style="top:4.5px"></i><i style="top:9px"></i></div>
<div class="dot" style="left:1709.8px;top:607.8px;background:#9a4fd0"></div>
<span class="t" style="left:1725.90px;top:605.10px;font-size:12px;line-height:14px;color:#d6dce8;letter-spacing:0.34px;">Germany</span>
<div class="act" style="left:1840.2px;top:605.8px"><i style="top:0"></i><i style="top:4.5px"></i><i style="top:9px"></i></div>
<div class="dot" style="left:1709.8px;top:629.8px;background:#d548b8"></div>
<span class="t" style="left:1725.90px;top:627.10px;font-size:12px;line-height:14px;color:#d6dce8;letter-spacing:0.34px;">Ukraine</span>
<div class="act" style="left:1840.2px;top:627.8px"><i style="top:0"></i><i style="top:4.5px"></i><i style="top:9px"></i></div>
<div class="dot" style="left:1709.8px;top:651.8px;background:#d04a4f"></div>
<span class="t" style="left:1725.90px;top:649.10px;font-size:12px;line-height:14px;color:#d6dce8;letter-spacing:0.34px;">Seychelles</span>
<div class="act" style="left:1840.2px;top:649.8px"><i style="top:0"></i><i style="top:4.5px"></i><i style="top:9px"></i></div>
<div class="dot" style="left:1709.8px;top:673.8px;background:#9dc83a"></div>
<span class="t" style="left:1725.90px;top:671.10px;font-size:12px;line-height:14px;color:#d6dce8;letter-spacing:0.34px;">China</span>
<div class="act" style="left:1840.2px;top:671.8px"><i style="top:0"></i><i style="top:4.5px"></i><i style="top:9px"></i></div>
<div class="dot" style="left:1709.8px;top:695.8px;background:#16b3a4"></div>
<span class="t" style="left:1725.90px;top:693.10px;font-size:12px;line-height:14px;color:#d6dce8;letter-spacing:0.34px;">Indonesia</span>
<div class="act" style="left:1840.2px;top:693.8px"><i style="top:0"></i><i style="top:4.5px"></i><i style="top:9px"></i></div>
<div class="dot" style="left:1709.8px;top:717.8px;background:#d6bf3f"></div>
<span class="t" style="left:1725.90px;top:715.10px;font-size:12px;line-height:14px;color:#d6dce8;letter-spacing:0.34px;">India</span>
<div class="act" style="left:1840.2px;top:715.8px"><i style="top:0"></i><i style="top:4.5px"></i><i style="top:9px"></i></div>
<div class="abs" style="left:1858px;top:513px;width:5.5px;height:136px;background:#3a4761;border-radius:3px"></div>
<svg width="1874" height="737" viewBox="0 0 1874 737"><path d="M1857.7,508 L1860.8,504 L1863.9,508Z M1857.7,725.4 L1860.8,729.4 L1863.9,725.4Z" fill="#3a4761"/></svg>
<div class="abs" style="left:1870.5px;top:520.5px;width:12px;height:46px;background:#e7f0b4;border:2px solid #9ccc3c;border-radius:4px"></div>
</body></html>
